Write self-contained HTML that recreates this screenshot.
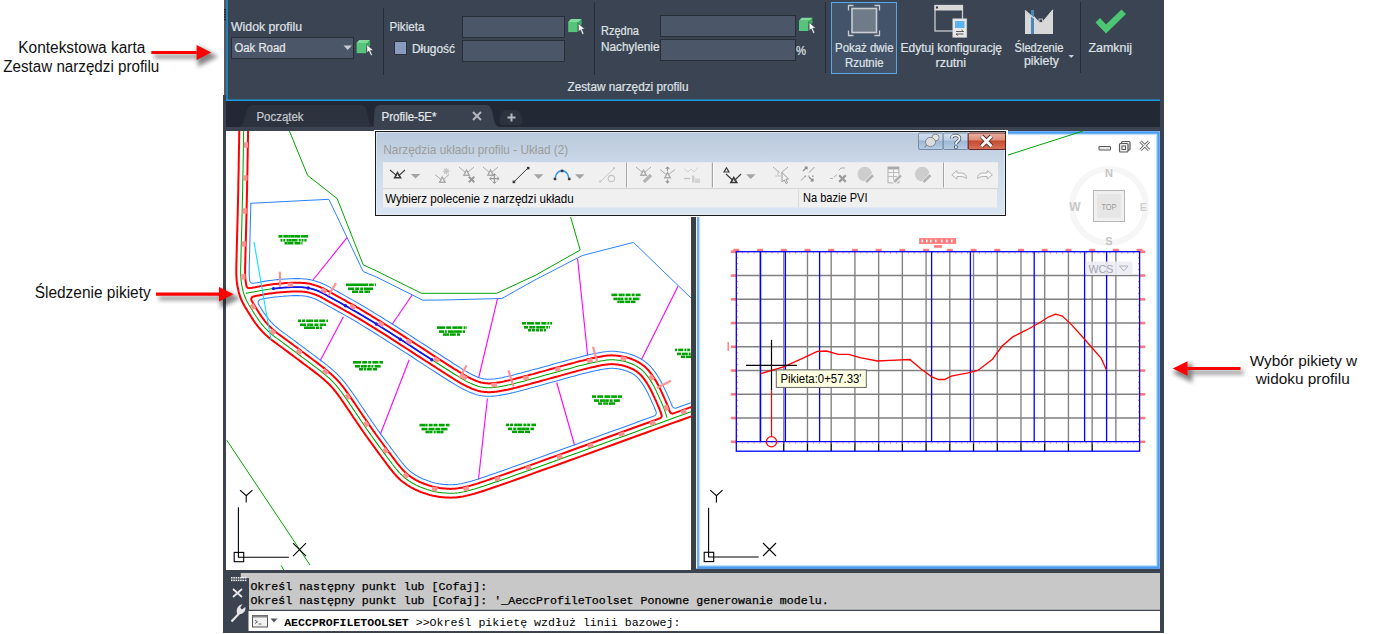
<!DOCTYPE html>
<html><head><meta charset="utf-8"><title>Civil 3D</title>
<style>html,body{margin:0;padding:0;width:1384px;height:634px;overflow:hidden;background:#fff}svg{display:block}</style>
</head><body>
<svg width="1384" height="634" viewBox="0 0 1384 634" shape-rendering="auto">
<rect x="0" y="0" width="1384" height="634" fill="#ffffff" />
<rect x="223" y="95" width="941" height="538" fill="#3b4250" />
<rect x="224" y="0" width="940" height="95" fill="#3b4250" />
<rect x="224" y="0" width="2.6" height="95" fill="#5a5856" />
<rect x="224.2" y="9" width="1.6" height="1.2" fill="#111" />
<rect x="224.2" y="11.5" width="1.6" height="1.2" fill="#111" />
<rect x="224.2" y="14" width="1.6" height="1.2" fill="#111" />
<rect x="224.2" y="16.5" width="1.6" height="1.2" fill="#111" />
<rect x="224.2" y="19" width="1.6" height="1.2" fill="#111" />
<rect x="226" y="0" width="934" height="101" fill="#3b4453" />
<rect x="226" y="0" width="2" height="101" fill="#1b7fc0" />
<rect x="226" y="99.5" width="934" height="1.6" fill="#1c9be0" />
<rect x="383" y="8" width="1" height="67" fill="#262c35" />
<rect x="594" y="2" width="1" height="73" fill="#262c35" />
<rect x="825" y="2" width="1" height="71" fill="#262c35" />
<rect x="1080" y="2" width="1" height="71" fill="#262c35" />
<text x="231" y="31" font-family="Liberation Sans" font-size="12" fill="#dfe1e5" font-weight="normal" text-anchor="start" textLength="71" lengthAdjust="spacingAndGlyphs" stroke="#dfe1e5" stroke-width="0.22">Widok profilu</text>
<rect x="231.5" y="37.5" width="122" height="21" fill="#4b5669" stroke="#282e38" stroke-width="1" />
<text x="234.5" y="52" font-family="Liberation Sans" font-size="12" fill="#e4e6ea" font-weight="normal" text-anchor="start" textLength="51" lengthAdjust="spacingAndGlyphs" stroke="#e4e6ea" stroke-width="0.22">Oak Road</text>
<path d="M343.5 45.5 L352 45.5 L347.75 50 Z" stroke="none" stroke-width="1" fill="#c8ccd2" />
<path d="M356.6 43 L366.0 43 L366.0 53.2 L356.6 53.2 Z" stroke="none" stroke-width="1" fill="#56c47a" />
<path d="M356.6 43 L359.20000000000005 40 L370.1 40 L367.5 43 Z" stroke="none" stroke-width="1" fill="#80da9c" />
<path d="M366.0 43 L367.5 43 L370.1 40 L370.1 45.5 L366.0 48 Z" stroke="none" stroke-width="1" fill="#3fae62" />
<path d="M366.8 44.6 L366.8 52.8 L368.8 51 L370.8 55.6 L372.40000000000003 54.9 L370.40000000000003 50.4 L373.20000000000005 50.2 Z" stroke="#353b45" stroke-width="0.5" fill="#f4f4f4" />
<text x="389.5" y="31" font-family="Liberation Sans" font-size="12" fill="#dfe1e5" font-weight="normal" text-anchor="start" textLength="35" lengthAdjust="spacingAndGlyphs" stroke="#dfe1e5" stroke-width="0.22">Pikieta</text>
<rect x="462.5" y="16.5" width="102" height="21" fill="#4b5669" stroke="#282e38" stroke-width="1" />
<rect x="462.5" y="40.5" width="102" height="21" fill="#4b5669" stroke="#282e38" stroke-width="1" />
<path d="M568.2 21.9 L577.6 21.9 L577.6 32.099999999999994 L568.2 32.099999999999994 Z" stroke="none" stroke-width="1" fill="#56c47a" />
<path d="M568.2 21.9 L570.8000000000001 18.9 L581.7 18.9 L579.1 21.9 Z" stroke="none" stroke-width="1" fill="#80da9c" />
<path d="M577.6 21.9 L579.1 21.9 L581.7 18.9 L581.7 24.4 L577.6 26.9 Z" stroke="none" stroke-width="1" fill="#3fae62" />
<path d="M578.4000000000001 23.5 L578.4000000000001 31.7 L580.4000000000001 29.9 L582.4000000000001 34.5 L584.0 33.8 L582.0 29.299999999999997 L584.8000000000001 29.099999999999998 Z" stroke="#353b45" stroke-width="0.5" fill="#f4f4f4" />
<rect x="394.5" y="41.5" width="12" height="13" fill="#8a9abd" stroke="#2d333d" stroke-width="1" />
<text x="412" y="53" font-family="Liberation Sans" font-size="12" fill="#dfe1e5" font-weight="normal" text-anchor="start" textLength="43" lengthAdjust="spacingAndGlyphs" stroke="#dfe1e5" stroke-width="0.22">Długość</text>
<text x="601" y="34.5" font-family="Liberation Sans" font-size="12" fill="#dfe1e5" font-weight="normal" text-anchor="start" textLength="38" lengthAdjust="spacingAndGlyphs" stroke="#dfe1e5" stroke-width="0.22">Rzędna</text>
<text x="601" y="50.5" font-family="Liberation Sans" font-size="12" fill="#dfe1e5" font-weight="normal" text-anchor="start" textLength="58.5" lengthAdjust="spacingAndGlyphs" stroke="#dfe1e5" stroke-width="0.22">Nachylenie</text>
<rect x="660.5" y="15.5" width="135" height="21" fill="#4b5669" stroke="#282e38" stroke-width="1" />
<rect x="660.5" y="39.5" width="135" height="21" fill="#4b5669" stroke="#282e38" stroke-width="1" />
<text x="796" y="55" font-family="Liberation Sans" font-size="12" fill="#dfe1e5" font-weight="normal" text-anchor="start" textLength="10" lengthAdjust="spacingAndGlyphs" stroke="#dfe1e5" stroke-width="0.22">%</text>
<path d="M799 20.8 L808.4 20.8 L808.4 31.0 L799 31.0 Z" stroke="none" stroke-width="1" fill="#56c47a" />
<path d="M799 20.8 L801.6 17.8 L812.5 17.8 L809.9 20.8 Z" stroke="none" stroke-width="1" fill="#80da9c" />
<path d="M808.4 20.8 L809.9 20.8 L812.5 17.8 L812.5 23.3 L808.4 25.8 Z" stroke="none" stroke-width="1" fill="#3fae62" />
<path d="M809.2 22.4 L809.2 30.6 L811.2 28.8 L813.2 33.4 L814.8 32.7 L812.8 28.200000000000003 L815.6 28.0 Z" stroke="#353b45" stroke-width="0.5" fill="#f4f4f4" />
<rect x="831.5" y="2.5" width="65" height="71" fill="#43536a" stroke="#5aa7e6" stroke-width="1" />
<rect x="852" y="8.5" width="24.5" height="24" fill="#6f7b89" stroke="#c9cdd2" stroke-width="1.6" />
<path d="M853.5 5.5 L848.5 5.5 L848.5 10.5" stroke="#c9cdd2" stroke-width="1.3" fill="none" />
<path d="M874.5 5.5 L879.5 5.5 L879.5 10.5" stroke="#c9cdd2" stroke-width="1.3" fill="none" />
<path d="M853.5 35.5 L848.5 35.5 L848.5 30.5" stroke="#c9cdd2" stroke-width="1.3" fill="none" />
<path d="M874.5 35.5 L879.5 35.5 L879.5 30.5" stroke="#c9cdd2" stroke-width="1.3" fill="none" />
<text x="835" y="51.5" font-family="Liberation Sans" font-size="12" fill="#dfe1e5" font-weight="normal" text-anchor="start" textLength="58.5" lengthAdjust="spacingAndGlyphs" stroke="#dfe1e5" stroke-width="0.22">Pokaż dwie</text>
<text x="845" y="66.5" font-family="Liberation Sans" font-size="12" fill="#dfe1e5" font-weight="normal" text-anchor="start" textLength="38.5" lengthAdjust="spacingAndGlyphs" stroke="#dfe1e5" stroke-width="0.22">Rzutnie</text>
<rect x="935" y="5.5" width="27.5" height="25.5" fill="none" stroke="#c9cdd2" stroke-width="1.3" />
<rect x="934.5" y="5" width="28.5" height="5.5" fill="#d9d9d9" />
<rect x="936" y="6.5" width="2" height="2" fill="#333" />
<rect x="952.8" y="18.8" width="14" height="18.5" fill="#e8e8e8" stroke="#c0c0c0" stroke-width="0.6" />
<rect x="955" y="21" width="9.5" height="7" fill="#5ab4f2" />
<path d="M956 31.5 L963.5 31.5 M961.5 30 L963.5 31.5 M956 34 L963.5 34 M958 35.5 L956 34" stroke="#333" stroke-width="0.8" fill="none" />
<text x="900.5" y="51.5" font-family="Liberation Sans" font-size="12" fill="#dfe1e5" font-weight="normal" text-anchor="start" textLength="101.5" lengthAdjust="spacingAndGlyphs" stroke="#dfe1e5" stroke-width="0.22">Edytuj konfigurację</text>
<text x="935.5" y="66.5" font-family="Liberation Sans" font-size="12" fill="#dfe1e5" font-weight="normal" text-anchor="start" textLength="30.5" lengthAdjust="spacingAndGlyphs" stroke="#dfe1e5" stroke-width="0.22">rzutni</text>
<path d="M1025 11 L1031 16 L1031 34 L1025 34 Z" stroke="none" stroke-width="1" fill="#d8d8d8" />
<path d="M1034 16 L1038.5 21 L1043 21 L1053 10 L1053 34 L1034 34 Z" stroke="none" stroke-width="1" fill="#d8d8d8" />
<rect x="1031" y="10" width="3" height="24" fill="#4a86b8" />
<path d="M1025 10.5 L1038.5 22 L1043 22 L1053 10" stroke="#d8d8d8" stroke-width="1.2" fill="none" />
<rect x="1039" y="19" width="3.5" height="3.5" fill="#3b4453" stroke="#d8d8d8" stroke-width="0.8" />
<text x="1014.5" y="51.5" font-family="Liberation Sans" font-size="12" fill="#dfe1e5" font-weight="normal" text-anchor="start" textLength="49" lengthAdjust="spacingAndGlyphs" stroke="#dfe1e5" stroke-width="0.22">Śledzenie</text>
<text x="1024" y="65" font-family="Liberation Sans" font-size="12" fill="#dfe1e5" font-weight="normal" text-anchor="start" textLength="35" lengthAdjust="spacingAndGlyphs" stroke="#dfe1e5" stroke-width="0.22">pikiety</text>
<path d="M1068.5 55 L1074 55 L1071.25 58 Z" stroke="none" stroke-width="1" fill="#c8ccd2" />
<path d="M1095.5 22.5 L1100 18 L1106 24.5 L1121.5 9.5 L1126 14 L1106 33.5 Z" stroke="none" stroke-width="1" fill="#4cc672" />
<text x="1088.5" y="51.5" font-family="Liberation Sans" font-size="12" fill="#dfe1e5" font-weight="normal" text-anchor="start" textLength="43.5" lengthAdjust="spacingAndGlyphs" stroke="#dfe1e5" stroke-width="0.22">Zamknij</text>
<text x="567.5" y="91" font-family="Liberation Sans" font-size="12" fill="#dfe1e5" font-weight="normal" text-anchor="start" textLength="121" lengthAdjust="spacingAndGlyphs" stroke="#dfe1e5" stroke-width="0.22">Zestaw narzędzi profilu</text>
<rect x="226" y="101" width="934" height="26" fill="#232934" />
<path d="M239 127 C245 127 245 105 252 105 L360 105 C366 105 367 110 368 118 C369 124 372 127 376 127 Z" stroke="none" stroke-width="1" fill="#2c333e" />
<text x="256.5" y="120.5" font-family="Liberation Sans" font-size="12" fill="#c4c8cf" font-weight="normal" text-anchor="start" textLength="47" lengthAdjust="spacingAndGlyphs" stroke="#c4c8cf" stroke-width="0.22">Początek</text>
<path d="M373.5 127 L374.5 111 C375 107 377 105 381 105 L486 105 C492 105 492 112 494 120 C495 125 497 127 500 127 Z" stroke="none" stroke-width="1" fill="#3a4250" />
<text x="381.5" y="120.5" font-family="Liberation Sans" font-size="12" fill="#e4e6ea" font-weight="normal" text-anchor="start" textLength="55" lengthAdjust="spacingAndGlyphs" stroke="#e4e6ea" stroke-width="0.22">Profile-5E*</text>
<path d="M473 112 L481 120 M481 112 L473 120" stroke="#b4b8bf" stroke-width="2" fill="none" />
<path d="M500 124 C499 116 501 110 507 110 L516 110 C520 110 521 114 522 119 C523 123 523 125 519 125 L503 125 Z" stroke="none" stroke-width="1" fill="#2c333e" />
<path d="M507.5 117.5 L515.5 117.5 M511.5 113.5 L511.5 121.5" stroke="#b4b8bf" stroke-width="2" fill="none" />
<rect x="223" y="127" width="941" height="4" fill="#3b4250" />
<rect x="226" y="131" width="465.5" height="439" fill="#ffffff" />
<rect x="691" y="131" width="5" height="441" fill="#3c3f44" />
<rect x="696" y="131" width="464" height="437.5" fill="#ffffff" />
<rect x="697.5" y="132.5" width="461" height="435" fill="none" stroke="#4a9cf2" stroke-width="2.6" />
<rect x="699.6" y="134.6" width="457" height="431" fill="none" stroke="#b8dcff" stroke-width="1" />
<rect x="696" y="131" width="1.2" height="437.5" fill="#e8f2ff" />
<defs><clipPath id="clipL"><rect x="226" y="131" width="465" height="439"/></clipPath></defs>
<g clip-path="url(#clipL)">
<polyline points="250.4,203.3 328.9,199.3 363.2,271.5 376.0,276.8 422.9,300.2 442.0,300.0 501.8,298.5 536.0,279.4 582.3,255.5 633.5,242.4 656.1,264.3 700.0,306.7" fill="none" stroke="#2b82ff" stroke-width="1" />
<polyline points="289.4,131.0 307.6,175.4 337.2,198.6 363.2,264.8 376.0,270.7 421.5,293.3 496.6,293.3 536.0,275.0 580.2,250.0 570.0,215.0" fill="none" stroke="#00a300" stroke-width="1" />
<polyline points="347.0,237.6 313.0,280.0" fill="none" stroke="#ff00ff" stroke-width="1.1" />
<polyline points="343.4,316.8 320.0,361.0" fill="none" stroke="#ff00ff" stroke-width="1.1" />
<polyline points="412.1,295.0 391.0,326.0" fill="none" stroke="#ff00ff" stroke-width="1.1" />
<polyline points="409.2,359.8 379.5,436.5" fill="none" stroke="#ff00ff" stroke-width="1.1" />
<polyline points="497.5,298.6 478.6,378.0" fill="none" stroke="#ff00ff" stroke-width="1.1" />
<polyline points="487.4,398.5 478.3,481.0" fill="none" stroke="#ff00ff" stroke-width="1.1" />
<polyline points="577.6,258.6 587.8,357.0" fill="none" stroke="#ff00ff" stroke-width="1.1" />
<polyline points="678.0,286.3 640.7,361.0" fill="none" stroke="#ff00ff" stroke-width="1.1" />
<polyline points="556.7,382.5 574.8,446.0" fill="none" stroke="#ff00ff" stroke-width="1.1" />
<polyline points="226.8,440.3 310.0,565.0" fill="none" stroke="#00a300" stroke-width="1" />
<polyline points="281.2,565.5 283.7,570.0" fill="none" stroke="#00a300" stroke-width="1" />
<path d="M236.1 100.1 L236.1 100.3 L236.1 100.7 L236.1 101.1 L236.1 101.7 L236.1 102.5 L236.1 103.3 L236.1 104.3 L236.0 105.4 L236.0 106.6 L236.0 107.9 L236.0 109.4 L236.0 110.9 L236.0 112.6 L236.0 114.5 L235.9 116.4 L235.9 118.5 L235.9 120.7 L235.9 123.1 L235.8 125.6 L235.8 128.3 L235.8 131.1 L235.7 134.1 L235.7 137.2 L235.6 140.5 L235.6 143.9 L235.5 147.4 L235.4 151.2 L235.4 155.0 L235.3 159.0 L235.2 163.2 L235.2 167.5 L235.1 171.8 L235.0 176.0 L234.9 180.3 L234.8 184.5 L234.8 188.6 L234.7 192.8 L234.6 196.9 L234.5 201.0 L234.4 205.1 L234.3 209.1 L234.2 213.1 L234.1 217.1 L234.0 221.0 L233.9 225.0 L233.8 228.8 L233.7 232.7 L233.6 236.4 L233.5 239.9 L233.4 243.2 L233.3 246.4 L233.3 249.4 L233.2 252.1 L233.1 254.7 L233.1 257.1 L233.0 259.4 L233.0 261.4 L232.9 263.3 L232.9 264.9 L232.9 266.4 L232.8 267.8 L232.8 268.9 L232.8 268.9 L232.8 269.9 L232.8 269.9 L232.8 270.8 L232.8 270.9 L232.8 271.8 L232.8 271.9 L232.8 272.8 L232.8 272.9 L232.8 273.7 L232.8 273.8 L232.8 274.7 L232.8 274.8 L232.9 275.6 L232.9 275.7 L232.9 276.6 L232.9 276.7 L233.0 277.5 L233.0 277.6 L233.0 278.4 L233.0 278.5 L233.1 279.3 L233.1 279.4 L233.2 280.2 L233.2 280.3 L233.3 281.0 L233.3 281.2 L233.4 281.9 L233.4 282.0 L233.5 282.8 L233.5 282.9 L233.6 283.6 L233.6 283.7 L233.7 284.5 L233.7 284.6 L233.8 285.3 L233.8 285.4 L233.9 286.1 L233.9 286.2 L234.1 286.9 L234.1 287.0 L234.2 287.7 L234.2 287.8 L234.4 288.5 L234.4 288.6 L234.5 289.3 L234.5 289.4 L234.7 290.0 L234.7 290.1 L234.9 290.8 L234.9 290.9 L235.0 291.6 L235.1 291.7 L235.2 292.3 L235.2 292.4 L235.4 293.1 L235.4 293.2 L235.6 293.8 L235.6 293.9 L235.8 294.5 L235.8 294.7 L236.0 295.3 L236.1 295.4 L236.2 296.0 L236.3 296.1 L236.5 296.7 L236.5 296.8 L236.7 297.4 L236.8 297.6 L237.0 298.2 L237.0 298.3 L237.3 298.9 L237.3 299.1 L237.5 299.7 L237.6 299.8 L237.8 300.4 L237.9 300.5 L238.1 301.1 L238.2 301.2 L238.5 301.8 L238.5 302.0 L238.8 302.6 L238.8 302.7 L239.1 303.3 L239.2 303.4 L239.5 304.0 L239.5 304.1 L239.8 304.7 L239.9 304.9 L240.2 305.5 L240.3 305.6 L240.6 306.2 L240.7 306.3 L241.0 306.9 L241.1 307.0 L241.4 307.6 L241.5 307.7 L241.8 308.3 L242.2 309.0 L242.6 309.7 L243.0 310.3 L243.5 311.0 L243.9 311.7 L244.3 312.5 L244.8 313.2 L245.2 313.9 L245.7 314.7 L246.2 315.5 L246.7 316.3 L247.2 317.1 L247.7 317.9 L248.2 318.7 L248.8 319.6 L249.3 320.4 L249.4 320.5 L249.9 321.3 L249.9 321.4 L250.5 322.2 L250.5 322.3 L251.1 323.1 L251.2 323.2 L251.7 324.0 L251.8 324.1 L252.3 324.8 L252.4 324.9 L252.9 325.7 L253.0 325.8 L253.6 326.5 L253.6 326.6 L254.2 327.4 L254.3 327.5 L254.9 328.2 L254.9 328.3 L255.5 329.0 L255.6 329.1 L256.2 329.8 L256.3 329.9 L256.9 330.6 L256.9 330.7 L257.5 331.4 L257.6 331.5 L258.2 332.2 L258.3 332.3 L258.9 332.9 L259.0 333.0 L259.6 333.7 L259.7 333.8 L260.3 334.5 L260.4 334.5 L261.0 335.2 L261.1 335.3 L261.8 335.9 L261.9 336.0 L262.5 336.6 L262.6 336.7 L263.2 337.3 L263.3 337.4 L264.0 338.0 L264.1 338.1 L264.7 338.7 L264.8 338.8 L265.5 339.4 L265.6 339.5 L266.3 340.1 L266.4 340.2 L267.1 340.7 L267.2 340.8 L267.8 341.4 L267.9 341.5 L268.6 342.0 L268.7 342.1 L269.4 342.6 L269.5 342.7 L270.2 343.3 L270.3 343.3 L271.1 343.9 L271.2 343.9 L271.9 344.5 L271.9 344.5 L272.7 345.0 L272.7 345.0 L273.5 345.6 L273.5 345.6 L274.3 346.2 L274.3 346.2 L275.2 346.9 L275.2 346.9 L276.2 347.6 L276.2 347.6 L277.1 348.3 L278.2 349.1 L279.2 349.8 L280.3 350.6 L281.4 351.5 L282.6 352.4 L283.8 353.3 L285.1 354.2 L286.4 355.2 L287.7 356.2 L289.1 357.2 L290.5 358.2 L291.9 359.3 L293.2 360.3 L294.6 361.3 L296.0 362.3 L297.4 363.4 L298.8 364.4 L300.1 365.4 L301.5 366.5 L302.9 367.5 L304.3 368.5 L305.6 369.6 L307.0 370.6 L308.4 371.7 L309.8 372.7 L311.1 373.7 L311.1 373.7 L311.1 373.7 L311.1 373.7 L312.4 374.7 L312.4 374.7 L312.4 374.7 L312.4 374.7 L313.7 375.7 L313.7 375.7 L313.7 375.7 L313.7 375.7 L314.9 376.6 L314.9 376.6 L314.9 376.6 L314.9 376.6 L316.0 377.5 L316.0 377.5 L316.1 377.5 L316.1 377.5 L317.2 378.4 L317.2 378.4 L317.2 378.4 L317.2 378.4 L318.2 379.3 L318.2 379.3 L318.3 379.3 L318.3 379.3 L319.3 380.1 L319.3 380.1 L319.3 380.2 L319.3 380.2 L320.3 381.0 L320.3 381.0 L320.3 381.0 L320.3 381.0 L321.2 381.8 L321.2 381.8 L321.2 381.8 L321.2 381.8 L322.1 382.5 L322.1 382.5 L322.1 382.6 L322.1 382.6 L322.9 383.3 L322.9 383.3 L323.0 383.3 L323.0 383.3 L323.7 384.0 L323.7 384.0 L323.8 384.0 L323.8 384.0 L324.5 384.7 L324.5 384.7 L324.5 384.7 L324.5 384.7 L325.2 385.4 L325.2 385.4 L325.2 385.4 L325.2 385.4 L325.9 386.0 L325.9 386.0 L325.9 386.0 L325.9 386.0 L326.5 386.6 L326.5 386.6 L326.5 386.6 L326.5 386.6 L327.1 387.2 L327.1 387.2 L327.1 387.3 L327.1 387.3 L327.7 387.9 L327.7 387.9 L327.8 387.9 L327.8 387.9 L328.4 388.6 L328.4 388.6 L328.4 388.6 L328.4 388.6 L329.0 389.2 L329.0 389.2 L329.0 389.3 L329.0 389.3 L329.6 390.0 L329.6 390.0 L329.6 390.0 L329.7 390.0 L330.3 390.7 L330.3 390.7 L330.3 390.7 L330.3 390.7 L330.9 391.4 L330.9 391.4 L330.9 391.5 L330.9 391.5 L331.5 392.2 L331.5 392.2 L331.6 392.2 L331.6 392.2 L332.2 393.0 L332.2 393.0 L332.2 393.0 L332.2 393.0 L332.8 393.8 L332.8 393.8 L332.8 393.8 L332.8 393.8 L333.4 394.6 L333.4 394.6 L333.5 394.6 L333.5 394.6 L334.1 395.4 L334.1 395.4 L334.1 395.5 L334.1 395.5 L334.7 396.3 L334.7 396.3 L334.8 396.3 L334.8 396.3 L335.4 397.2 L335.4 397.2 L335.4 397.2 L335.4 397.2 L336.0 398.1 L336.0 398.1 L336.0 398.1 L336.0 398.1 L336.7 399.0 L336.7 399.0 L336.7 399.0 L336.7 399.0 L337.4 400.0 L337.4 400.0 L337.4 400.0 L337.4 400.0 L338.1 401.0 L338.1 401.0 L338.1 401.0 L338.1 401.0 L338.9 402.1 L338.9 402.1 L338.9 402.1 L338.9 402.1 L339.7 403.2 L339.7 403.2 L339.7 403.2 L339.7 403.2 L340.5 404.4 L340.5 404.4 L341.3 405.6 L341.3 405.6 L342.2 406.9 L342.2 406.9 L343.1 408.2 L343.1 408.2 L344.0 409.5 L344.0 409.5 L344.9 410.9 L344.9 410.9 L345.9 412.3 L345.9 412.4 L346.9 413.8 L346.9 413.8 L347.9 415.3 L347.9 415.3 L349.0 416.9 L349.0 416.9 L350.0 418.5 L350.0 418.5 L351.1 420.2 L352.2 421.8 L353.4 423.5 L354.5 425.1 L355.6 426.8 L356.7 428.4 L357.8 430.0 L358.9 431.6 L360.0 433.2 L361.2 434.8 L362.3 436.4 L363.4 438.0 L364.5 439.5 L365.6 441.1 L366.7 442.7 L367.8 444.2 L369.0 445.7 L370.1 447.3 L371.1 448.8 L372.2 450.3 L373.3 451.8 L374.4 453.2 L375.5 454.7 L376.6 456.2 L377.7 457.6 L378.7 459.1 L379.8 460.5 L380.9 461.9 L381.9 463.4 L383.0 464.8 L384.0 466.2 L385.1 467.6 L386.1 468.9 L386.2 469.0 L387.2 470.3 L387.2 470.4 L388.2 471.6 L388.3 471.7 L389.2 472.9 L389.3 473.0 L390.2 474.1 L390.3 474.2 L391.2 475.3 L391.3 475.4 L392.2 476.4 L392.3 476.5 L393.1 477.5 L393.2 477.6 L394.1 478.5 L394.2 478.7 L395.0 479.5 L395.1 479.6 L395.9 480.4 L396.0 480.6 L396.8 481.3 L396.9 481.5 L397.7 482.2 L397.9 482.3 L398.6 483.0 L398.8 483.1 L399.4 483.7 L399.7 483.9 L400.3 484.4 L400.6 484.6 L401.2 485.1 L401.3 485.2 L402.0 485.6 L402.0 485.7 L402.7 486.2 L402.8 486.2 L403.5 486.7 L403.5 486.7 L404.2 487.2 L404.3 487.2 L404.9 487.7 L405.0 487.7 L405.7 488.2 L405.8 488.2 L406.4 488.6 L406.5 488.7 L407.2 489.1 L407.3 489.2 L408.0 489.6 L408.0 489.6 L408.7 490.0 L408.8 490.1 L409.5 490.5 L409.6 490.5 L410.2 490.9 L410.3 490.9 L411.0 491.3 L411.1 491.3 L411.8 491.7 L411.9 491.8 L412.5 492.1 L412.6 492.1 L413.3 492.5 L413.4 492.5 L414.1 492.9 L414.3 492.9 L415.0 493.3 L415.1 493.3 L415.8 493.7 L415.9 493.7 L416.7 494.0 L416.8 494.1 L417.6 494.4 L417.7 494.4 L418.5 494.8 L418.6 494.8 L419.4 495.1 L419.5 495.2 L420.4 495.5 L420.5 495.5 L421.4 495.8 L421.5 495.9 L422.4 496.2 L422.5 496.2 L423.4 496.5 L423.5 496.6 L424.4 496.9 L424.5 496.9 L425.5 497.2 L425.6 497.3 L426.6 497.6 L426.6 497.6 L427.7 497.9 L427.7 497.9 L428.8 498.2 L429.0 498.3 L430.0 498.6 L430.2 498.6 L431.3 498.9 L431.5 498.9 L432.5 499.2 L432.7 499.2 L433.8 499.5 L434.0 499.5 L435.1 499.7 L435.3 499.7 L436.4 499.9 L436.6 500.0 L437.8 500.2 L437.9 500.2 L439.1 500.3 L439.3 500.4 L440.5 500.5 L440.6 500.5 L441.9 500.7 L442.0 500.7 L443.3 500.8 L443.4 500.8 L444.7 500.9 L444.8 500.9 L446.1 501.0 L446.2 501.0 L447.6 501.1 L447.7 501.1 L449.0 501.1 L449.1 501.1 L450.5 501.2 L450.8 501.2 L452.2 501.1 L452.5 501.1 L454.0 501.1 L454.3 501.0 L455.8 500.9 L456.1 500.9 L457.7 500.7 L457.9 500.7 L459.6 500.5 L459.8 500.5 L461.5 500.2 L461.7 500.2 L463.5 499.8 L463.7 499.8 L465.6 499.4 L465.8 499.4 L467.7 499.0 L467.9 498.9 L469.9 498.5 L470.0 498.4 L472.1 497.9 L472.3 497.9 L474.4 497.3 L474.5 497.2 L476.7 496.6 L476.9 496.6 L479.1 495.9 L479.3 495.9 L481.6 495.1 L481.7 495.1 L484.1 494.3 L484.2 494.3 L487.2 493.3 L487.3 493.3 L490.9 492.0 L491.0 492.0 L495.2 490.6 L495.2 490.6 L500.0 488.9 L505.5 487.0 L511.5 484.9 L518.1 482.5 L525.4 479.9 L533.2 477.2 L541.6 474.1 L550.6 470.9 L560.3 467.5 L570.5 463.8 L581.3 459.9 L592.7 455.8 L604.7 451.4 L616.1 447.3 L627.0 443.3 L637.3 439.6 L647.1 436.1 L656.3 432.7 L664.9 429.6 L672.9 426.7 L680.4 424.0 L687.4 421.5 L693.8 419.2 L699.6 417.1 L704.8 415.2 L709.5 413.5 L713.6 412.0 L717.2 410.7 L720.2 409.6 L723.0 408.6 L725.6 407.6 L728.1 406.7 L730.3 405.9 L732.4 405.2 L734.3 404.5 L735.9 403.9 L737.4 403.3 L738.8 402.9 L739.9 402.4 L740.8 402.1 L741.6 401.8 L742.1 401.6 L742.5 401.5 L742.6 401.5 L743.6 401.0 L744.5 400.5 L745.3 399.8 L746.0 399.1 L746.6 398.2 L747.1 397.3 L747.5 396.4 L747.8 395.4 L747.9 394.4 L747.9 393.3 L747.7 392.3 L747.4 391.3 L747.0 390.4 L746.5 389.5 L745.8 388.7 L745.1 388.0 L744.2 387.4 L743.3 386.9 L742.4 386.5 L741.4 386.2 L740.4 386.1 L739.3 386.1 L738.3 386.3 L737.2 386.6 L737.1 386.6 L736.7 386.8 L736.2 387.0 L735.4 387.3 L734.5 387.6 L733.4 388.0 L732.1 388.5 L730.6 389.0 L728.9 389.6 L727.0 390.3 L724.9 391.1 L722.7 391.9 L720.2 392.8 L717.6 393.7 L714.8 394.7 L711.8 395.8 L708.2 397.1 L704.1 398.6 L699.4 400.3 L694.2 402.2 L688.4 404.3 L682.0 406.6 L676.7 408.5 L676.7 408.5 L676.3 408.7 L676.2 408.7 L675.7 408.7 L675.7 408.8 L675.2 408.8 L675.1 408.8 L674.7 408.7 L674.6 408.7 L674.2 408.6 L674.1 408.6 L673.7 408.4 L673.6 408.4 L673.2 408.2 L673.1 408.1 L672.8 407.9 L672.7 407.8 L672.4 407.5 L672.3 407.5 L672.0 407.1 L672.0 407.0 L671.8 406.7 L671.7 406.6 L671.5 406.2 L671.5 406.1 L671.3 405.6 L671.3 405.5 L671.0 404.9 L671.0 404.9 L670.8 404.3 L670.8 404.2 L670.5 403.6 L670.5 403.5 L670.2 402.9 L670.2 402.8 L669.9 402.2 L669.9 402.1 L669.6 401.4 L669.6 401.4 L669.3 400.6 L669.3 400.6 L668.9 399.8 L668.9 399.8 L668.6 399.0 L668.6 399.0 L668.2 398.2 L668.2 398.1 L667.8 397.3 L667.8 397.2 L667.4 396.4 L667.4 396.3 L667.0 395.4 L667.0 395.4 L666.6 394.5 L666.1 393.5 L665.7 392.5 L665.2 391.5 L664.7 390.4 L664.2 389.3 L663.7 388.2 L663.1 387.1 L663.1 387.0 L662.5 385.9 L662.5 385.8 L661.9 384.7 L661.9 384.6 L661.3 383.5 L661.3 383.4 L660.7 382.3 L660.7 382.2 L660.1 381.2 L660.0 381.1 L659.4 380.1 L659.4 379.9 L658.8 378.9 L658.7 378.8 L658.1 377.8 L658.0 377.7 L657.4 376.7 L657.3 376.6 L656.7 375.7 L656.6 375.5 L656.0 374.6 L655.9 374.5 L655.3 373.5 L655.2 373.4 L654.5 372.5 L654.4 372.4 L653.8 371.5 L653.7 371.3 L653.0 370.5 L652.9 370.3 L652.2 369.5 L652.0 369.2 L651.3 368.4 L651.1 368.1 L650.4 367.3 L650.2 367.1 L649.4 366.3 L649.2 366.1 L648.4 365.3 L648.2 365.1 L647.4 364.4 L647.1 364.1 L646.3 363.4 L646.1 363.2 L645.2 362.6 L645.0 362.4 L644.1 361.7 L643.8 361.5 L642.9 360.9 L642.6 360.7 L641.7 360.1 L641.4 359.9 L640.5 359.4 L640.2 359.2 L639.2 358.7 L639.0 358.5 L637.9 358.0 L637.7 357.9 L636.6 357.4 L636.4 357.2 L635.3 356.8 L635.0 356.7 L633.9 356.2 L633.7 356.1 L632.6 355.7 L632.4 355.6 L631.3 355.2 L631.0 355.1 L629.9 354.8 L629.7 354.7 L628.6 354.4 L628.3 354.3 L627.2 354.0 L627.0 353.9 L625.8 353.6 L625.6 353.6 L624.4 353.3 L624.2 353.3 L623.0 353.0 L622.8 353.0 L621.6 352.8 L621.4 352.7 L620.2 352.5 L620.0 352.5 L618.8 352.3 L618.6 352.3 L617.4 352.2 L617.2 352.2 L616.0 352.0 L615.7 352.0 L614.5 351.9 L614.3 351.9 L613.1 351.9 L612.9 351.9 L611.7 351.8 L611.1 351.8 L609.7 351.9 L609.3 351.9 L607.7 352.0 L607.3 352.1 L605.5 352.3 L605.2 352.3 L603.2 352.6 L603.0 352.6 L600.8 353.0 L600.6 353.0 L598.1 353.5 L598.0 353.5 L595.3 354.0 L595.2 354.0 L592.3 354.6 L592.2 354.7 L589.1 355.3 L589.0 355.4 L585.8 356.1 L585.7 356.2 L582.2 357.0 L582.1 357.0 L578.5 357.9 L578.4 358.0 L574.5 359.0 L574.5 359.0 L570.4 360.1 L570.3 360.1 L566.1 361.3 L566.0 361.3 L561.5 362.5 L557.2 363.7 L553.1 364.9 L549.1 366.0 L545.4 367.0 L541.7 368.0 L538.3 368.9 L535.1 369.8 L532.0 370.7 L529.1 371.5 L529.1 371.5 L526.3 372.2 L526.3 372.2 L523.8 372.9 L523.8 372.9 L521.4 373.5 L521.4 373.5 L519.2 374.1 L519.2 374.1 L517.2 374.7 L517.2 374.7 L517.2 374.7 L517.2 374.7 L515.4 375.1 L515.4 375.1 L515.3 375.1 L515.3 375.1 L513.7 375.6 L513.7 375.6 L513.7 375.6 L513.7 375.6 L512.1 376.0 L512.1 376.0 L512.1 376.0 L512.1 376.0 L510.5 376.4 L510.5 376.4 L510.5 376.4 L510.5 376.4 L509.0 376.7 L509.0 376.7 L509.0 376.7 L509.0 376.7 L507.5 377.1 L507.5 377.1 L507.5 377.1 L507.5 377.1 L506.1 377.4 L506.1 377.4 L506.0 377.4 L506.0 377.4 L504.6 377.7 L504.6 377.7 L504.6 377.7 L504.6 377.7 L503.3 378.0 L503.3 378.0 L503.2 378.0 L503.2 378.0 L501.9 378.3 L501.9 378.3 L501.9 378.3 L501.9 378.3 L500.6 378.5 L500.6 378.5 L500.6 378.5 L500.6 378.5 L499.4 378.7 L499.4 378.7 L499.3 378.7 L499.3 378.7 L498.1 378.9 L498.1 378.9 L498.1 379.0 L498.1 379.0 L497.0 379.1 L497.0 379.1 L496.9 379.1 L496.9 379.1 L495.8 379.3 L495.8 379.3 L495.8 379.3 L495.8 379.3 L494.7 379.5 L494.7 379.5 L494.7 379.5 L494.7 379.5 L493.7 379.6 L493.7 379.6 L493.6 379.6 L493.6 379.6 L492.7 379.7 L492.7 379.7 L492.6 379.7 L492.6 379.7 L491.8 379.8 L491.8 379.8 L491.7 379.8 L491.7 379.8 L490.9 379.8 L490.9 379.8 L490.8 379.8 L490.8 379.8 L490.0 379.9 L490.0 379.9 L489.9 379.9 L489.9 379.9 L489.1 379.9 L489.1 379.9 L489.0 379.9 L489.0 379.9 L488.2 379.9 L488.2 379.9 L488.1 379.9 L488.1 379.9 L487.4 379.8 L487.4 379.8 L487.3 379.8 L487.3 379.8 L486.6 379.8 L486.5 379.8 L486.5 379.8 L486.4 379.8 L485.7 379.7 L485.7 379.7 L485.6 379.7 L485.6 379.7 L484.9 379.6 L484.9 379.6 L484.8 379.6 L484.8 379.6 L484.2 379.5 L484.1 379.5 L484.0 379.5 L484.0 379.5 L483.4 379.4 L483.4 379.4 L483.3 379.4 L483.3 379.4 L482.6 379.2 L482.6 379.2 L482.5 379.2 L482.5 379.2 L481.9 379.1 L481.9 379.1 L481.8 379.0 L481.8 379.0 L481.1 378.9 L481.1 378.9 L481.0 378.8 L481.0 378.8 L480.4 378.6 L480.4 378.6 L480.3 378.6 L480.3 378.6 L479.6 378.4 L479.6 378.4 L479.6 378.4 L479.6 378.4 L478.8 378.1 L478.8 378.1 L478.7 378.1 L478.7 378.1 L478.0 377.8 L477.9 377.8 L477.9 377.8 L477.9 377.8 L477.1 377.5 L477.1 377.4 L477.0 377.4 L477.0 377.4 L476.2 377.1 L476.2 377.1 L476.2 377.1 L476.2 377.1 L475.4 376.7 L475.4 376.7 L475.3 376.7 L475.3 376.7 L474.5 376.4 L474.5 376.3 L474.4 376.3 L474.4 376.3 L473.6 375.9 L473.6 375.9 L473.5 375.9 L473.5 375.9 L472.7 375.5 L472.7 375.5 L472.6 375.5 L472.6 375.5 L471.8 375.1 L471.8 375.1 L471.7 375.1 L471.7 375.1 L470.8 374.6 L470.8 374.6 L470.8 374.6 L470.8 374.6 L469.9 374.1 L469.9 374.1 L469.8 374.1 L469.8 374.1 L468.9 373.6 L468.9 373.6 L468.9 373.6 L468.9 373.6 L468.0 373.1 L468.0 373.1 L467.9 373.1 L467.9 373.1 L467.0 372.6 L467.0 372.6 L467.0 372.5 L467.0 372.5 L466.0 372.0 L466.0 372.0 L466.0 372.0 L466.0 372.0 L465.0 371.4 L465.0 371.4 L465.0 371.4 L465.0 371.4 L463.8 370.7 L463.8 370.6 L463.7 370.6 L463.7 370.6 L462.2 369.7 L462.2 369.7 L462.2 369.7 L462.2 369.7 L460.4 368.6 L460.4 368.6 L460.4 368.6 L460.4 368.6 L458.4 367.3 L458.4 367.3 L458.3 367.3 L458.3 367.3 L456.0 365.8 L456.0 365.8 L456.0 365.8 L456.0 365.8 L453.4 364.2 L453.4 364.2 L453.4 364.2 L453.4 364.2 L450.6 362.3 L450.6 362.3 L447.5 360.4 L447.4 360.3 L444.1 358.2 L444.1 358.2 L440.4 355.8 L440.4 355.8 L436.6 353.3 L432.4 350.6 L428.0 347.8 L423.3 344.8 L418.4 341.6 L413.2 338.2 L408.2 334.9 L403.3 331.8 L398.6 328.8 L394.0 325.8 L389.6 323.1 L389.6 323.0 L385.4 320.4 L385.3 320.4 L381.3 317.8 L381.2 317.8 L377.3 315.4 L377.3 315.4 L373.6 313.1 L373.5 313.0 L370.0 310.9 L369.9 310.8 L366.5 308.8 L366.5 308.8 L363.2 306.8 L363.1 306.8 L360.1 305.0 L360.0 304.9 L357.1 303.2 L357.0 303.2 L354.2 301.6 L354.2 301.6 L351.5 300.1 L349.0 298.7 L346.7 297.4 L344.4 296.1 L342.3 294.9 L340.3 293.8 L338.4 292.8 L336.7 291.8 L335.0 290.9 L333.5 290.1 L332.2 289.3 L330.9 288.6 L329.8 288.0 L328.8 287.4 L327.9 286.9 L327.1 286.5 L326.5 286.2 L326.3 286.1 L325.7 285.8 L325.6 285.7 L324.9 285.4 L324.8 285.3 L324.1 285.0 L324.0 284.9 L323.3 284.6 L323.1 284.5 L322.4 284.2 L322.3 284.1 L321.6 283.9 L321.4 283.8 L320.7 283.5 L320.6 283.4 L319.8 283.2 L319.7 283.1 L318.9 282.8 L318.8 282.8 L318.0 282.5 L317.8 282.5 L317.0 282.2 L316.9 282.2 L316.1 281.9 L316.0 281.8 L315.1 281.6 L315.0 281.6 L314.1 281.3 L314.0 281.3 L313.1 281.0 L313.0 281.0 L312.1 280.8 L311.8 280.7 L310.8 280.5 L310.5 280.4 L309.5 280.2 L309.2 280.1 L308.2 280.0 L307.9 279.9 L306.8 279.8 L306.6 279.7 L305.4 279.6 L305.2 279.6 L304.0 279.5 L303.8 279.5 L302.5 279.4 L302.3 279.4 L300.9 279.3 L300.7 279.3 L299.3 279.2 L299.2 279.2 L297.7 279.2 L297.6 279.2 L296.0 279.2 L295.9 279.2 L294.3 279.2 L294.2 279.2 L292.5 279.3 L292.4 279.3 L290.7 279.3 L290.6 279.3 L288.8 279.4 L288.7 279.4 L286.9 279.5 L286.8 279.5 L285.0 279.6 L284.9 279.6 L283.2 279.8 L283.1 279.8 L281.3 279.9 L281.3 279.9 L279.5 280.1 L279.5 280.1 L277.7 280.2 L277.7 280.2 L276.0 280.4 L275.9 280.4 L274.2 280.6 L274.2 280.6 L272.5 280.8 L272.4 280.8 L270.8 281.0 L270.8 281.0 L269.2 281.2 L269.1 281.2 L267.5 281.4 L267.4 281.5 L265.9 281.7 L265.8 281.7 L264.3 281.9 L264.2 282.0 L262.7 282.2 L262.6 282.2 L261.1 282.5 L261.0 282.5 L259.6 282.8 L258.2 283.0 L256.9 283.3 L255.6 283.5 L254.5 283.7 L253.9 283.8 L253.8 283.8 L253.4 283.9 L253.3 283.9 L252.8 283.9 L252.7 283.9 L252.3 283.8 L252.2 283.8 L251.7 283.6 L251.6 283.6 L251.2 283.4 L251.1 283.4 L250.7 283.1 L250.7 283.1 L250.3 282.8 L250.3 282.7 L249.9 282.4 L249.9 282.3 L249.6 281.9 L249.6 281.8 L249.4 281.4 L249.3 281.3 L249.2 280.9 L249.2 280.8 L249.1 280.3 L249.1 280.3 L249.1 280.2 L249.1 280.2 L249.1 280.2 L249.1 280.2 L249.0 279.5 L249.0 279.5 L249.0 279.5 L249.0 279.5 L248.9 278.8 L248.9 278.8 L248.9 278.8 L248.9 278.8 L248.9 278.1 L248.9 278.1 L248.9 278.0 L248.9 278.0 L248.8 277.3 L248.8 277.3 L248.8 277.3 L248.8 277.3 L248.7 276.6 L248.7 276.6 L248.7 276.6 L248.7 276.6 L248.7 275.8 L248.7 275.8 L248.7 275.8 L248.7 275.8 L248.7 275.0 L248.7 275.0 L248.7 275.0 L248.7 275.0 L248.6 274.2 L248.6 274.2 L248.6 274.2 L248.6 274.2 L248.6 273.4 L248.6 273.4 L248.6 273.4 L248.6 273.4 L248.6 272.6 L248.6 272.6 L248.6 272.6 L248.6 272.6 L248.6 271.8 L248.6 271.8 L248.6 271.7 L248.6 271.7 L248.6 270.9 L248.6 270.9 L248.6 270.9 L248.6 270.9 L248.6 270.1 L248.6 270.1 L248.6 270.0 L248.6 270.0 L248.6 269.2 L248.6 269.2 L248.6 269.1 L248.6 269.1 L248.6 268.1 L248.6 268.1 L248.6 268.0 L248.6 268.0 L248.6 266.8 L248.6 266.8 L248.7 265.3 L248.7 265.3 L248.7 263.6 L248.7 263.6 L248.8 261.8 L248.8 259.7 L248.9 257.5 L248.9 255.1 L249.0 252.5 L249.1 249.8 L249.1 246.8 L249.2 243.7 L249.3 240.3 L249.4 236.8 L249.5 233.2 L249.6 229.3 L249.7 225.4 L249.8 221.4 L249.9 217.5 L250.0 213.5 L250.1 209.5 L250.2 205.4 L250.3 201.4 L250.4 197.3 L250.5 193.1 L250.6 189.0 L250.6 184.8 L250.7 180.6 L250.8 176.4 L250.9 172.1 L251.0 167.8 L251.0 163.5 L251.1 159.3 L251.2 155.3 L251.2 151.4 L251.3 147.7 L251.4 144.1 L251.4 140.7 L251.5 137.4 L251.5 134.3 L251.6 131.3 L251.6 128.5 L251.6 125.8 L251.7 123.3 L251.7 120.9 L251.7 118.6 L251.7 116.6 L251.8 114.6 L251.8 112.8 L251.8 111.1 L251.8 109.5 L251.8 108.1 L251.8 106.7 L251.8 105.5 L251.9 104.4 L251.9 103.5 L251.9 102.6 L251.9 101.9 L251.9 101.3 L251.9 100.8 L251.9 100.4 L251.9 100.2 L251.8 99.0 L251.6 98.0 L251.3 97.1 L250.9 96.1 L250.3 95.3 L249.6 94.5 L248.9 93.8 L248.0 93.2 L247.1 92.7 L246.1 92.4 L245.1 92.2 L244.1 92.1 L243.0 92.2 L242.0 92.4 L241.1 92.7 L240.1 93.1 L239.3 93.7 L238.5 94.4 L237.8 95.1 L237.2 96.0 L236.7 96.9 L236.4 97.9 L236.2 98.9 L236.1 100.1Z M656.6 411.4 L656.6 411.4 L656.7 411.8 L656.8 411.9 L656.8 412.4 L656.8 412.5 L656.9 412.9 L656.9 413.0 L656.8 413.5 L656.8 413.5 L656.7 414.0 L656.7 414.1 L656.5 414.5 L656.5 414.6 L656.3 415.0 L656.2 415.0 L655.9 415.4 L655.9 415.5 L655.6 415.8 L655.5 415.9 L655.2 416.2 L655.1 416.2 L654.7 416.5 L654.6 416.5 L654.2 416.7 L654.2 416.7 L650.9 417.9 L641.7 421.2 L631.9 424.7 L621.6 428.5 L610.7 432.4 L599.3 436.5 L587.3 440.9 L575.9 445.0 L565.1 448.9 L554.9 452.6 L545.3 456.0 L536.3 459.3 L527.9 462.3 L520.1 465.1 L520.1 465.1 L512.9 467.6 L512.9 467.6 L506.3 470.0 L506.3 470.0 L500.3 472.1 L500.3 472.1 L494.8 474.0 L494.8 474.0 L494.8 474.0 L494.8 474.0 L490.0 475.6 L490.0 475.6 L490.0 475.6 L490.0 475.6 L485.8 477.1 L485.8 477.1 L485.8 477.1 L485.8 477.1 L482.2 478.3 L482.2 478.3 L482.2 478.3 L482.2 478.3 L479.3 479.3 L479.3 479.3 L479.2 479.3 L479.2 479.3 L476.9 480.1 L476.9 480.1 L476.9 480.1 L476.9 480.1 L474.6 480.8 L474.6 480.8 L474.6 480.8 L474.6 480.8 L472.4 481.4 L472.4 481.4 L472.4 481.4 L472.4 481.4 L470.3 482.0 L470.3 482.0 L470.2 482.0 L470.2 482.0 L468.2 482.6 L468.2 482.6 L468.2 482.6 L468.2 482.6 L466.2 483.1 L466.2 483.1 L466.2 483.1 L466.2 483.1 L464.3 483.5 L464.3 483.5 L464.3 483.5 L464.3 483.5 L462.5 483.9 L462.5 483.9 L462.4 483.9 L462.4 483.9 L460.8 484.3 L460.7 484.3 L460.7 484.3 L460.7 484.3 L459.1 484.6 L459.1 484.6 L459.0 484.6 L459.0 484.6 L457.5 484.8 L457.5 484.8 L457.4 484.8 L457.4 484.8 L456.0 485.0 L456.0 485.0 L455.9 485.0 L455.9 485.0 L454.5 485.2 L454.5 485.2 L454.4 485.2 L454.4 485.2 L453.2 485.3 L453.2 485.3 L453.1 485.3 L453.1 485.3 L452.0 485.3 L451.9 485.3 L451.8 485.3 L451.8 485.3 L450.8 485.4 L450.8 485.4 L450.7 485.4 L450.6 485.4 L449.6 485.3 L449.6 485.3 L449.5 485.3 L449.5 485.3 L448.3 485.3 L448.3 485.3 L448.3 485.3 L448.3 485.3 L447.1 485.2 L447.1 485.2 L447.0 485.2 L447.0 485.2 L445.9 485.2 L445.9 485.2 L445.8 485.2 L445.8 485.2 L444.7 485.1 L444.7 485.1 L444.7 485.1 L444.7 485.1 L443.6 485.0 L443.6 485.0 L443.5 485.0 L443.5 485.0 L442.4 484.8 L442.4 484.8 L442.4 484.8 L442.4 484.8 L441.3 484.7 L441.3 484.7 L441.2 484.7 L441.2 484.7 L440.2 484.5 L440.2 484.5 L440.2 484.5 L440.2 484.5 L439.2 484.4 L439.1 484.4 L439.1 484.4 L439.1 484.4 L438.1 484.2 L438.1 484.2 L438.0 484.2 L438.0 484.2 L437.1 484.0 L437.1 484.0 L437.0 484.0 L437.0 484.0 L436.1 483.8 L436.1 483.8 L436.0 483.8 L436.0 483.8 L435.1 483.6 L435.1 483.6 L435.0 483.5 L435.0 483.5 L434.2 483.3 L434.1 483.3 L434.1 483.3 L434.1 483.3 L433.2 483.1 L433.2 483.1 L433.2 483.0 L433.1 483.0 L432.2 482.8 L432.2 482.8 L432.2 482.8 L432.2 482.8 L431.3 482.5 L431.3 482.5 L431.2 482.5 L431.2 482.5 L430.3 482.2 L430.3 482.2 L430.3 482.2 L430.3 482.2 L429.4 481.9 L429.4 481.9 L429.4 481.9 L429.4 481.9 L428.5 481.6 L428.5 481.6 L428.5 481.6 L428.4 481.6 L427.6 481.3 L427.6 481.3 L427.6 481.3 L427.6 481.3 L426.8 481.0 L426.8 481.0 L426.7 481.0 L426.7 481.0 L425.9 480.7 L425.9 480.7 L425.9 480.7 L425.9 480.7 L425.1 480.4 L425.1 480.4 L425.1 480.4 L425.1 480.4 L424.4 480.1 L424.4 480.1 L424.3 480.1 L424.3 480.1 L423.6 479.8 L423.6 479.8 L423.6 479.8 L423.6 479.8 L422.9 479.5 L422.9 479.5 L422.9 479.5 L422.9 479.5 L422.2 479.2 L422.2 479.2 L422.2 479.2 L422.2 479.2 L421.6 478.9 L421.6 478.9 L421.5 478.9 L421.5 478.9 L421.0 478.6 L420.9 478.6 L420.9 478.6 L420.9 478.6 L420.4 478.3 L420.3 478.3 L420.3 478.3 L420.3 478.3 L419.8 478.0 L419.7 478.0 L419.7 478.0 L419.7 478.0 L419.1 477.7 L419.1 477.7 L419.1 477.7 L419.1 477.7 L418.5 477.4 L418.5 477.4 L418.5 477.4 L418.5 477.4 L417.9 477.1 L417.9 477.1 L417.9 477.1 L417.9 477.1 L417.3 476.7 L417.3 476.7 L417.3 476.7 L417.3 476.7 L416.7 476.4 L416.7 476.4 L416.7 476.4 L416.7 476.4 L416.1 476.0 L416.1 476.0 L416.1 476.0 L416.1 476.0 L415.5 475.7 L415.5 475.7 L415.5 475.6 L415.5 475.6 L414.9 475.3 L414.9 475.3 L414.9 475.3 L414.9 475.3 L414.3 474.9 L414.3 474.9 L414.3 474.9 L414.3 474.9 L413.7 474.5 L413.7 474.5 L413.6 474.5 L413.6 474.5 L413.1 474.1 L413.1 474.1 L413.0 474.1 L413.0 474.1 L412.5 473.7 L412.5 473.7 L412.4 473.7 L412.4 473.7 L411.8 473.3 L411.8 473.3 L411.8 473.2 L411.8 473.2 L411.2 472.8 L411.2 472.8 L411.2 472.8 L411.2 472.8 L410.6 472.4 L410.6 472.4 L410.6 472.4 L410.6 472.4 L410.1 472.0 L410.1 472.0 L410.0 471.9 L410.0 471.9 L409.6 471.6 L409.6 471.6 L409.5 471.6 L409.5 471.5 L409.1 471.2 L409.1 471.2 L409.0 471.1 L409.0 471.1 L408.5 470.6 L408.5 470.6 L408.4 470.6 L408.4 470.6 L407.8 470.0 L407.8 470.0 L407.8 470.0 L407.8 470.0 L407.2 469.4 L407.2 469.4 L407.1 469.3 L407.1 469.3 L406.5 468.7 L406.5 468.6 L406.4 468.6 L406.4 468.6 L405.7 467.9 L405.7 467.9 L405.7 467.8 L405.7 467.8 L404.9 467.0 L404.9 467.0 L404.9 467.0 L404.9 467.0 L404.1 466.1 L404.1 466.1 L404.1 466.1 L404.1 466.1 L403.3 465.1 L403.3 465.1 L403.3 465.1 L403.3 465.1 L402.4 464.1 L402.4 464.1 L402.4 464.1 L402.4 464.1 L401.5 463.0 L401.5 463.0 L401.5 463.0 L401.5 463.0 L400.6 461.9 L400.6 461.9 L400.6 461.9 L400.6 461.9 L399.7 460.7 L399.7 460.7 L399.7 460.7 L399.7 460.6 L398.7 459.4 L398.7 459.4 L398.7 459.4 L398.7 459.4 L397.7 458.1 L397.7 458.1 L396.7 456.7 L396.7 456.7 L395.6 455.3 L395.6 455.3 L394.6 453.9 L394.6 453.9 L393.5 452.5 L393.5 452.5 L392.5 451.1 L392.5 451.1 L391.4 449.7 L391.4 449.7 L390.4 448.2 L390.4 448.2 L389.3 446.8 L389.3 446.8 L388.2 445.4 L388.2 445.3 L387.2 443.9 L387.2 443.9 L386.1 442.4 L386.1 442.4 L385.0 441.0 L385.0 441.0 L383.9 439.5 L383.9 439.5 L382.8 438.0 L382.8 438.0 L381.7 436.5 L381.7 436.5 L380.7 435.0 L380.7 435.0 L380.7 435.0 L380.7 435.0 L379.6 433.5 L379.6 433.5 L379.6 433.4 L379.6 433.4 L378.5 431.9 L378.5 431.9 L378.5 431.9 L378.5 431.9 L377.4 430.4 L377.4 430.4 L377.4 430.4 L377.4 430.4 L376.3 428.9 L376.3 428.9 L376.3 428.9 L376.3 428.9 L375.2 427.3 L375.2 427.3 L375.2 427.3 L375.2 427.3 L374.1 425.8 L374.1 425.8 L374.1 425.8 L374.1 425.8 L373.0 424.2 L373.0 424.2 L373.0 424.2 L373.0 424.2 L371.9 422.6 L371.9 422.6 L371.9 422.6 L371.9 422.6 L370.8 421.1 L370.8 421.1 L370.8 421.0 L370.8 421.0 L369.7 419.5 L369.7 419.5 L369.7 419.5 L369.7 419.5 L368.7 417.9 L368.7 417.9 L368.6 417.9 L368.6 417.9 L367.6 416.3 L367.6 416.3 L367.6 416.3 L367.6 416.3 L366.5 414.6 L366.5 414.6 L366.5 414.6 L366.5 414.6 L365.4 413.0 L365.4 413.0 L365.4 413.0 L365.4 413.0 L364.3 411.4 L364.3 411.4 L364.3 411.4 L364.3 411.4 L363.2 409.7 L362.1 408.1 L361.0 406.5 L360.0 405.0 L359.0 403.5 L358.0 402.1 L357.0 400.7 L356.1 399.3 L355.2 398.0 L354.3 396.7 L353.5 395.4 L352.7 394.2 L351.9 393.1 L351.1 392.0 L350.3 390.9 L349.6 389.9 L348.9 388.9 L348.9 388.8 L348.2 387.9 L348.1 387.8 L347.4 386.9 L347.4 386.8 L346.7 385.9 L346.7 385.8 L346.0 385.0 L345.9 384.9 L345.2 384.0 L345.2 383.9 L344.5 383.1 L344.4 383.0 L343.8 382.2 L343.7 382.1 L343.0 381.3 L342.9 381.2 L342.3 380.4 L342.2 380.3 L341.5 379.6 L341.4 379.5 L340.8 378.7 L340.7 378.6 L340.0 377.9 L339.9 377.8 L339.3 377.1 L339.2 377.0 L338.5 376.3 L338.4 376.2 L337.7 375.5 L337.6 375.4 L337.0 374.8 L336.9 374.7 L336.2 374.0 L336.1 373.9 L335.3 373.2 L335.2 373.1 L334.4 372.3 L334.3 372.3 L333.5 371.5 L333.4 371.4 L332.5 370.7 L332.4 370.6 L331.5 369.8 L331.4 369.7 L330.5 368.9 L330.4 368.9 L329.4 368.0 L329.3 368.0 L328.3 367.1 L328.2 367.0 L327.1 366.1 L327.0 366.1 L325.9 365.2 L325.8 365.1 L324.7 364.2 L324.6 364.2 L323.4 363.2 L323.3 363.2 L322.0 362.2 L322.0 362.1 L320.7 361.1 L320.6 361.1 L319.3 360.1 L317.9 359.0 L316.5 358.0 L315.1 357.0 L313.8 355.9 L312.4 354.9 L311.0 353.8 L309.6 352.8 L308.2 351.8 L306.9 350.7 L305.5 349.7 L304.1 348.7 L302.7 347.6 L301.3 346.6 L300.0 345.6 L298.6 344.5 L297.2 343.5 L295.8 342.5 L294.5 341.5 L293.3 340.6 L292.0 339.7 L290.9 338.8 L289.7 337.9 L288.6 337.1 L287.5 336.3 L286.5 335.6 L285.5 334.9 L284.6 334.2 L283.7 333.5 L282.8 332.9 L282.0 332.3 L281.2 331.7 L280.5 331.2 L280.5 331.2 L280.4 331.1 L280.4 331.1 L279.8 330.7 L279.8 330.7 L279.8 330.7 L279.8 330.7 L279.2 330.2 L279.2 330.2 L279.1 330.2 L279.1 330.2 L278.5 329.7 L278.5 329.7 L278.5 329.7 L278.5 329.7 L277.9 329.2 L277.9 329.2 L277.8 329.1 L277.8 329.1 L277.2 328.6 L277.2 328.6 L277.2 328.6 L277.2 328.6 L276.6 328.1 L276.6 328.1 L276.6 328.1 L276.6 328.1 L276.0 327.6 L276.0 327.6 L275.9 327.5 L275.9 327.5 L275.4 327.0 L275.4 327.0 L275.3 327.0 L275.3 327.0 L274.8 326.5 L274.7 326.5 L274.7 326.4 L274.7 326.4 L274.1 325.9 L274.1 325.9 L274.1 325.9 L274.1 325.9 L273.5 325.3 L273.5 325.3 L273.5 325.3 L273.5 325.3 L272.9 324.8 L272.9 324.8 L272.9 324.7 L272.9 324.7 L272.4 324.2 L272.4 324.2 L272.3 324.1 L272.3 324.1 L271.8 323.6 L271.8 323.6 L271.7 323.5 L271.7 323.5 L271.2 323.0 L271.2 323.0 L271.2 322.9 L271.2 322.9 L270.6 322.3 L270.6 322.3 L270.6 322.3 L270.6 322.3 L270.1 321.7 L270.1 321.7 L270.0 321.7 L270.0 321.7 L269.5 321.1 L269.5 321.1 L269.5 321.0 L269.5 321.0 L268.9 320.4 L268.9 320.4 L268.9 320.4 L268.9 320.4 L268.4 319.8 L268.4 319.8 L268.4 319.7 L268.3 319.7 L267.8 319.1 L267.8 319.1 L267.8 319.1 L267.8 319.1 L267.3 318.4 L267.3 318.4 L267.3 318.4 L267.3 318.4 L266.7 317.7 L266.7 317.7 L266.7 317.7 L266.7 317.7 L266.2 317.0 L266.2 317.0 L266.2 317.0 L266.2 317.0 L265.7 316.3 L265.7 316.3 L265.7 316.3 L265.7 316.3 L265.2 315.6 L265.2 315.6 L265.1 315.6 L265.1 315.6 L264.6 314.9 L264.6 314.9 L264.6 314.9 L264.6 314.9 L264.1 314.2 L264.1 314.2 L264.1 314.1 L264.1 314.1 L263.6 313.4 L263.6 313.4 L263.6 313.4 L263.6 313.4 L263.1 312.7 L263.1 312.7 L263.1 312.6 L263.1 312.6 L262.6 311.9 L262.6 311.9 L262.6 311.9 L262.6 311.9 L262.1 311.1 L262.1 311.1 L261.6 310.3 L261.6 310.3 L261.1 309.5 L261.1 309.5 L260.6 308.7 L260.6 308.7 L260.1 307.9 L260.1 307.9 L259.6 307.1 L259.6 307.1 L259.1 306.4 L259.1 306.4 L258.7 305.7 L258.7 305.7 L258.7 305.6 L258.7 305.6 L258.2 304.9 L258.2 304.9 L258.2 304.9 L258.2 304.9 L258.1 304.8 L258.1 304.7 L257.9 304.3 L257.9 304.3 L257.7 303.8 L257.7 303.8 L257.6 303.3 L257.6 303.3 L257.5 302.8 L257.5 302.7 L257.6 302.3 L257.6 302.2 L257.6 301.8 L257.6 301.7 L257.8 301.2 L257.8 301.2 L258.0 300.8 L258.0 300.7 L258.3 300.3 L258.3 300.2 L258.6 299.9 L258.6 299.8 L259.0 299.5 L259.0 299.5 L259.4 299.2 L259.5 299.2 L259.8 298.9 L259.9 298.9 L260.3 298.7 L260.4 298.7 L260.8 298.6 L260.9 298.6 L261.1 298.6 L262.5 298.3 L263.9 298.0 L263.9 298.0 L263.9 298.0 L263.9 298.0 L265.3 297.8 L265.3 297.8 L265.3 297.8 L265.3 297.8 L266.7 297.5 L266.7 297.5 L266.8 297.5 L266.8 297.5 L268.2 297.3 L268.2 297.3 L268.2 297.3 L268.2 297.3 L269.7 297.1 L269.7 297.1 L269.7 297.1 L269.7 297.1 L271.2 296.9 L271.2 296.9 L271.3 296.9 L271.3 296.9 L272.8 296.7 L272.8 296.7 L272.8 296.7 L272.8 296.7 L274.3 296.5 L274.3 296.5 L274.4 296.5 L274.4 296.5 L275.9 296.3 L275.9 296.3 L276.0 296.3 L276.0 296.3 L277.6 296.1 L277.6 296.1 L277.6 296.1 L277.6 296.1 L279.2 296.0 L279.2 296.0 L279.2 296.0 L279.2 296.0 L280.9 295.8 L280.9 295.8 L280.9 295.8 L280.9 295.8 L282.6 295.7 L282.6 295.7 L282.6 295.7 L282.6 295.7 L284.3 295.5 L284.3 295.5 L284.3 295.5 L284.3 295.5 L286.0 295.4 L286.0 295.4 L286.1 295.4 L286.1 295.4 L287.8 295.3 L287.8 295.3 L287.8 295.3 L287.8 295.3 L289.6 295.2 L289.6 295.2 L289.6 295.2 L289.6 295.2 L291.3 295.1 L291.3 295.1 L291.3 295.1 L291.3 295.1 L292.9 295.0 L292.9 295.0 L292.9 295.0 L292.9 295.0 L294.5 295.0 L294.5 295.0 L294.5 295.0 L294.5 295.0 L296.0 295.0 L296.0 295.0 L296.0 295.0 L296.0 295.0 L297.4 295.0 L297.4 295.0 L297.5 295.0 L297.5 295.0 L298.8 295.0 L298.8 295.0 L298.9 295.0 L298.9 295.0 L300.1 295.1 L300.1 295.1 L300.2 295.1 L300.2 295.1 L301.4 295.1 L301.4 295.1 L301.4 295.1 L301.4 295.1 L302.5 295.2 L302.5 295.2 L302.6 295.2 L302.6 295.2 L303.6 295.3 L303.7 295.3 L303.7 295.3 L303.7 295.3 L304.7 295.4 L304.7 295.4 L304.8 295.4 L304.8 295.4 L305.6 295.6 L305.6 295.6 L305.7 295.6 L305.7 295.6 L306.5 295.7 L306.5 295.7 L306.6 295.7 L306.6 295.7 L307.3 295.9 L307.3 295.9 L307.5 295.9 L307.5 295.9 L308.1 296.0 L308.1 296.0 L308.2 296.1 L308.2 296.1 L308.9 296.2 L308.9 296.2 L308.9 296.3 L308.9 296.3 L309.7 296.5 L309.7 296.5 L309.7 296.5 L309.7 296.5 L310.5 296.7 L310.5 296.7 L310.6 296.7 L310.6 296.7 L311.3 296.9 L311.3 296.9 L311.3 297.0 L311.3 297.0 L312.1 297.2 L312.1 297.2 L312.1 297.2 L312.1 297.2 L312.8 297.4 L312.8 297.4 L312.8 297.5 L312.8 297.5 L313.5 297.7 L313.5 297.7 L313.6 297.7 L313.6 297.7 L314.2 297.9 L314.2 297.9 L314.3 298.0 L314.3 298.0 L314.9 298.2 L314.9 298.2 L314.9 298.2 L314.9 298.2 L315.5 298.4 L315.5 298.4 L315.6 298.5 L315.6 298.5 L316.1 298.7 L316.2 298.7 L316.2 298.7 L316.2 298.7 L316.7 299.0 L316.8 299.0 L316.8 299.0 L316.8 299.0 L317.3 299.2 L317.3 299.2 L317.4 299.3 L317.4 299.3 L317.9 299.5 L317.9 299.5 L317.9 299.5 L317.9 299.5 L318.4 299.8 L318.4 299.8 L318.5 299.8 L318.5 299.8 L318.9 300.0 L318.9 300.0 L319.0 300.1 L319.0 300.1 L319.5 300.3 L319.5 300.3 L320.2 300.7 L320.2 300.8 L321.1 301.2 L322.1 301.8 L323.2 302.4 L324.5 303.1 L325.8 303.9 L327.3 304.7 L329.0 305.6 L330.7 306.6 L332.6 307.6 L334.6 308.7 L336.7 309.9 L339.0 311.2 L341.3 312.5 L343.8 313.9 L346.4 315.4 L346.4 315.4 L346.4 315.4 L346.4 315.4 L349.1 316.9 L349.1 316.9 L349.2 316.9 L349.2 316.9 L352.0 318.6 L352.1 318.6 L352.1 318.6 L352.1 318.6 L355.1 320.4 L355.1 320.4 L355.1 320.4 L355.1 320.4 L358.3 322.3 L358.3 322.3 L358.4 322.3 L358.4 322.3 L361.7 324.4 L361.7 324.4 L361.8 324.4 L361.8 324.4 L365.3 326.5 L365.3 326.5 L365.3 326.5 L365.3 326.5 L369.0 328.8 L369.0 328.8 L369.0 328.8 L369.0 328.8 L372.9 331.2 L372.9 331.2 L372.9 331.2 L372.9 331.2 L376.9 333.8 L376.9 333.8 L377.0 333.8 L377.0 333.8 L381.1 336.4 L381.1 336.4 L381.2 336.4 L381.2 336.4 L385.5 339.2 L385.5 339.2 L385.5 339.2 L385.5 339.2 L390.0 342.1 L390.0 342.1 L390.1 342.1 L390.1 342.1 L394.7 345.1 L394.7 345.1 L394.7 345.1 L394.7 345.1 L399.6 348.2 L399.6 348.2 L399.6 348.2 L399.6 348.2 L404.6 351.4 L404.6 351.4 L404.6 351.4 L404.6 351.4 L409.8 354.8 L414.7 358.0 L419.4 361.0 L423.8 363.9 L428.0 366.6 L431.9 369.1 L435.5 371.5 L438.9 373.6 L442.1 375.7 L444.9 377.5 L447.6 379.2 L449.9 380.6 L449.9 380.7 L452.0 382.0 L452.1 382.0 L453.9 383.1 L453.9 383.2 L455.5 384.1 L455.6 384.2 L456.9 384.9 L457.0 385.0 L458.0 385.6 L458.1 385.7 L459.1 386.3 L459.2 386.3 L460.3 386.9 L460.4 386.9 L461.4 387.5 L461.5 387.6 L462.5 388.1 L462.6 388.1 L463.6 388.7 L463.7 388.7 L464.7 389.2 L464.8 389.3 L465.8 389.7 L465.9 389.8 L466.9 390.3 L467.0 390.3 L468.0 390.7 L468.1 390.8 L469.1 391.2 L469.2 391.3 L470.1 391.7 L470.3 391.7 L471.2 392.1 L471.3 392.2 L472.3 392.5 L472.4 392.6 L473.3 392.9 L473.5 393.0 L474.4 393.3 L474.5 393.3 L475.4 393.6 L475.7 393.7 L476.6 394.0 L476.9 394.1 L477.8 394.3 L478.1 394.4 L479.0 394.6 L479.3 394.7 L480.2 394.9 L480.5 394.9 L481.4 395.1 L481.7 395.1 L482.7 395.3 L482.9 395.3 L483.9 395.4 L484.2 395.4 L485.1 395.5 L485.4 395.6 L486.4 395.6 L486.7 395.6 L487.7 395.7 L487.9 395.7 L488.9 395.7 L489.2 395.7 L490.2 395.7 L490.5 395.7 L491.5 395.6 L491.8 395.6 L492.8 395.5 L493.0 395.5 L494.1 395.4 L494.3 395.4 L495.4 395.3 L495.6 395.3 L496.7 395.1 L496.8 395.1 L498.0 395.0 L498.1 394.9 L499.3 394.8 L499.4 394.7 L500.7 394.5 L500.8 394.5 L502.0 394.3 L502.1 394.3 L503.5 394.1 L503.5 394.0 L504.9 393.8 L505.0 393.8 L506.4 393.5 L506.5 393.5 L507.9 393.2 L508.0 393.2 L509.4 392.8 L509.5 392.8 L511.0 392.5 L511.1 392.5 L512.6 392.1 L512.7 392.1 L514.2 391.7 L514.3 391.7 L515.9 391.3 L515.9 391.3 L517.6 390.9 L517.6 390.9 L519.3 390.4 L521.2 389.9 L523.3 389.4 L525.5 388.8 L527.9 388.2 L530.5 387.5 L533.2 386.7 L536.1 385.9 L539.2 385.1 L542.5 384.2 L545.9 383.2 L549.6 382.2 L553.3 381.2 L557.3 380.1 L561.5 378.9 L565.8 377.7 L570.2 376.5 L570.2 376.5 L570.3 376.5 L570.3 376.5 L574.5 375.3 L574.5 375.3 L574.5 375.3 L574.5 375.3 L578.5 374.3 L578.5 374.3 L578.5 374.3 L578.5 374.3 L582.3 373.3 L582.4 373.3 L582.4 373.3 L582.4 373.3 L586.0 372.3 L586.0 372.3 L586.0 372.3 L586.0 372.3 L589.4 371.5 L589.4 371.5 L589.4 371.5 L589.4 371.5 L592.6 370.8 L592.6 370.8 L592.6 370.8 L592.6 370.8 L595.6 370.1 L595.6 370.1 L595.6 370.1 L595.6 370.1 L598.4 369.5 L598.4 369.5 L598.4 369.5 L598.4 369.5 L600.9 369.0 L601.0 369.0 L601.0 369.0 L601.0 369.0 L603.3 368.6 L603.3 368.6 L603.4 368.6 L603.4 368.6 L605.4 368.2 L605.4 368.2 L605.5 368.2 L605.5 368.2 L607.3 368.0 L607.3 368.0 L607.4 368.0 L607.4 368.0 L608.9 367.8 L608.9 367.8 L609.0 367.8 L609.1 367.8 L610.3 367.7 L610.3 367.7 L610.4 367.7 L610.4 367.7 L611.3 367.6 L611.3 367.6 L611.5 367.6 L611.6 367.6 L612.4 367.7 L612.4 367.7 L612.5 367.7 L612.5 367.7 L613.5 367.7 L613.5 367.7 L613.6 367.7 L613.6 367.7 L614.6 367.8 L614.6 367.8 L614.6 367.8 L614.7 367.8 L615.6 367.9 L615.6 367.9 L615.7 367.9 L615.7 367.9 L616.7 368.0 L616.7 368.0 L616.8 368.0 L616.8 368.0 L617.8 368.1 L617.8 368.1 L617.9 368.2 L617.9 368.2 L618.8 368.3 L618.8 368.3 L618.9 368.3 L618.9 368.3 L619.9 368.5 L619.9 368.5 L620.0 368.5 L620.0 368.5 L620.9 368.7 L620.9 368.7 L621.0 368.7 L621.0 368.7 L621.9 368.9 L622.0 368.9 L622.0 369.0 L622.0 369.0 L623.0 369.2 L623.0 369.2 L623.1 369.2 L623.1 369.2 L624.0 369.5 L624.0 369.5 L624.1 369.5 L624.1 369.5 L625.0 369.8 L625.0 369.8 L625.1 369.8 L625.1 369.8 L626.0 370.1 L626.0 370.1 L626.1 370.1 L626.1 370.2 L627.0 370.5 L627.0 370.5 L627.1 370.5 L627.1 370.5 L628.0 370.8 L628.0 370.9 L628.1 370.9 L628.1 370.9 L628.9 371.2 L628.9 371.2 L629.0 371.3 L629.0 371.3 L629.8 371.6 L629.8 371.6 L629.9 371.7 L630.0 371.7 L630.7 372.1 L630.7 372.1 L630.8 372.1 L630.8 372.1 L631.6 372.5 L631.6 372.5 L631.7 372.5 L631.7 372.5 L632.4 372.9 L632.4 372.9 L632.5 373.0 L632.5 373.0 L633.2 373.4 L633.2 373.4 L633.3 373.5 L633.3 373.5 L634.0 373.9 L634.0 373.9 L634.1 374.0 L634.1 374.0 L634.7 374.4 L634.7 374.4 L634.8 374.5 L634.8 374.5 L635.4 374.9 L635.4 375.0 L635.5 375.0 L635.5 375.0 L636.1 375.5 L636.1 375.5 L636.2 375.6 L636.2 375.6 L636.8 376.1 L636.8 376.1 L636.9 376.1 L636.9 376.2 L637.4 376.6 L637.4 376.7 L637.5 376.7 L637.5 376.7 L638.0 377.3 L638.1 377.3 L638.1 377.3 L638.1 377.4 L638.7 377.9 L638.7 377.9 L638.7 378.0 L638.7 378.0 L639.2 378.5 L639.2 378.5 L639.3 378.6 L639.3 378.6 L639.8 379.2 L639.8 379.2 L639.9 379.3 L639.9 379.3 L640.4 380.0 L640.4 380.0 L640.5 380.0 L640.5 380.0 L641.0 380.8 L641.0 380.8 L641.1 380.9 L641.1 380.9 L641.7 381.7 L641.7 381.7 L641.7 381.7 L641.7 381.7 L642.3 382.5 L642.3 382.5 L642.3 382.6 L642.3 382.6 L642.9 383.4 L642.9 383.4 L642.9 383.4 L642.9 383.4 L643.5 384.3 L643.5 384.3 L643.5 384.3 L643.5 384.3 L644.0 385.2 L644.0 385.2 L644.1 385.2 L644.1 385.2 L644.6 386.1 L644.6 386.1 L644.6 386.1 L644.6 386.1 L645.2 387.0 L645.2 387.0 L645.2 387.0 L645.2 387.0 L645.7 387.9 L645.7 387.9 L645.7 388.0 L645.8 388.0 L646.3 388.9 L646.3 388.9 L646.3 388.9 L646.3 388.9 L646.8 389.8 L646.8 389.8 L646.8 389.9 L646.8 389.9 L647.3 390.8 L647.3 390.8 L647.4 390.9 L647.4 390.9 L647.8 391.8 L647.8 391.8 L647.9 391.8 L647.9 391.9 L648.4 392.8 L648.4 392.8 L648.4 392.9 L648.4 392.9 L648.9 393.8 L648.9 393.8 L648.9 393.9 L648.9 393.9 L649.4 394.9 L649.4 394.9 L649.4 394.9 L649.4 394.9 L649.9 396.0 L649.9 396.0 L649.9 396.0 L649.9 396.0 L650.4 397.1 L650.4 397.1 L650.4 397.1 L650.4 397.1 L650.8 398.1 L650.8 398.1 L650.8 398.1 L650.8 398.1 L651.3 399.1 L651.3 399.1 L651.3 399.1 L651.3 399.1 L651.7 400.1 L651.8 400.1 L651.8 400.1 L651.8 400.1 L652.2 401.0 L652.2 401.0 L652.2 401.0 L652.2 401.0 L652.6 401.9 L652.6 401.9 L652.6 401.9 L652.6 401.9 L653.0 402.8 L653.0 402.8 L653.0 402.8 L653.0 402.8 L653.4 403.6 L653.4 403.6 L653.4 403.7 L653.4 403.7 L653.7 404.5 L653.7 404.5 L653.7 404.5 L653.7 404.5 L654.1 405.3 L654.1 405.3 L654.1 405.3 L654.1 405.3 L654.4 406.0 L654.4 406.0 L654.4 406.1 L654.4 406.1 L654.7 406.8 L654.7 406.8 L654.7 406.8 L654.7 406.8 L655.0 407.5 L655.0 407.5 L655.0 407.5 L655.0 407.5 L655.3 408.2 L655.3 408.2 L655.3 408.2 L655.3 408.2 L655.6 408.8 L655.6 408.8 L655.6 408.8 L655.6 408.8 L655.8 409.5 L655.8 409.5 L655.8 409.5 L655.8 409.5 L656.1 410.1 L656.1 410.1 L656.1 410.1 L656.1 410.1 L656.3 410.7 L656.3 410.7 L656.3 410.7 L656.3 410.7 L656.6 411.3 L656.6 411.3 L656.6 411.3 L656.6 411.3 L656.6 411.4Z" stroke="none" stroke-width="1" fill="#ffffff" />
<path d="M742.9 402.0 L743.9 401.5 L744.9 401.0 L745.7 400.3 L746.5 399.5 L747.2 398.6 L747.7 397.6 L748.1 396.6 L748.4 395.5 L748.5 394.4 L748.5 393.3 L748.3 392.2 L748.0 391.1 L747.5 390.1 L747.0 389.1 L746.3 388.3 L745.5 387.5 L744.6 386.8 L743.6 386.3 L742.6 385.9 L741.5 385.6 L740.4 385.5 L739.3 385.5 L738.2 385.7 L737.0 386.0 L736.9 386.1 L736.5 386.2 L736.0 386.4 L735.2 386.7 L734.3 387.0 L733.2 387.4 L731.9 387.9 L730.4 388.5 L728.7 389.1 L726.8 389.7 L724.7 390.5 L722.5 391.3 L720.0 392.2 L717.4 393.1 L714.6 394.2 L711.6 395.3 L708.0 396.5 L703.9 398.0 L699.2 399.7 L694.0 401.6 L688.2 403.7 L681.8 406.1 L676.5 408.0 L676.1 408.1 L675.6 408.2 L675.2 408.2 L674.7 408.1 L674.3 408.0 L673.9 407.9 L673.5 407.6 L673.1 407.4 L672.8 407.1 L672.5 406.7 L672.3 406.3 L672.1 405.9 L671.8 405.3 L671.8 405.3 L671.6 404.7 L671.6 404.7 L671.3 404.0 L671.3 404.0 L671.1 403.4 L671.0 403.3 L670.8 402.7 L670.8 402.6 L670.5 401.9 L670.5 401.9 L670.2 401.2 L670.1 401.1 L669.8 400.4 L669.8 400.4 L669.5 399.6 L669.5 399.6 L669.1 398.8 L669.1 398.7 L668.8 397.9 L668.7 397.9 L668.4 397.0 L668.4 397.0 L668.0 396.1 L668.0 396.1 L667.6 395.2 L667.5 395.2 L667.1 394.2 L666.7 393.3 L666.2 392.3 L665.7 391.2 L665.2 390.2 L664.7 389.1 L664.2 388.0 L663.7 386.8 L663.6 386.7 L663.1 385.6 L663.0 385.5 L662.5 384.4 L662.4 384.3 L661.9 383.2 L661.8 383.1 L661.2 382.1 L661.2 381.9 L660.6 380.9 L660.5 380.8 L660.0 379.8 L659.9 379.6 L659.3 378.6 L659.2 378.5 L658.6 377.5 L658.5 377.4 L657.9 376.4 L657.8 376.3 L657.2 375.3 L657.1 375.2 L656.5 374.3 L656.4 374.1 L655.8 373.2 L655.7 373.1 L655.0 372.1 L654.9 372.0 L654.3 371.1 L654.2 371.0 L653.5 370.1 L653.4 370.0 L652.7 369.1 L652.5 368.8 L651.8 368.0 L651.6 367.7 L650.9 366.9 L650.6 366.7 L649.9 365.9 L649.6 365.6 L648.9 364.9 L648.6 364.6 L647.8 363.9 L647.5 363.7 L646.7 363.0 L646.4 362.8 L645.6 362.1 L645.3 361.9 L644.4 361.2 L644.2 361.0 L643.2 360.4 L643.0 360.2 L642.0 359.6 L641.8 359.4 L640.8 358.9 L640.5 358.7 L639.5 358.1 L639.2 358.0 L638.2 357.5 L637.9 357.3 L636.9 356.8 L636.6 356.7 L635.5 356.2 L635.3 356.1 L634.2 355.7 L633.9 355.6 L632.8 355.1 L632.6 355.1 L631.5 354.7 L631.2 354.6 L630.1 354.2 L629.9 354.1 L628.7 353.8 L628.5 353.7 L627.4 353.4 L627.1 353.3 L626.0 353.0 L625.7 353.0 L624.6 352.7 L624.3 352.7 L623.2 352.4 L622.9 352.4 L621.7 352.2 L621.5 352.1 L620.3 351.9 L620.1 351.9 L618.9 351.7 L618.7 351.7 L617.5 351.6 L617.2 351.6 L616.0 351.4 L615.8 351.4 L614.6 351.3 L614.3 351.3 L613.1 351.3 L612.9 351.3 L611.7 351.2 L611.1 351.2 L609.7 351.3 L609.2 351.3 L607.6 351.4 L607.3 351.5 L605.4 351.7 L605.2 351.7 L603.1 352.0 L602.9 352.0 L600.7 352.4 L600.5 352.4 L598.0 352.9 L597.9 352.9 L595.2 353.4 L595.1 353.4 L592.2 354.0 L592.1 354.1 L589.0 354.8 L588.9 354.8 L585.6 355.5 L585.6 355.6 L582.1 356.4 L582.0 356.4 L578.3 357.4 L578.3 357.4 L574.4 358.4 L574.3 358.4 L570.2 359.5 L570.2 359.5 L565.9 360.7 L565.9 360.7 L561.4 361.9 L557.1 363.1 L552.9 364.3 L549.0 365.4 L545.2 366.4 L541.6 367.4 L538.2 368.4 L534.9 369.3 L531.8 370.1 L528.9 370.9 L528.9 370.9 L526.2 371.6 L526.2 371.6 L523.6 372.3 L523.6 372.3 L521.3 373.0 L521.3 373.0 L519.1 373.5 L519.1 373.5 L517.0 374.1 L517.0 374.1 L515.2 374.6 L515.2 374.6 L513.6 375.0 L513.5 375.0 L512.0 375.4 L511.9 375.4 L510.4 375.8 L510.4 375.8 L508.9 376.1 L508.8 376.1 L507.4 376.5 L507.4 376.5 L505.9 376.8 L505.9 376.8 L504.5 377.1 L504.5 377.1 L503.1 377.4 L503.1 377.4 L501.8 377.7 L501.8 377.7 L500.5 377.9 L500.5 377.9 L499.3 378.1 L499.2 378.2 L498.0 378.4 L498.0 378.4 L496.9 378.5 L496.8 378.5 L495.7 378.7 L495.7 378.7 L494.6 378.9 L494.6 378.9 L493.6 379.0 L493.5 379.0 L492.6 379.1 L492.6 379.1 L491.7 379.2 L491.6 379.2 L490.8 379.2 L490.7 379.2 L489.9 379.3 L489.9 379.3 L489.1 379.3 L489.0 379.3 L488.2 379.3 L488.1 379.3 L487.4 379.3 L487.3 379.2 L486.6 379.2 L486.5 379.2 L485.8 379.1 L485.7 379.1 L485.0 379.0 L484.9 379.0 L484.2 378.9 L484.1 378.9 L483.5 378.8 L483.4 378.8 L482.7 378.6 L482.6 378.6 L482.0 378.5 L481.9 378.4 L481.3 378.3 L481.2 378.2 L480.6 378.1 L480.5 378.0 L479.8 377.8 L479.8 377.8 L479.0 377.5 L478.9 377.5 L478.2 377.2 L478.1 377.2 L477.3 376.9 L477.3 376.9 L476.5 376.5 L476.4 376.5 L475.6 376.2 L475.6 376.2 L474.7 375.8 L474.7 375.8 L473.8 375.4 L473.8 375.4 L472.9 375.0 L472.9 375.0 L472.0 374.5 L472.0 374.5 L471.1 374.1 L471.1 374.1 L470.2 373.6 L470.1 373.6 L469.2 373.1 L469.2 373.1 L468.3 372.6 L468.2 372.6 L467.3 372.0 L467.3 372.0 L466.3 371.5 L466.3 371.5 L465.3 370.9 L465.3 370.9 L464.1 370.1 L464.1 370.1 L462.5 369.2 L462.5 369.2 L460.7 368.1 L460.7 368.1 L458.7 366.8 L458.7 366.8 L456.3 365.3 L456.3 365.3 L453.7 363.7 L453.7 363.7 L450.9 361.8 L450.9 361.8 L447.8 359.8 L447.8 359.8 L444.4 357.7 L444.4 357.7 L440.8 355.3 L440.8 355.3 L436.9 352.8 L432.7 350.1 L428.3 347.3 L423.7 344.3 L418.7 341.1 L413.5 337.7 L408.5 334.4 L403.6 331.3 L398.9 328.2 L394.3 325.3 L389.9 322.5 L389.9 322.5 L385.7 319.9 L385.6 319.9 L381.6 317.3 L381.6 317.3 L377.7 314.9 L377.6 314.9 L373.9 312.6 L373.8 312.5 L370.3 310.4 L370.2 310.3 L366.8 308.3 L366.8 308.2 L363.5 306.3 L363.5 306.3 L360.4 304.5 L360.3 304.4 L357.4 302.7 L357.3 302.7 L354.5 301.1 L354.5 301.1 L351.8 299.6 L349.3 298.2 L347.0 296.9 L344.7 295.6 L342.6 294.4 L340.6 293.3 L338.7 292.3 L337.0 291.3 L335.3 290.4 L333.8 289.5 L332.4 288.8 L331.2 288.1 L330.1 287.4 L329.1 286.9 L328.2 286.4 L327.4 286.0 L326.8 285.6 L326.6 285.5 L326.0 285.2 L325.8 285.1 L325.2 284.8 L325.0 284.7 L324.4 284.4 L324.2 284.3 L323.5 284.0 L323.4 284.0 L322.7 283.7 L322.5 283.6 L321.8 283.3 L321.7 283.2 L320.9 282.9 L320.8 282.9 L320.0 282.6 L319.9 282.5 L319.1 282.3 L319.0 282.2 L318.2 281.9 L318.0 281.9 L317.2 281.6 L317.1 281.6 L316.3 281.3 L316.1 281.3 L315.3 281.0 L315.2 281.0 L314.3 280.7 L314.2 280.7 L313.3 280.4 L313.1 280.4 L312.3 280.2 L311.9 280.1 L311.0 279.9 L310.6 279.8 L309.6 279.6 L309.3 279.6 L308.3 279.4 L308.0 279.3 L306.9 279.2 L306.7 279.1 L305.5 279.0 L305.2 279.0 L304.0 278.9 L303.8 278.9 L302.5 278.8 L302.3 278.8 L300.9 278.7 L300.8 278.7 L299.4 278.6 L299.2 278.6 L297.7 278.6 L297.6 278.6 L296.0 278.6 L295.9 278.6 L294.3 278.6 L294.2 278.6 L292.5 278.7 L292.4 278.7 L290.7 278.7 L290.6 278.7 L288.8 278.8 L288.7 278.8 L286.8 278.9 L286.8 278.9 L285.0 279.0 L284.9 279.0 L283.1 279.2 L283.0 279.2 L281.3 279.3 L281.2 279.3 L279.5 279.5 L279.4 279.5 L277.7 279.6 L277.6 279.6 L275.9 279.8 L275.8 279.8 L274.2 280.0 L274.1 280.0 L272.5 280.2 L272.4 280.2 L270.8 280.4 L270.7 280.4 L269.1 280.6 L269.0 280.6 L267.4 280.8 L267.3 280.9 L265.8 281.1 L265.7 281.1 L264.2 281.3 L264.1 281.4 L262.6 281.6 L262.5 281.6 L261.0 281.9 L260.9 281.9 L259.5 282.2 L258.1 282.4 L256.8 282.7 L255.5 282.9 L254.4 283.1 L253.8 283.2 L253.3 283.3 L252.8 283.3 L252.4 283.2 L251.9 283.1 L251.5 282.9 L251.1 282.6 L250.7 282.3 L250.4 282.0 L250.1 281.6 L249.9 281.1 L249.7 280.7 L249.7 280.2 L249.7 280.2 L249.7 280.1 L249.6 279.5 L249.6 279.4 L249.5 278.8 L249.5 278.7 L249.5 278.0 L249.4 278.0 L249.4 277.3 L249.4 277.3 L249.3 276.6 L249.3 276.5 L249.3 275.8 L249.3 275.8 L249.3 275.0 L249.3 275.0 L249.2 274.2 L249.2 274.2 L249.2 273.4 L249.2 273.4 L249.2 272.6 L249.2 272.6 L249.2 271.8 L249.2 271.7 L249.2 270.9 L249.2 270.9 L249.2 270.1 L249.2 270.0 L249.2 269.2 L249.2 269.2 L249.2 268.1 L249.2 268.1 L249.2 266.8 L249.2 266.8 L249.3 265.3 L249.3 265.3 L249.3 263.6 L249.3 263.6 L249.4 261.8 L249.4 259.8 L249.5 257.5 L249.5 255.1 L249.6 252.5 L249.7 249.8 L249.7 246.8 L249.8 243.7 L249.9 240.4 L250.0 236.9 L250.1 233.2 L250.2 229.3 L250.3 225.4 L250.4 221.5 L250.5 217.5 L250.6 213.5 L250.7 209.5 L250.8 205.4 L250.8 203.3 M252.5 100.0 L252.4 99.0 L252.2 97.9 L251.9 96.8 L251.4 95.8 L250.8 94.9 L250.1 94.1 L249.2 93.3 L248.3 92.7 L247.3 92.2 L246.3 91.8 L245.2 91.6 L244.1 91.5 L243.0 91.6 L241.9 91.8 L240.8 92.1 L239.8 92.6 L238.9 93.2 L238.1 93.9 L237.3 94.8 L236.7 95.7 L236.2 96.7 L235.8 97.7 L235.6 98.8 L235.5 99.9 M656.0 411.6 L656.2 412.0 L656.2 412.5 L656.3 412.9 L656.2 413.4 L656.1 413.9 L655.9 414.3 L655.7 414.7 L655.5 415.1 L655.1 415.4 L654.8 415.7 L654.4 415.9 L654.0 416.1 L650.7 417.3 L641.5 420.6 L631.7 424.2 L621.4 427.9 L610.5 431.8 L599.1 436.0 L587.1 440.3 L575.7 444.4 L564.9 448.3 L554.7 452.0 L545.1 455.5 L536.1 458.7 L527.7 461.7 L519.9 464.5 L519.9 464.5 L512.7 467.1 L512.7 467.1 L506.1 469.4 L506.1 469.4 L500.1 471.5 L500.1 471.5 L494.7 473.4 L494.6 473.4 L489.8 475.1 L489.8 475.1 L485.6 476.5 L485.6 476.5 L482.1 477.7 L482.0 477.7 L479.1 478.7 L479.1 478.7 L476.7 479.5 L476.7 479.5 L474.5 480.2 L474.4 480.2 L472.3 480.8 L472.2 480.9 L470.1 481.4 L470.1 481.5 L468.1 482.0 L468.0 482.0 L466.1 482.5 L466.0 482.5 L464.2 482.9 L464.1 483.0 L462.4 483.3 L462.3 483.4 L460.6 483.7 L460.6 483.7 L459.0 484.0 L458.9 484.0 L457.4 484.2 L457.3 484.2 L455.9 484.4 L455.8 484.4 L454.5 484.6 L454.4 484.6 L453.2 484.7 L453.1 484.7 L451.9 484.7 L451.8 484.7 L450.8 484.8 L450.7 484.8 L449.6 484.7 L449.5 484.7 L448.3 484.7 L448.3 484.7 L447.1 484.6 L447.1 484.6 L445.9 484.6 L445.9 484.6 L444.8 484.5 L444.7 484.5 L443.6 484.4 L443.6 484.4 L442.5 484.2 L442.4 484.2 L441.4 484.1 L441.3 484.1 L440.3 483.9 L440.2 483.9 L439.2 483.8 L439.2 483.8 L438.2 483.6 L438.1 483.6 L437.2 483.4 L437.1 483.4 L436.2 483.2 L436.1 483.2 L435.2 483.0 L435.2 483.0 L434.3 482.7 L434.2 482.7 L433.4 482.5 L433.3 482.5 L432.4 482.2 L432.4 482.2 L431.4 481.9 L431.4 481.9 L430.5 481.6 L430.5 481.6 L429.6 481.3 L429.5 481.3 L428.7 481.0 L428.6 481.0 L427.8 480.7 L427.8 480.7 L427.0 480.4 L426.9 480.4 L426.1 480.1 L426.1 480.1 L425.4 479.8 L425.3 479.8 L424.6 479.5 L424.6 479.5 L423.9 479.2 L423.8 479.2 L423.2 479.0 L423.1 478.9 L422.5 478.7 L422.4 478.6 L421.8 478.4 L421.8 478.4 L421.2 478.1 L421.2 478.1 L420.6 477.8 L420.6 477.8 L420.0 477.5 L420.0 477.5 L419.4 477.2 L419.4 477.2 L418.8 476.9 L418.8 476.9 L418.2 476.6 L418.2 476.5 L417.6 476.2 L417.6 476.2 L417.0 475.9 L417.0 475.9 L416.4 475.5 L416.4 475.5 L415.8 475.2 L415.8 475.1 L415.2 474.8 L415.2 474.8 L414.6 474.4 L414.6 474.4 L414.0 474.0 L414.0 474.0 L413.4 473.6 L413.4 473.6 L412.8 473.2 L412.8 473.2 L412.2 472.8 L412.2 472.8 L411.6 472.3 L411.6 472.3 L411.0 471.9 L410.9 471.9 L410.5 471.5 L410.4 471.5 L410.0 471.2 L409.9 471.1 L409.5 470.7 L409.4 470.6 L408.9 470.2 L408.8 470.1 L408.3 469.6 L408.2 469.5 L407.6 468.9 L407.5 468.9 L406.9 468.2 L406.8 468.2 L406.2 467.5 L406.1 467.4 L405.4 466.6 L405.3 466.6 L404.6 465.7 L404.6 465.7 L403.8 464.8 L403.7 464.7 L402.9 463.7 L402.9 463.7 L402.0 462.7 L402.0 462.6 L401.1 461.5 L401.1 461.5 L400.2 460.3 L400.1 460.3 L399.2 459.0 L399.2 459.0 L398.2 457.7 L398.2 457.7 L397.1 456.3 L397.1 456.3 L396.1 454.9 L396.1 454.9 L395.1 453.5 L395.1 453.5 L394.0 452.1 L394.0 452.1 L393.0 450.7 L393.0 450.7 L391.9 449.3 L391.9 449.3 L390.8 447.9 L390.8 447.9 L389.8 446.4 L389.8 446.4 L388.7 445.0 L388.7 445.0 L387.6 443.5 L387.6 443.5 L386.6 442.1 L386.6 442.1 L385.5 440.6 L385.5 440.6 L384.4 439.1 L384.4 439.1 L383.3 437.6 L383.3 437.6 L382.2 436.1 L382.2 436.1 L381.1 434.6 L381.1 434.6 L380.1 433.1 L380.0 433.1 L379.0 431.6 L379.0 431.6 L377.9 430.1 L377.9 430.1 L376.8 428.5 L376.8 428.5 L375.7 427.0 L375.7 427.0 L374.6 425.4 L374.6 425.4 L373.5 423.9 L373.5 423.9 L372.4 422.3 L372.4 422.3 L371.3 420.7 L371.3 420.7 L370.2 419.1 L370.2 419.1 L369.1 417.5 L369.1 417.5 L368.1 415.9 L368.0 415.9 L367.0 414.3 L367.0 414.3 L365.9 412.7 L365.9 412.7 L364.8 411.1 L364.8 411.0 L363.7 409.4 L362.6 407.8 L361.5 406.2 L360.5 404.7 L359.5 403.2 L358.5 401.7 L357.5 400.3 L356.6 398.9 L355.7 397.6 L354.8 396.3 L354.0 395.1 L353.1 393.9 L352.3 392.8 L351.6 391.6 L350.8 390.6 L350.1 389.5 L349.4 388.6 L349.3 388.5 L348.7 387.5 L348.6 387.5 L347.9 386.5 L347.9 386.5 L347.2 385.6 L347.1 385.5 L346.5 384.6 L346.4 384.5 L345.7 383.7 L345.6 383.6 L345.0 382.7 L344.9 382.6 L344.2 381.8 L344.2 381.7 L343.5 380.9 L343.4 380.8 L342.7 380.0 L342.7 379.9 L342.0 379.2 L341.9 379.1 L341.2 378.3 L341.1 378.2 L340.5 377.5 L340.4 377.4 L339.7 376.7 L339.6 376.6 L338.9 375.9 L338.8 375.8 L338.2 375.1 L338.1 375.0 L337.4 374.3 L337.3 374.2 L336.6 373.5 L336.5 373.4 L335.7 372.7 L335.6 372.6 L334.8 371.9 L334.7 371.8 L333.9 371.1 L333.8 371.0 L332.9 370.2 L332.8 370.1 L331.9 369.3 L331.8 369.3 L330.9 368.5 L330.8 368.4 L329.8 367.5 L329.7 367.5 L328.6 366.6 L328.6 366.6 L327.5 365.7 L327.4 365.6 L326.3 364.7 L326.2 364.7 L325.0 363.7 L325.0 363.7 L323.7 362.7 L323.7 362.7 L322.4 361.7 L322.4 361.7 L321.0 360.7 L321.0 360.6 L319.6 359.6 L318.3 358.6 L316.9 357.5 L315.5 356.5 L314.1 355.4 L312.7 354.4 L311.4 353.4 L310.0 352.3 L308.6 351.3 L307.2 350.3 L305.8 349.2 L304.5 348.2 L303.1 347.2 L301.7 346.1 L300.3 345.1 L298.9 344.1 L297.5 343.0 L296.2 342.0 L294.9 341.0 L293.6 340.1 L292.4 339.2 L291.2 338.3 L290.1 337.5 L289.0 336.6 L287.9 335.9 L286.9 335.1 L285.9 334.4 L284.9 333.7 L284.0 333.0 L283.1 332.4 L282.3 331.8 L281.5 331.2 L280.8 330.7 L280.8 330.7 L280.2 330.2 L280.1 330.2 L279.5 329.7 L279.5 329.7 L278.9 329.2 L278.8 329.2 L278.2 328.7 L278.2 328.7 L277.6 328.2 L277.6 328.2 L277.0 327.7 L277.0 327.6 L276.4 327.1 L276.3 327.1 L275.8 326.6 L275.7 326.6 L275.2 326.0 L275.1 326.0 L274.6 325.5 L274.5 325.4 L274.0 324.9 L273.9 324.9 L273.4 324.3 L273.3 324.3 L272.8 323.7 L272.8 323.7 L272.2 323.1 L272.2 323.1 L271.6 322.5 L271.6 322.5 L271.1 321.9 L271.0 321.9 L270.5 321.3 L270.5 321.3 L269.9 320.7 L269.9 320.6 L269.4 320.0 L269.4 320.0 L268.8 319.4 L268.8 319.4 L268.3 318.7 L268.3 318.7 L267.8 318.1 L267.7 318.0 L267.2 317.4 L267.2 317.3 L266.7 316.7 L266.7 316.7 L266.2 316.0 L266.1 316.0 L265.6 315.3 L265.6 315.2 L265.1 314.6 L265.1 314.5 L264.6 313.8 L264.6 313.8 L264.1 313.1 L264.1 313.1 L263.6 312.3 L263.6 312.3 L263.1 311.6 L263.1 311.6 L262.6 310.8 L262.6 310.8 L262.1 310.0 L262.1 309.9 L261.6 309.1 L261.6 309.1 L261.1 308.4 L261.1 308.4 L260.6 307.6 L260.6 307.6 L260.1 306.8 L260.1 306.8 L259.6 306.1 L259.6 306.1 L259.2 305.3 L259.2 305.3 L258.8 304.6 L258.7 304.6 L258.7 304.5 L258.4 304.1 L258.3 303.6 L258.2 303.2 L258.1 302.7 L258.2 302.3 L258.2 301.9 L258.4 301.4 L258.5 301.0 L258.8 300.6 L259.1 300.3 L259.4 300.0 L259.7 299.7 L260.1 299.5 L260.6 299.3 L261.0 299.2 L261.2 299.2 L262.6 298.9 L264.0 298.6 L264.0 298.6 L265.4 298.4 L265.4 298.4 L266.8 298.1 L266.9 298.1 L268.3 297.9 L268.3 297.9 L269.8 297.7 L269.8 297.7 L271.3 297.5 L271.3 297.5 L272.8 297.3 L272.9 297.3 L274.4 297.1 L274.4 297.1 L276.0 296.9 L276.0 296.9 L277.6 296.7 L277.6 296.7 L279.3 296.6 L279.3 296.6 L280.9 296.4 L280.9 296.4 L282.6 296.3 L282.6 296.3 L284.3 296.1 L284.4 296.1 L286.1 296.0 L286.1 296.0 L287.8 295.9 L287.9 295.9 L289.6 295.8 L289.6 295.8 L291.3 295.7 L291.3 295.7 L292.9 295.6 L293.0 295.6 L294.5 295.6 L294.5 295.6 L296.0 295.6 L296.0 295.6 L297.4 295.6 L297.5 295.6 L298.8 295.6 L298.9 295.6 L300.1 295.7 L300.2 295.7 L301.3 295.7 L301.4 295.7 L302.5 295.8 L302.6 295.8 L303.6 295.9 L303.7 295.9 L304.6 296.0 L304.7 296.0 L305.6 296.2 L305.6 296.2 L306.4 296.3 L306.5 296.3 L307.2 296.5 L307.3 296.5 L307.9 296.6 L308.0 296.6 L308.7 296.8 L308.8 296.8 L309.5 297.1 L309.6 297.1 L310.3 297.3 L310.4 297.3 L311.1 297.5 L311.2 297.5 L311.9 297.8 L311.9 297.8 L312.6 298.0 L312.6 298.0 L313.3 298.2 L313.4 298.3 L314.0 298.5 L314.0 298.5 L314.7 298.7 L314.7 298.8 L315.3 299.0 L315.4 299.0 L315.9 299.3 L316.0 299.3 L316.5 299.5 L316.6 299.5 L317.1 299.8 L317.1 299.8 L317.6 300.0 L317.7 300.1 L318.1 300.3 L318.2 300.3 L318.6 300.6 L318.7 300.6 L319.2 300.9 L319.2 300.9 L319.9 301.3 L320.0 301.3 L320.8 301.8 L321.8 302.3 L322.9 302.9 L324.2 303.6 L325.6 304.4 L327.0 305.2 L328.7 306.1 L330.4 307.1 L332.3 308.1 L334.3 309.3 L336.4 310.5 L338.7 311.7 L341.0 313.0 L343.5 314.4 L346.1 315.9 L346.1 315.9 L348.9 317.4 L348.9 317.4 L351.7 319.1 L351.8 319.1 L354.8 320.9 L354.8 320.9 L358.0 322.8 L358.1 322.8 L361.4 324.9 L361.4 324.9 L365.0 327.0 L365.0 327.1 L368.7 329.3 L368.7 329.3 L372.6 331.7 L372.6 331.7 L376.6 334.3 L376.6 334.3 L380.8 336.9 L380.8 336.9 L385.2 339.7 L385.2 339.7 L389.7 342.6 L389.7 342.6 L394.4 345.6 L394.4 345.6 L399.3 348.7 L399.3 348.7 L404.3 351.9 L404.3 351.9 L409.5 355.3 L414.4 358.5 L419.1 361.6 L423.5 364.4 L427.6 367.1 L431.6 369.6 L435.2 372.0 L438.6 374.2 L441.7 376.2 L444.6 378.0 L447.2 379.7 L449.6 381.2 L449.6 381.2 L451.7 382.5 L451.8 382.5 L453.6 383.6 L453.6 383.7 L455.2 384.6 L455.3 384.7 L456.6 385.5 L456.7 385.5 L457.7 386.1 L457.8 386.2 L458.8 386.8 L458.9 386.8 L460.0 387.4 L460.1 387.5 L461.1 388.0 L461.2 388.1 L462.2 388.6 L462.3 388.7 L463.3 389.2 L463.4 389.3 L464.4 389.8 L464.5 389.8 L465.5 390.3 L465.7 390.3 L466.6 390.8 L466.8 390.9 L467.7 391.3 L467.9 391.4 L468.8 391.8 L468.9 391.8 L469.9 392.2 L470.0 392.3 L471.0 392.7 L471.1 392.7 L472.1 393.1 L472.2 393.1 L473.1 393.5 L473.3 393.5 L474.2 393.9 L474.4 393.9 L475.3 394.2 L475.5 394.3 L476.4 394.6 L476.7 394.7 L477.7 394.9 L477.9 395.0 L478.9 395.2 L479.2 395.3 L480.1 395.5 L480.4 395.5 L481.3 395.7 L481.6 395.7 L482.6 395.9 L482.9 395.9 L483.8 396.0 L484.1 396.0 L485.1 396.1 L485.4 396.2 L486.4 396.2 L486.6 396.2 L487.7 396.3 L487.9 396.3 L488.9 396.3 L489.2 396.3 L490.2 396.3 L490.5 396.3 L491.5 396.2 L491.8 396.2 L492.8 396.1 L493.1 396.1 L494.2 396.0 L494.4 396.0 L495.5 395.9 L495.6 395.9 L496.8 395.7 L496.9 395.7 L498.1 395.6 L498.2 395.5 L499.4 395.4 L499.5 395.3 L500.8 395.1 L500.9 395.1 L502.1 394.9 L502.2 394.9 L503.6 394.6 L503.7 394.6 L505.0 394.4 L505.1 394.3 L506.5 394.1 L506.6 394.1 L508.0 393.8 L508.1 393.7 L509.5 393.4 L509.6 393.4 L511.1 393.1 L511.2 393.1 L512.7 392.7 L512.8 392.7 L514.4 392.3 L514.4 392.3 L516.0 391.9 L516.1 391.9 L517.7 391.5 L517.8 391.4 L519.5 391.0 L521.4 390.5 L523.4 390.0 L525.6 389.4 L528.0 388.7 L530.6 388.0 L533.4 387.3 L536.3 386.5 L539.4 385.7 L542.7 384.8 L546.1 383.8 L549.7 382.8 L553.5 381.8 L557.5 380.7 L561.6 379.5 L565.9 378.3 L570.4 377.1 L570.4 377.1 L574.6 375.9 L574.7 375.9 L578.7 374.8 L578.7 374.8 L582.5 373.8 L582.5 373.8 L586.1 372.9 L586.1 372.9 L589.5 372.1 L589.6 372.1 L592.7 371.3 L592.8 371.3 L595.7 370.7 L595.8 370.7 L598.5 370.1 L598.6 370.1 L601.1 369.6 L601.1 369.6 L603.4 369.2 L603.5 369.2 L605.5 368.8 L605.6 368.8 L607.4 368.6 L607.5 368.6 L609.0 368.4 L609.1 368.4 L610.3 368.3 L610.5 368.3 L611.3 368.2 L611.5 368.2 L612.4 368.3 L612.4 368.3 L613.4 368.3 L613.5 368.3 L614.5 368.4 L614.6 368.4 L615.6 368.5 L615.7 368.5 L616.6 368.6 L616.7 368.6 L617.7 368.7 L617.8 368.7 L618.7 368.9 L618.8 368.9 L619.8 369.1 L619.9 369.1 L620.8 369.3 L620.9 369.3 L621.8 369.5 L621.9 369.5 L622.8 369.8 L622.9 369.8 L623.8 370.1 L623.9 370.1 L624.8 370.4 L624.9 370.4 L625.8 370.7 L625.9 370.7 L626.8 371.0 L626.9 371.1 L627.8 371.4 L627.8 371.4 L628.7 371.8 L628.8 371.8 L629.6 372.2 L629.7 372.2 L630.5 372.6 L630.6 372.6 L631.3 373.0 L631.4 373.1 L632.1 373.5 L632.2 373.5 L632.9 373.9 L633.0 374.0 L633.6 374.4 L633.7 374.5 L634.4 374.9 L634.4 375.0 L635.1 375.4 L635.1 375.5 L635.7 376.0 L635.8 376.0 L636.4 376.5 L636.5 376.6 L637.0 377.1 L637.1 377.2 L637.6 377.7 L637.7 377.8 L638.2 378.3 L638.3 378.4 L638.8 378.9 L638.9 379.0 L639.3 379.6 L639.4 379.7 L639.9 380.4 L640.0 380.4 L640.6 381.2 L640.6 381.2 L641.2 382.0 L641.2 382.1 L641.8 382.9 L641.8 382.9 L642.4 383.7 L642.4 383.8 L643.0 384.6 L643.0 384.6 L643.5 385.5 L643.6 385.5 L644.1 386.4 L644.1 386.4 L644.7 387.3 L644.7 387.3 L645.2 388.2 L645.2 388.3 L645.7 389.2 L645.8 389.2 L646.3 390.1 L646.3 390.2 L646.8 391.1 L646.8 391.1 L647.3 392.1 L647.3 392.1 L647.8 393.1 L647.8 393.1 L648.3 394.1 L648.3 394.1 L648.8 395.2 L648.8 395.2 L649.3 396.3 L649.3 396.3 L649.8 397.3 L649.8 397.3 L650.3 398.3 L650.3 398.3 L650.8 399.3 L650.8 399.3 L651.2 400.3 L651.2 400.3 L651.6 401.2 L651.6 401.3 L652.0 402.2 L652.0 402.2 L652.4 403.0 L652.4 403.0 L652.8 403.9 L652.8 403.9 L653.2 404.7 L653.2 404.7 L653.5 405.5 L653.5 405.5 L653.9 406.3 L653.9 406.3 L654.2 407.0 L654.2 407.0 L654.5 407.7 L654.5 407.7 L654.7 408.4 L654.8 408.4 L655.0 409.0 L655.0 409.1 L655.3 409.7 L655.3 409.7 L655.5 410.3 L655.5 410.3 L655.8 410.9 L655.8 410.9 L656.0 411.5 L656.0 411.5 L656.0 411.6" stroke="#2b82ff" stroke-width="1.05" fill="none" />
<path d="M239.6 100.1 L239.6 100.3 L239.6 100.7 L239.6 101.2 L239.6 101.8 L239.6 102.5 L239.6 103.3 L239.6 104.3 L239.5 105.4 L239.5 106.6 L239.5 107.9 L239.5 109.4 L239.5 111.0 L239.5 112.7 L239.5 114.5 L239.4 116.4 L239.4 118.5 L239.4 120.7 L239.4 123.1 L239.3 125.6 L239.3 128.3 L239.3 131.1 L239.2 134.1 L239.2 137.2 L239.1 140.5 L239.1 143.9 L239.0 147.5 L238.9 151.2 L238.9 155.1 L238.8 159.1 L238.7 163.3 L238.7 167.6 L238.6 171.9 L238.5 176.1 L238.4 180.3 L238.3 184.5 L238.3 188.7 L238.2 192.9 L238.1 197.0 L238.0 201.1 L237.9 205.1 L237.8 209.2 L237.7 213.2 L237.6 217.2 L237.5 221.1 L237.4 225.0 L237.3 228.9 L237.2 232.8 L237.1 236.5 L237.0 240.0 L236.9 243.3 L236.8 246.5 L236.8 249.4 L236.7 252.2 L236.6 254.8 L236.6 257.2 L236.5 259.4 L236.5 261.5 L236.4 263.3 L236.4 265.0 L236.3 266.5 L236.3 267.8 L236.3 269.0 L236.3 269.9 L236.3 270.0 L236.3 270.9 L236.3 270.9 L236.3 271.8 L236.3 271.9 L236.3 272.8 L236.3 272.8 L236.3 273.7 L236.3 273.7 L236.3 274.6 L236.3 274.6 L236.4 275.5 L236.4 275.6 L236.4 276.4 L236.4 276.5 L236.5 277.3 L236.5 277.3 L236.5 278.2 L236.5 278.2 L236.6 279.0 L236.6 279.1 L236.7 279.9 L236.7 279.9 L236.7 280.7 L236.7 280.8 L236.8 281.5 L236.8 281.6 L236.9 282.4 L236.9 282.4 L237.0 283.2 L237.0 283.3 L237.1 284.0 L237.2 284.0 L237.3 284.8 L237.3 284.8 L237.4 285.5 L237.4 285.6 L237.5 286.3 L237.5 286.4 L237.7 287.1 L237.7 287.1 L237.8 287.8 L237.8 287.9 L237.9 288.6 L238.0 288.6 L238.1 289.3 L238.1 289.4 L238.3 290.0 L238.3 290.1 L238.4 290.8 L238.5 290.8 L238.6 291.5 L238.6 291.5 L238.8 292.2 L238.8 292.3 L239.0 292.9 L239.0 293.0 L239.2 293.6 L239.2 293.7 L239.4 294.3 L239.4 294.4 L239.6 295.0 L239.6 295.0 L239.8 295.6 L239.8 295.7 L240.0 296.3 L240.1 296.4 L240.3 297.0 L240.3 297.1 L240.5 297.7 L240.6 297.8 L240.8 298.4 L240.8 298.5 L241.1 299.1 L241.1 299.2 L241.4 299.8 L241.4 299.8 L241.7 300.4 L241.7 300.5 L242.0 301.1 L242.0 301.2 L242.3 301.8 L242.3 301.9 L242.6 302.5 L242.7 302.6 L243.0 303.2 L243.0 303.2 L243.3 303.8 L243.4 303.9 L243.7 304.5 L243.7 304.6 L244.1 305.2 L244.1 305.3 L244.4 305.9 L244.5 305.9 L244.8 306.5 L245.2 307.2 L245.6 307.9 L246.0 308.5 L246.4 309.2 L246.9 309.9 L247.3 310.6 L247.8 311.4 L248.2 312.1 L248.7 312.9 L249.2 313.6 L249.7 314.4 L250.2 315.2 L250.7 316.0 L251.2 316.8 L251.7 317.7 L252.3 318.5 L252.3 318.6 L252.8 319.4 L252.9 319.5 L253.4 320.3 L253.4 320.3 L254.0 321.1 L254.0 321.2 L254.6 322.0 L254.6 322.0 L255.2 322.8 L255.2 322.9 L255.8 323.6 L255.8 323.7 L256.4 324.4 L256.4 324.5 L257.0 325.2 L257.0 325.3 L257.6 326.0 L257.7 326.1 L258.3 326.8 L258.3 326.9 L258.9 327.6 L258.9 327.7 L259.5 328.4 L259.6 328.4 L260.2 329.1 L260.2 329.2 L260.8 329.9 L260.9 329.9 L261.5 330.6 L261.6 330.7 L262.2 331.3 L262.2 331.4 L262.9 332.0 L262.9 332.1 L263.6 332.8 L263.6 332.8 L264.2 333.5 L264.3 333.5 L265.0 334.1 L265.0 334.2 L265.7 334.8 L265.7 334.9 L266.4 335.5 L266.4 335.5 L267.1 336.1 L267.2 336.2 L267.8 336.8 L267.9 336.8 L268.6 337.4 L268.6 337.5 L269.3 338.1 L269.4 338.1 L270.1 338.7 L270.1 338.7 L270.8 339.3 L270.9 339.3 L271.6 339.9 L271.7 339.9 L272.4 340.5 L272.4 340.5 L273.1 341.1 L273.2 341.1 L273.9 341.6 L273.9 341.6 L274.7 342.2 L274.7 342.2 L275.5 342.8 L275.5 342.8 L276.4 343.4 L276.4 343.4 L277.3 344.1 L277.3 344.1 L278.2 344.8 L278.2 344.8 L279.2 345.5 L280.2 346.2 L281.3 347.0 L282.4 347.8 L283.5 348.7 L284.7 349.6 L285.9 350.5 L287.2 351.4 L288.5 352.4 L289.8 353.4 L291.2 354.4 L292.6 355.4 L294.0 356.5 L295.3 357.5 L296.7 358.5 L298.1 359.5 L299.5 360.6 L300.9 361.6 L302.2 362.6 L303.6 363.7 L305.0 364.7 L306.4 365.8 L307.7 366.8 L309.1 367.8 L310.5 368.9 L311.9 369.9 L313.2 370.9 L313.2 370.9 L314.5 371.9 L314.5 371.9 L315.8 372.9 L315.8 372.9 L317.0 373.9 L317.0 373.9 L318.2 374.8 L318.2 374.8 L319.4 375.7 L319.4 375.7 L320.5 376.6 L320.5 376.6 L321.5 377.5 L321.5 377.5 L322.5 378.3 L322.5 378.3 L323.5 379.1 L323.5 379.1 L324.4 379.9 L324.4 379.9 L325.3 380.7 L325.3 380.7 L326.1 381.4 L326.1 381.4 L326.9 382.1 L326.9 382.2 L327.6 382.8 L327.6 382.8 L328.3 383.5 L328.3 383.5 L329.0 384.1 L329.0 384.2 L329.6 384.8 L329.6 384.8 L330.3 385.5 L330.3 385.5 L330.9 386.2 L331.0 386.2 L331.6 386.9 L331.6 386.9 L332.2 387.6 L332.3 387.7 L332.9 388.4 L332.9 388.4 L333.6 389.2 L333.6 389.2 L334.2 390.0 L334.2 390.0 L334.9 390.8 L334.9 390.8 L335.6 391.6 L335.6 391.6 L336.2 392.4 L336.2 392.5 L336.9 393.3 L336.9 393.3 L337.5 394.2 L337.6 394.2 L338.2 395.1 L338.2 395.1 L338.9 396.0 L338.9 396.0 L339.5 397.0 L339.6 397.0 L340.3 398.0 L340.3 398.0 L341.0 399.0 L341.0 399.0 L341.8 400.1 L341.8 400.1 L342.5 401.2 L342.5 401.2 L343.4 402.4 L343.4 402.4 L344.2 403.6 L344.2 403.6 L345.1 404.9 L345.1 404.9 L345.9 406.2 L346.0 406.2 L346.9 407.6 L346.9 407.6 L347.8 409.0 L347.8 409.0 L348.8 410.4 L348.8 410.4 L349.8 411.9 L349.8 411.9 L350.8 413.4 L350.8 413.4 L351.9 415.0 L351.9 415.0 L352.9 416.6 L352.9 416.6 L354.0 418.2 L355.2 419.9 L356.3 421.5 L357.4 423.2 L358.5 424.8 L359.6 426.4 L360.7 428.0 L361.8 429.6 L362.9 431.2 L364.0 432.8 L365.1 434.4 L366.2 436.0 L367.4 437.5 L368.5 439.1 L369.6 440.6 L370.7 442.2 L371.8 443.7 L372.9 445.2 L374.0 446.7 L375.1 448.2 L376.2 449.7 L377.2 451.2 L378.3 452.6 L379.4 454.1 L380.5 455.5 L381.5 457.0 L382.6 458.4 L383.7 459.8 L384.7 461.3 L385.8 462.7 L386.8 464.1 L387.9 465.5 L388.9 466.8 L388.9 466.9 L389.9 468.2 L390.0 468.2 L391.0 469.5 L391.0 469.5 L392.0 470.7 L392.0 470.8 L392.9 471.9 L393.0 472.0 L393.9 473.1 L393.9 473.1 L394.8 474.2 L394.9 474.2 L395.7 475.2 L395.8 475.3 L396.6 476.2 L396.7 476.2 L397.5 477.1 L397.6 477.2 L398.4 478.0 L398.5 478.1 L399.2 478.8 L399.3 478.9 L400.1 479.6 L400.2 479.7 L400.9 480.4 L401.0 480.5 L401.7 481.0 L401.8 481.2 L402.5 481.7 L402.7 481.8 L403.3 482.3 L403.4 482.3 L404.0 482.8 L404.1 482.8 L404.7 483.3 L404.8 483.3 L405.4 483.8 L405.5 483.8 L406.2 484.3 L406.2 484.3 L406.9 484.8 L406.9 484.8 L407.6 485.2 L407.7 485.3 L408.3 485.7 L408.4 485.7 L409.0 486.1 L409.1 486.2 L409.8 486.6 L409.8 486.6 L410.5 487.0 L410.5 487.0 L411.2 487.4 L411.3 487.4 L411.9 487.8 L412.0 487.9 L412.7 488.2 L412.7 488.3 L413.4 488.6 L413.5 488.6 L414.1 489.0 L414.2 489.0 L414.9 489.4 L414.9 489.4 L415.6 489.7 L415.7 489.8 L416.4 490.1 L416.5 490.1 L417.2 490.5 L417.3 490.5 L418.1 490.8 L418.2 490.8 L418.9 491.2 L419.0 491.2 L419.8 491.5 L419.9 491.5 L420.7 491.9 L420.8 491.9 L421.6 492.2 L421.7 492.2 L422.6 492.6 L422.6 492.6 L423.5 492.9 L423.6 492.9 L424.5 493.2 L424.6 493.3 L425.5 493.6 L425.6 493.6 L426.6 493.9 L426.6 493.9 L427.6 494.2 L427.7 494.2 L428.7 494.6 L428.7 494.6 L429.8 494.9 L429.9 494.9 L430.9 495.2 L431.1 495.2 L432.1 495.5 L432.2 495.5 L433.3 495.8 L433.4 495.8 L434.5 496.0 L434.7 496.1 L435.8 496.3 L435.9 496.3 L437.0 496.5 L437.1 496.5 L438.3 496.7 L438.4 496.7 L439.6 496.9 L439.7 496.9 L440.9 497.0 L441.0 497.1 L442.2 497.2 L442.3 497.2 L443.6 497.3 L443.7 497.3 L445.0 497.4 L445.0 497.4 L446.3 497.5 L446.4 497.5 L447.7 497.6 L447.8 497.6 L449.1 497.6 L449.2 497.6 L450.6 497.7 L450.8 497.7 L452.2 497.6 L452.4 497.6 L453.8 497.6 L454.0 497.6 L455.5 497.4 L455.7 497.4 L457.3 497.3 L457.4 497.2 L459.1 497.0 L459.3 497.0 L461.0 496.7 L461.1 496.7 L462.9 496.4 L463.0 496.4 L464.9 496.0 L465.0 496.0 L467.0 495.5 L467.1 495.5 L469.1 495.0 L469.2 495.0 L471.3 494.5 L471.3 494.5 L473.5 493.9 L473.6 493.9 L475.8 493.3 L475.9 493.2 L478.2 492.6 L478.2 492.5 L480.6 491.8 L480.6 491.8 L483.1 491.0 L483.1 491.0 L486.1 490.0 L486.2 490.0 L489.8 488.7 L489.8 488.7 L494.0 487.3 L498.9 485.6 L504.3 483.7 L510.4 481.6 L517.0 479.2 L524.2 476.7 L532.0 473.9 L540.4 470.8 L549.5 467.6 L559.1 464.2 L569.3 460.5 L580.1 456.6 L591.5 452.5 L603.5 448.1 L614.9 444.0 L625.8 440.0 L636.1 436.3 L645.9 432.8 L655.1 429.4 L663.7 426.3 L671.7 423.4 L679.2 420.7 L686.2 418.2 L692.6 415.9 L698.4 413.8 L703.6 411.9 L708.3 410.2 L712.4 408.7 L716.0 407.4 L719.0 406.3 L721.8 405.3 L724.4 404.3 L726.9 403.4 L729.1 402.6 L731.2 401.9 L733.1 401.2 L734.7 400.6 L736.2 400.0 L737.6 399.6 L738.7 399.2 L739.6 398.8 L740.4 398.5 L740.9 398.3 L741.3 398.2 L741.4 398.2 L742.0 397.9 L742.5 397.6 L743.0 397.2 L743.4 396.8 L743.7 396.4 L744.0 395.9 L744.2 395.3 L744.3 394.8 L744.4 394.2 L744.4 393.6 L744.3 393.1 L744.1 392.5 L743.9 392.0 L743.6 391.5 L743.2 391.0 L742.8 390.6 L742.4 390.3 L741.9 390.0 L741.3 389.8 L740.8 389.7 L740.2 389.6 L739.6 389.6 L739.1 389.7 L738.4 389.9 L738.3 389.9 L737.9 390.1 L737.4 390.3 L736.6 390.5 L735.7 390.9 L734.6 391.3 L733.3 391.8 L731.8 392.3 L730.1 392.9 L728.2 393.6 L726.1 394.3 L723.9 395.2 L721.4 396.0 L718.8 397.0 L716.0 398.0 L713.0 399.1 L709.4 400.4 L705.3 401.9 L700.6 403.6 L695.4 405.5 L689.6 407.6 L683.2 409.9 L676.3 412.4 L673.6 413.4 L673.2 413.5 L672.8 413.5 L672.4 413.6 L672.0 413.5 L671.6 413.4 L671.3 413.3 L670.9 413.1 L670.6 412.8 L670.3 412.5 L670.1 412.2 L669.9 411.9 L669.7 411.5 L669.7 411.3 L669.7 411.3 L669.5 410.8 L669.5 410.8 L669.3 410.3 L669.3 410.3 L669.1 409.8 L669.1 409.7 L668.9 409.2 L668.9 409.2 L668.7 408.6 L668.7 408.6 L668.5 408.1 L668.5 408.0 L668.3 407.4 L668.3 407.4 L668.0 406.8 L668.0 406.8 L667.8 406.2 L667.5 405.5 L667.2 404.9 L667.0 404.2 L666.7 403.5 L666.7 403.5 L666.4 402.8 L666.4 402.7 L666.1 402.0 L666.0 402.0 L665.7 401.2 L665.7 401.2 L665.4 400.4 L665.0 399.6 L664.6 398.7 L664.2 397.8 L663.8 396.9 L663.4 395.9 L662.9 395.0 L662.5 394.0 L662.0 392.9 L661.5 391.9 L661.0 390.8 L660.5 389.7 L660.0 388.6 L659.9 388.5 L659.4 387.4 L659.4 387.3 L658.8 386.3 L658.8 386.2 L658.2 385.1 L658.2 385.1 L657.6 384.0 L657.6 383.9 L657.0 382.9 L657.0 382.8 L656.4 381.8 L656.4 381.7 L655.8 380.7 L655.7 380.6 L655.1 379.6 L655.1 379.6 L654.4 378.6 L654.4 378.5 L653.8 377.6 L653.7 377.5 L653.1 376.5 L653.0 376.5 L652.4 375.5 L652.3 375.4 L651.7 374.5 L651.6 374.4 L651.0 373.5 L650.9 373.5 L650.2 372.6 L650.2 372.5 L649.5 371.6 L649.4 371.5 L648.7 370.6 L648.5 370.5 L647.8 369.7 L647.7 369.5 L646.9 368.7 L646.8 368.6 L646.0 367.8 L645.8 367.7 L645.0 366.9 L644.9 366.8 L644.0 366.1 L643.9 366.0 L643.0 365.3 L642.9 365.2 L642.0 364.5 L641.8 364.4 L640.9 363.8 L640.8 363.7 L639.8 363.1 L639.6 363.0 L638.7 362.4 L638.5 362.3 L637.5 361.7 L637.4 361.6 L636.3 361.1 L636.2 361.0 L635.1 360.5 L635.0 360.4 L633.9 360.0 L633.7 359.9 L632.6 359.4 L632.5 359.4 L631.3 359.0 L631.2 358.9 L630.1 358.5 L630.0 358.5 L628.8 358.1 L628.7 358.1 L627.5 357.7 L627.4 357.7 L626.3 357.3 L626.1 357.3 L625.0 357.0 L624.8 357.0 L623.6 356.7 L623.5 356.7 L622.3 356.4 L622.2 356.4 L621.0 356.2 L620.9 356.2 L619.7 356.0 L619.5 356.0 L618.3 355.8 L618.2 355.8 L617.0 355.7 L616.9 355.6 L615.6 355.5 L615.5 355.5 L614.3 355.4 L614.1 355.4 L612.9 355.4 L612.8 355.4 L611.6 355.3 L611.2 355.3 L609.8 355.4 L609.6 355.4 L607.9 355.5 L607.7 355.5 L605.9 355.7 L605.7 355.8 L603.7 356.0 L603.6 356.1 L601.3 356.4 L601.2 356.5 L598.7 356.9 L598.7 356.9 L596.0 357.4 L595.9 357.5 L593.0 358.1 L593.0 358.1 L589.9 358.8 L589.8 358.8 L586.6 359.5 L586.5 359.6 L583.1 360.4 L583.0 360.4 L579.3 361.3 L579.3 361.3 L575.4 362.4 L575.4 362.4 L571.3 363.5 L571.3 363.5 L567.0 364.6 L567.0 364.6 L562.5 365.9 L558.2 367.1 L554.0 368.2 L550.1 369.3 L546.3 370.4 L542.7 371.4 L539.2 372.3 L536.0 373.2 L532.9 374.1 L530.0 374.8 L530.0 374.8 L527.3 375.6 L527.3 375.6 L524.7 376.3 L524.7 376.3 L522.3 376.9 L522.3 376.9 L520.1 377.5 L520.1 377.5 L518.1 378.0 L518.1 378.0 L516.2 378.5 L516.2 378.5 L514.6 379.0 L514.6 379.0 L512.9 379.4 L512.9 379.4 L511.4 379.8 L511.3 379.8 L509.8 380.1 L509.8 380.1 L508.3 380.5 L508.3 380.5 L506.8 380.8 L506.8 380.8 L505.4 381.1 L505.3 381.1 L504.0 381.4 L503.9 381.4 L502.6 381.7 L502.6 381.7 L501.3 381.9 L501.2 382.0 L500.0 382.2 L499.9 382.2 L498.7 382.4 L498.7 382.4 L497.5 382.6 L497.5 382.6 L496.3 382.8 L496.3 382.8 L495.2 382.9 L495.1 382.9 L494.1 383.1 L494.0 383.1 L493.0 383.2 L493.0 383.2 L492.0 383.3 L492.0 383.3 L491.0 383.3 L491.0 383.3 L490.1 383.4 L490.0 383.4 L489.1 383.4 L489.0 383.4 L488.1 383.4 L488.1 383.4 L487.2 383.3 L487.1 383.3 L486.3 383.3 L486.2 383.3 L485.4 383.2 L485.3 383.2 L484.5 383.1 L484.4 383.1 L483.6 383.0 L483.5 383.0 L482.7 382.8 L482.6 382.8 L481.8 382.6 L481.8 382.6 L481.0 382.4 L480.9 382.4 L480.2 382.2 L480.1 382.2 L479.3 382.0 L479.3 381.9 L478.5 381.7 L478.4 381.7 L477.6 381.4 L477.6 381.4 L476.7 381.1 L476.7 381.0 L475.8 380.7 L475.8 380.7 L474.9 380.3 L474.9 380.3 L474.0 380.0 L473.9 379.9 L473.0 379.5 L473.0 379.5 L472.1 379.1 L472.1 379.1 L471.2 378.7 L471.1 378.7 L470.2 378.2 L470.2 378.2 L469.2 377.7 L469.2 377.7 L468.3 377.2 L468.2 377.2 L467.3 376.7 L467.2 376.7 L466.3 376.2 L466.2 376.1 L465.3 375.6 L465.2 375.6 L464.3 375.0 L464.2 375.0 L463.2 374.4 L463.2 374.4 L461.9 373.6 L461.9 373.6 L460.4 372.7 L460.4 372.7 L458.6 371.6 L458.6 371.5 L456.5 370.2 L456.5 370.2 L454.1 368.8 L454.1 368.8 L451.5 367.1 L451.5 367.1 L448.7 365.3 L448.7 365.3 L445.6 363.3 L445.6 363.3 L442.2 361.1 L442.2 361.1 L438.5 358.8 L438.5 358.8 L434.7 356.3 L430.5 353.6 L426.1 350.7 L421.4 347.7 L416.5 344.5 L411.3 341.1 L406.3 337.9 L401.4 334.7 L396.7 331.7 L392.1 328.8 L387.7 326.0 L383.5 323.3 L379.4 320.8 L375.5 318.4 L371.7 316.1 L371.7 316.0 L368.1 313.9 L368.1 313.8 L364.7 311.8 L364.7 311.8 L361.4 309.8 L361.4 309.8 L358.3 308.0 L358.2 308.0 L355.3 306.3 L355.3 306.2 L352.5 304.7 L352.5 304.6 L349.8 303.2 L347.3 301.8 L345.0 300.4 L342.7 299.2 L340.6 298.0 L338.6 296.9 L336.7 295.8 L335.0 294.9 L333.3 294.0 L331.8 293.1 L330.5 292.4 L329.2 291.7 L328.1 291.0 L327.1 290.5 L326.2 290.0 L325.4 289.6 L324.8 289.2 L324.7 289.2 L324.1 288.8 L324.0 288.8 L323.4 288.5 L323.3 288.4 L322.6 288.1 L322.5 288.1 L321.8 287.8 L321.7 287.7 L321.0 287.4 L320.9 287.4 L320.2 287.1 L320.1 287.0 L319.4 286.8 L319.3 286.7 L318.6 286.4 L318.5 286.4 L317.7 286.1 L317.6 286.1 L316.8 285.8 L316.7 285.8 L315.9 285.5 L315.8 285.5 L315.0 285.2 L314.9 285.2 L314.1 284.9 L314.0 284.9 L313.1 284.7 L313.1 284.6 L312.2 284.4 L312.1 284.4 L311.2 284.1 L311.0 284.1 L310.0 283.9 L309.9 283.8 L308.9 283.6 L308.7 283.6 L307.6 283.4 L307.5 283.4 L306.3 283.2 L306.2 283.2 L305.0 283.1 L304.9 283.1 L303.6 283.0 L303.5 283.0 L302.2 282.9 L302.1 282.9 L300.7 282.8 L300.6 282.8 L299.2 282.7 L299.1 282.7 L297.6 282.7 L297.5 282.7 L296.0 282.7 L295.9 282.7 L294.3 282.7 L294.2 282.7 L292.6 282.8 L292.5 282.8 L290.8 282.8 L290.7 282.8 L289.0 282.9 L288.9 282.9 L287.1 283.0 L287.0 283.0 L285.2 283.1 L285.2 283.1 L283.4 283.3 L283.4 283.3 L281.6 283.4 L281.6 283.4 L279.8 283.5 L279.8 283.6 L278.1 283.7 L278.0 283.7 L276.3 283.9 L276.3 283.9 L274.6 284.1 L274.6 284.1 L272.9 284.3 L272.9 284.3 L271.3 284.5 L271.2 284.5 L269.6 284.7 L269.6 284.7 L268.0 284.9 L267.9 284.9 L266.4 285.1 L266.3 285.2 L264.8 285.4 L264.8 285.4 L263.3 285.7 L263.2 285.7 L261.7 285.9 L261.7 285.9 L260.2 286.2 L258.8 286.5 L257.5 286.7 L256.3 286.9 L255.1 287.2 L254.0 287.4 L253.0 287.5 L252.1 287.7 L252.1 287.7 L251.2 287.9 L251.2 287.9 L250.4 288.0 L250.4 288.0 L249.8 288.1 L249.4 288.2 L249.1 288.2 L248.7 288.1 L248.3 288.0 L247.9 287.8 L247.6 287.6 L247.3 287.4 L247.0 287.1 L246.8 286.8 L246.6 286.5 L246.5 286.1 L246.4 285.7 L246.3 285.5 L246.3 285.5 L246.2 284.8 L246.2 284.8 L246.1 284.1 L246.1 284.1 L246.0 283.5 L246.0 283.4 L245.9 282.8 L245.9 282.7 L245.8 282.1 L245.8 282.0 L245.7 281.3 L245.7 281.3 L245.6 280.6 L245.6 280.6 L245.5 279.9 L245.5 279.8 L245.4 279.1 L245.4 279.1 L245.4 278.4 L245.4 278.3 L245.3 277.6 L245.3 277.6 L245.3 276.8 L245.3 276.8 L245.2 276.0 L245.2 276.0 L245.2 275.2 L245.2 275.2 L245.1 274.4 L245.1 274.3 L245.1 273.5 L245.1 273.5 L245.1 272.7 L245.1 272.6 L245.1 271.8 L245.1 271.8 L245.1 270.9 L245.1 270.9 L245.1 270.0 L245.1 270.0 L245.1 269.1 L245.1 269.1 L245.1 268.0 L245.1 268.0 L245.1 266.7 L245.1 266.7 L245.2 265.2 L245.2 265.2 L245.2 263.5 L245.2 263.5 L245.3 261.7 L245.3 259.7 L245.4 257.4 L245.4 255.0 L245.5 252.4 L245.6 249.7 L245.6 246.7 L245.7 243.6 L245.8 240.3 L245.9 236.7 L246.0 233.1 L246.1 229.2 L246.2 225.3 L246.3 221.3 L246.4 217.4 L246.5 213.4 L246.6 209.4 L246.7 205.3 L246.8 201.3 L246.9 197.2 L247.0 193.1 L247.1 188.9 L247.1 184.7 L247.2 180.5 L247.3 176.3 L247.4 172.0 L247.5 167.7 L247.5 163.4 L247.6 159.3 L247.7 155.2 L247.7 151.4 L247.8 147.7 L247.9 144.1 L247.9 140.7 L248.0 137.4 L248.0 134.3 L248.1 131.3 L248.1 128.4 L248.1 125.8 L248.2 123.2 L248.2 120.8 L248.2 118.6 L248.2 116.5 L248.3 114.6 L248.3 112.8 L248.3 111.1 L248.3 109.5 L248.3 108.0 L248.3 106.7 L248.3 105.5 L248.4 104.4 L248.4 103.4 L248.4 102.6 L248.4 101.9 L248.4 101.3 L248.4 100.8 L248.4 100.4 L248.4 100.2 L248.4 100.1 L248.4 99.5 L248.3 98.9 L248.1 98.4 L247.8 97.8 L247.5 97.4 L247.1 96.9 L246.7 96.5 L246.2 96.2 L245.7 96.0 L245.2 95.8 L244.6 95.6 L244.0 95.6 L243.5 95.6 L242.9 95.7 L242.4 95.9 L241.8 96.2 L241.4 96.5 L240.9 96.9 L240.5 97.3 L240.2 97.8 L240.0 98.3 L239.8 98.8 L239.6 99.4 L239.6 100.1 L239.6 100.1 M661.5 414.7 L661.6 415.0 L661.7 415.4 L661.7 415.8 L661.6 416.2 L661.5 416.6 L661.4 416.9 L661.2 417.2 L660.9 417.6 L660.7 417.8 L660.4 418.1 L660.0 418.3 L659.7 418.4 L652.1 421.2 L642.9 424.5 L633.1 428.0 L622.8 431.8 L611.9 435.7 L600.5 439.8 L588.5 444.2 L577.1 448.3 L566.3 452.2 L556.1 455.9 L546.5 459.3 L537.5 462.6 L529.1 465.6 L521.3 468.4 L521.3 468.4 L514.0 470.9 L514.0 470.9 L507.4 473.3 L507.4 473.3 L501.4 475.4 L501.4 475.4 L496.0 477.3 L496.0 477.3 L491.2 478.9 L491.2 479.0 L487.0 480.4 L487.0 480.4 L483.4 481.6 L483.3 481.6 L480.4 482.6 L480.3 482.6 L478.0 483.4 L477.9 483.4 L475.6 484.1 L475.6 484.1 L473.4 484.8 L473.4 484.8 L471.2 485.4 L471.2 485.4 L469.1 486.0 L469.1 486.0 L467.1 486.5 L467.0 486.5 L465.1 486.9 L465.1 487.0 L463.2 487.4 L463.2 487.4 L461.4 487.7 L461.3 487.7 L459.6 488.0 L459.6 488.0 L458.0 488.3 L457.9 488.3 L456.4 488.5 L456.3 488.5 L454.9 488.7 L454.8 488.7 L453.4 488.8 L453.3 488.8 L452.0 488.8 L451.9 488.8 L450.8 488.9 L450.7 488.9 L449.5 488.8 L449.4 488.8 L448.2 488.8 L448.1 488.8 L446.9 488.7 L446.8 488.7 L445.6 488.6 L445.6 488.6 L444.4 488.6 L444.4 488.5 L443.2 488.4 L443.1 488.4 L442.0 488.3 L442.0 488.3 L440.8 488.2 L440.8 488.2 L439.7 488.0 L439.6 488.0 L438.6 487.8 L438.5 487.8 L437.5 487.6 L437.4 487.6 L436.4 487.4 L436.3 487.4 L435.3 487.2 L435.3 487.2 L434.3 487.0 L434.2 486.9 L433.3 486.7 L433.2 486.7 L432.3 486.4 L432.2 486.4 L431.2 486.1 L431.2 486.1 L430.2 485.8 L430.2 485.8 L429.3 485.5 L429.2 485.5 L428.3 485.2 L428.3 485.2 L427.4 484.9 L427.3 484.9 L426.5 484.6 L426.4 484.6 L425.6 484.3 L425.6 484.3 L424.7 484.0 L424.7 484.0 L423.9 483.7 L423.9 483.7 L423.1 483.4 L423.1 483.3 L422.3 483.0 L422.3 483.0 L421.6 482.7 L421.5 482.7 L420.8 482.4 L420.8 482.4 L420.1 482.1 L420.1 482.1 L419.5 481.8 L419.4 481.8 L418.8 481.5 L418.8 481.5 L418.2 481.2 L418.1 481.1 L417.5 480.8 L417.5 480.8 L416.9 480.5 L416.9 480.5 L416.2 480.1 L416.2 480.1 L415.6 479.8 L415.6 479.8 L415.0 479.4 L414.9 479.4 L414.3 479.0 L414.3 479.0 L413.7 478.7 L413.6 478.6 L413.0 478.3 L413.0 478.2 L412.4 477.9 L412.4 477.8 L411.8 477.4 L411.7 477.4 L411.1 477.0 L411.1 477.0 L410.5 476.6 L410.4 476.6 L409.8 476.1 L409.8 476.1 L409.2 475.7 L409.2 475.7 L408.6 475.2 L408.5 475.2 L408.0 474.8 L407.9 474.7 L407.4 474.3 L407.3 474.3 L406.8 473.8 L406.7 473.7 L406.1 473.2 L406.0 473.2 L405.4 472.6 L405.4 472.5 L404.7 471.8 L404.6 471.8 L403.9 471.1 L403.9 471.0 L403.1 470.2 L403.1 470.2 L402.3 469.4 L402.3 469.3 L401.5 468.4 L401.5 468.4 L400.6 467.4 L400.6 467.4 L399.7 466.3 L399.7 466.3 L398.8 465.2 L398.8 465.2 L397.9 464.1 L397.9 464.0 L396.9 462.8 L396.9 462.8 L395.9 461.5 L395.9 461.5 L394.9 460.2 L394.9 460.2 L393.9 458.8 L393.9 458.8 L392.8 457.4 L392.8 457.4 L391.8 456.0 L391.8 456.0 L390.7 454.6 L390.7 454.6 L389.7 453.2 L389.7 453.2 L388.6 451.8 L388.6 451.8 L387.5 450.3 L387.5 450.3 L386.5 448.9 L386.5 448.9 L385.4 447.4 L385.4 447.4 L384.3 446.0 L384.3 446.0 L383.3 444.5 L383.3 444.5 L382.2 443.0 L382.2 443.0 L381.1 441.5 L381.1 441.5 L380.0 440.0 L380.0 440.0 L378.9 438.5 L378.9 438.5 L377.8 437.0 L377.8 437.0 L376.7 435.5 L376.7 435.5 L375.6 434.0 L375.6 434.0 L374.5 432.4 L374.5 432.4 L373.4 430.9 L373.4 430.9 L372.3 429.3 L372.3 429.3 L371.2 427.8 L371.2 427.8 L370.2 426.2 L370.1 426.2 L369.1 424.6 L369.1 424.6 L368.0 423.0 L368.0 423.0 L366.9 421.4 L366.9 421.4 L365.8 419.8 L365.8 419.8 L364.7 418.2 L364.7 418.2 L363.6 416.6 L363.6 416.6 L362.5 415.0 L362.5 415.0 L361.4 413.3 L361.4 413.3 L360.3 411.7 L359.2 410.1 L358.1 408.5 L357.1 407.0 L356.1 405.5 L355.1 404.0 L354.2 402.6 L353.2 401.3 L352.3 399.9 L351.4 398.7 L350.6 397.4 L349.8 396.2 L349.0 395.1 L348.2 394.0 L347.5 392.9 L346.7 391.9 L346.0 390.9 L346.0 390.9 L345.3 389.9 L345.3 389.9 L344.6 389.0 L344.6 388.9 L343.9 388.0 L343.9 388.0 L343.2 387.1 L343.2 387.0 L342.5 386.2 L342.4 386.1 L341.8 385.3 L341.7 385.2 L341.0 384.4 L341.0 384.4 L340.3 383.5 L340.3 383.5 L339.6 382.7 L339.6 382.6 L338.9 381.9 L338.8 381.8 L338.2 381.0 L338.1 381.0 L337.4 380.3 L337.4 380.2 L336.7 379.5 L336.7 379.4 L336.0 378.7 L335.9 378.7 L335.2 378.0 L335.2 377.9 L334.5 377.2 L334.4 377.2 L333.7 376.5 L333.7 376.4 L332.9 375.7 L332.9 375.7 L332.0 374.9 L332.0 374.9 L331.1 374.1 L331.1 374.1 L330.2 373.3 L330.2 373.3 L329.2 372.4 L329.2 372.4 L328.2 371.6 L328.2 371.5 L327.1 370.7 L327.1 370.7 L326.0 369.8 L326.0 369.8 L324.9 368.9 L324.9 368.8 L323.7 367.9 L323.7 367.9 L322.5 366.9 L322.5 366.9 L321.2 366.0 L321.2 365.9 L319.9 365.0 L319.9 364.9 L318.6 363.9 L318.5 363.9 L317.2 362.9 L315.8 361.8 L314.4 360.8 L313.0 359.8 L311.7 358.7 L310.3 357.7 L308.9 356.6 L307.5 355.6 L306.1 354.6 L304.8 353.5 L303.4 352.5 L302.0 351.5 L300.6 350.4 L299.2 349.4 L297.9 348.4 L296.5 347.3 L295.1 346.3 L293.7 345.3 L292.4 344.3 L291.2 343.4 L290.0 342.5 L288.8 341.6 L287.6 340.8 L286.5 339.9 L285.5 339.2 L284.4 338.4 L283.4 337.7 L282.5 337.0 L281.6 336.3 L280.7 335.7 L279.9 335.1 L279.1 334.5 L278.4 334.0 L278.4 334.0 L277.7 333.5 L277.7 333.5 L277.0 333.0 L277.0 332.9 L276.3 332.4 L276.3 332.4 L275.7 331.9 L275.6 331.9 L275.0 331.3 L275.0 331.3 L274.3 330.8 L274.3 330.8 L273.7 330.2 L273.6 330.2 L273.0 329.6 L273.0 329.6 L272.4 329.0 L272.3 329.0 L271.7 328.5 L271.7 328.4 L271.1 327.8 L271.1 327.8 L270.5 327.2 L270.5 327.2 L269.9 326.6 L269.8 326.6 L269.2 326.0 L269.2 326.0 L268.6 325.3 L268.6 325.3 L268.0 324.7 L268.0 324.7 L267.4 324.0 L267.4 324.0 L266.9 323.4 L266.8 323.3 L266.3 322.7 L266.2 322.7 L265.7 322.0 L265.7 322.0 L265.1 321.3 L265.1 321.3 L264.5 320.6 L264.5 320.6 L264.0 319.9 L264.0 319.9 L263.4 319.2 L263.4 319.1 L262.9 318.4 L262.9 318.4 L262.3 317.7 L262.3 317.7 L261.8 316.9 L261.8 316.9 L261.2 316.2 L261.2 316.1 L260.7 315.4 L260.7 315.4 L260.2 314.6 L260.2 314.6 L259.7 313.8 L259.7 313.8 L259.1 313.0 L259.1 313.0 L258.6 312.1 L258.6 312.1 L258.1 311.3 L258.1 311.3 L257.6 310.5 L257.6 310.5 L257.1 309.8 L257.1 309.8 L256.6 309.0 L256.6 309.0 L256.2 308.2 L256.2 308.2 L255.7 307.5 L255.7 307.5 L255.3 306.8 L255.3 306.8 L254.8 306.1 L254.8 306.0 L254.4 305.4 L254.4 305.3 L254.0 304.7 L254.0 304.7 L253.6 304.0 L253.6 304.0 L253.2 303.3 L253.2 303.3 L252.8 302.7 L252.8 302.7 L252.4 302.1 L252.4 302.1 L252.1 301.5 L252.1 301.5 L251.7 300.9 L251.7 300.9 L251.7 300.8 L251.5 300.4 L251.4 300.0 L251.3 299.6 L251.3 299.2 L251.3 298.8 L251.4 298.4 L251.6 298.0 L251.8 297.7 L252.0 297.3 L252.3 297.1 L252.6 296.8 L253.0 296.6 L253.4 296.5 L253.7 296.4 L254.6 296.2 L255.6 296.0 L256.7 295.8 L257.9 295.6 L259.1 295.4 L260.4 295.1 L261.8 294.9 L263.3 294.6 L263.3 294.6 L264.7 294.3 L264.7 294.3 L266.2 294.1 L266.2 294.1 L267.7 293.9 L267.7 293.8 L269.2 293.6 L269.2 293.6 L270.8 293.4 L270.8 293.4 L272.3 293.2 L272.4 293.2 L273.9 293.0 L274.0 293.0 L275.6 292.8 L275.6 292.8 L277.2 292.6 L277.2 292.6 L278.9 292.5 L278.9 292.5 L280.6 292.3 L280.6 292.3 L282.3 292.2 L282.3 292.2 L284.0 292.0 L284.0 292.0 L285.8 291.9 L285.8 291.9 L287.6 291.8 L287.6 291.8 L289.4 291.7 L289.4 291.7 L291.1 291.6 L291.2 291.6 L292.8 291.5 L292.8 291.5 L294.4 291.5 L294.5 291.5 L296.0 291.5 L296.0 291.5 L297.5 291.5 L297.5 291.5 L298.9 291.5 L299.0 291.5 L300.3 291.6 L300.3 291.6 L301.6 291.6 L301.6 291.6 L302.8 291.7 L302.9 291.7 L304.0 291.8 L304.1 291.8 L305.1 292.0 L305.2 292.0 L306.2 292.1 L306.3 292.1 L307.2 292.3 L307.2 292.3 L308.1 292.4 L308.2 292.5 L308.9 292.6 L309.0 292.7 L309.8 292.9 L309.8 292.9 L310.7 293.1 L310.7 293.1 L311.5 293.4 L311.5 293.4 L312.3 293.6 L312.4 293.6 L313.1 293.9 L313.2 293.9 L313.9 294.1 L314.0 294.1 L314.7 294.4 L314.7 294.4 L315.4 294.7 L315.5 294.7 L316.2 294.9 L316.2 294.9 L316.8 295.2 L316.9 295.2 L317.5 295.5 L317.6 295.5 L318.2 295.8 L318.2 295.8 L318.8 296.1 L318.9 296.1 L319.4 296.3 L319.5 296.4 L320.0 296.6 L320.1 296.7 L320.6 296.9 L320.6 297.0 L321.2 297.3 L321.2 297.3 L321.9 297.7 L321.9 297.7 L322.8 298.2 L323.8 298.7 L324.9 299.3 L326.2 300.0 L327.5 300.8 L329.0 301.6 L330.7 302.5 L332.4 303.5 L334.3 304.6 L336.3 305.7 L338.4 306.9 L340.7 308.1 L343.0 309.5 L345.5 310.9 L348.1 312.3 L348.2 312.3 L350.9 313.9 L350.9 313.9 L353.8 315.6 L353.8 315.6 L356.9 317.4 L356.9 317.4 L360.1 319.3 L360.2 319.3 L363.6 321.4 L363.6 321.4 L367.1 323.5 L367.1 323.6 L370.9 325.8 L370.9 325.8 L374.7 328.3 L374.8 328.3 L378.8 330.8 L378.8 330.8 L383.0 333.4 L383.0 333.4 L387.4 336.2 L387.4 336.2 L391.9 339.1 L391.9 339.1 L396.6 342.1 L396.6 342.1 L401.5 345.3 L401.5 345.3 L406.5 348.5 L406.5 348.5 L411.7 351.9 L416.6 355.1 L421.3 358.1 L425.7 361.0 L429.9 363.7 L433.8 366.2 L437.4 368.5 L440.8 370.7 L443.9 372.7 L446.8 374.5 L449.4 376.2 L451.8 377.7 L453.9 379.0 L455.7 380.2 L455.8 380.2 L457.3 381.1 L457.4 381.2 L458.7 382.0 L458.7 382.0 L459.8 382.6 L459.8 382.6 L460.9 383.2 L460.9 383.3 L462.0 383.8 L462.0 383.9 L463.1 384.4 L463.1 384.5 L464.1 385.0 L464.2 385.0 L465.2 385.6 L465.3 385.6 L466.3 386.1 L466.3 386.1 L467.3 386.6 L467.4 386.6 L468.4 387.1 L468.4 387.1 L469.4 387.6 L469.5 387.6 L470.5 388.0 L470.5 388.0 L471.5 388.5 L471.6 388.5 L472.5 388.9 L472.6 388.9 L473.5 389.3 L473.6 389.3 L474.6 389.6 L474.6 389.7 L475.6 390.0 L475.7 390.0 L476.6 390.3 L476.7 390.4 L477.6 390.6 L477.8 390.7 L478.7 390.9 L478.9 391.0 L479.8 391.2 L480.0 391.2 L480.9 391.4 L481.1 391.5 L482.0 391.6 L482.2 391.7 L483.2 391.8 L483.3 391.8 L484.3 391.9 L484.5 392.0 L485.5 392.1 L485.6 392.1 L486.6 392.1 L486.8 392.1 L487.8 392.2 L488.0 392.2 L489.0 392.2 L489.1 392.2 L490.2 392.2 L490.3 392.2 L491.4 392.1 L491.5 392.1 L492.6 392.1 L492.7 392.0 L493.8 391.9 L493.9 391.9 L495.0 391.8 L495.1 391.8 L496.3 391.7 L496.3 391.7 L497.5 391.5 L497.6 391.5 L498.8 391.3 L498.9 391.3 L500.1 391.1 L500.2 391.1 L501.4 390.9 L501.5 390.8 L502.8 390.6 L502.9 390.6 L504.2 390.3 L504.3 390.3 L505.7 390.1 L505.7 390.0 L507.2 389.7 L507.2 389.7 L508.7 389.4 L508.7 389.4 L510.2 389.1 L510.3 389.1 L511.8 388.7 L511.8 388.7 L513.4 388.3 L513.4 388.3 L515.1 387.9 L515.1 387.9 L516.7 387.5 L516.8 387.5 L518.4 387.0 L520.3 386.5 L522.4 386.0 L524.6 385.4 L527.0 384.8 L529.6 384.1 L532.3 383.3 L535.2 382.5 L538.3 381.7 L541.6 380.8 L545.0 379.9 L548.6 378.9 L552.4 377.8 L556.4 376.7 L560.5 375.6 L564.8 374.4 L569.3 373.1 L569.3 373.1 L573.6 372.0 L573.6 372.0 L577.6 370.9 L577.6 370.9 L581.5 369.9 L581.5 369.9 L585.1 368.9 L585.2 368.9 L588.6 368.1 L588.6 368.1 L591.8 367.3 L591.9 367.3 L594.9 366.7 L594.9 366.7 L597.7 366.1 L597.7 366.1 L600.3 365.6 L600.4 365.5 L602.7 365.1 L602.8 365.1 L604.9 364.8 L605.0 364.8 L606.9 364.5 L606.9 364.5 L608.6 364.3 L608.7 364.3 L610.1 364.2 L610.2 364.2 L611.3 364.1 L611.5 364.1 L612.5 364.2 L612.6 364.2 L613.7 364.2 L613.7 364.2 L614.8 364.3 L614.9 364.3 L616.0 364.4 L616.1 364.4 L617.2 364.5 L617.2 364.5 L618.3 364.7 L618.4 364.7 L619.4 364.9 L619.5 364.9 L620.6 365.1 L620.6 365.1 L621.7 365.3 L621.7 365.3 L622.8 365.5 L622.9 365.6 L623.9 365.8 L624.0 365.8 L625.0 366.1 L625.0 366.1 L626.1 366.5 L626.1 366.5 L627.1 366.8 L627.2 366.8 L628.2 367.2 L628.3 367.2 L629.3 367.6 L629.3 367.6 L630.3 368.0 L630.4 368.1 L631.3 368.5 L631.4 368.5 L632.3 368.9 L632.4 369.0 L633.2 369.4 L633.3 369.5 L634.2 369.9 L634.2 370.0 L635.0 370.5 L635.1 370.5 L635.9 371.0 L636.0 371.1 L636.7 371.6 L636.8 371.6 L637.6 372.2 L637.6 372.2 L638.3 372.8 L638.4 372.9 L639.1 373.4 L639.2 373.5 L639.8 374.1 L639.9 374.2 L640.5 374.8 L640.6 374.9 L641.2 375.5 L641.3 375.6 L641.9 376.3 L642.0 376.3 L642.5 377.0 L642.6 377.1 L643.2 377.9 L643.2 377.9 L643.9 378.7 L643.9 378.8 L644.5 379.6 L644.5 379.6 L645.1 380.5 L645.2 380.5 L645.8 381.4 L645.8 381.5 L646.4 382.3 L646.4 382.4 L647.0 383.3 L647.0 383.3 L647.6 384.2 L647.6 384.3 L648.2 385.2 L648.2 385.2 L648.8 386.2 L648.8 386.2 L649.3 387.2 L649.3 387.2 L649.9 388.2 L649.9 388.2 L650.4 389.2 L650.4 389.2 L651.0 390.2 L651.0 390.3 L651.5 391.3 L651.5 391.3 L652.0 392.3 L652.0 392.4 L652.5 393.4 L652.5 393.4 L653.0 394.5 L653.0 394.5 L653.5 395.6 L653.5 395.6 L654.0 396.6 L654.0 396.6 L654.5 397.6 L654.5 397.6 L654.9 398.6 L654.9 398.6 L655.4 399.6 L655.4 399.6 L655.8 400.5 L655.8 400.5 L656.2 401.4 L656.2 401.4 L656.6 402.2 L656.6 402.2 L656.9 403.1 L656.9 403.1 L657.3 403.9 L657.3 403.9 L657.6 404.7 L657.6 404.7 L657.9 405.4 L658.0 405.4 L658.3 406.1 L658.3 406.1 L658.5 406.8 L658.5 406.8 L658.8 407.5 L658.8 407.5 L659.1 408.2 L659.1 408.2 L659.3 408.8 L659.3 408.8 L659.6 409.4 L659.6 409.4 L659.8 410.0 L659.8 410.0 L660.0 410.6 L660.0 410.6 L660.3 411.2 L660.3 411.2 L660.5 411.7 L660.5 411.7 L660.7 412.2 L660.7 412.2 L660.8 412.7 L660.8 412.7 L661.0 413.2 L661.0 413.2 L661.2 413.7 L661.2 413.7 L661.3 414.1 L661.3 414.2 L661.5 414.6 L661.5 414.6 L661.5 414.7" stroke="#ff0000" stroke-width="2.0" fill="none" />
<path d="M244.0 100.0 L244.0 100.1 L244.0 100.4 L244.0 100.7 L244.0 101.2 L244.0 101.8 L244.0 102.5 L244.0 103.4 L244.0 104.4 L243.9 105.4 L243.9 106.7 L243.9 108.0 L243.9 109.4 L243.9 111.0 L243.9 112.7 L243.9 114.5 L243.8 116.5 L243.8 118.6 L243.8 120.8 L243.8 123.2 L243.7 125.7 L243.7 128.4 L243.7 131.2 L243.6 134.2 L243.6 137.3 L243.5 140.6 L243.5 144.0 L243.4 147.6 L243.3 151.3 L243.3 155.2 L243.2 159.2 L243.1 163.3 L243.1 167.7 L243.0 171.9 L242.9 176.2 L242.8 180.4 L242.7 184.6 L242.7 188.8 L242.6 193.0 L242.5 197.1 L242.4 201.2 L242.3 205.2 L242.2 209.3 L242.1 213.3 L242.0 217.3 L241.9 221.2 L241.8 225.2 L241.7 229.1 L241.6 232.9 L241.5 236.6 L241.4 240.1 L241.3 243.5 L241.2 246.6 L241.2 249.6 L241.1 252.3 L241.0 254.9 L241.0 257.3 L240.9 259.6 L240.9 261.6 L240.8 263.4 L240.8 265.1 L240.7 266.6 L240.7 267.9 L240.7 269.0 L240.7 270.0 L240.7 270.9 L240.7 271.8 L240.7 272.7 L240.7 273.6 L240.7 274.5 L240.8 275.3 L240.8 276.2 L240.9 277.0 L240.9 277.9 L241.0 278.7 L241.0 279.5 L241.1 280.3 L241.2 281.1 L241.3 281.9 L241.4 282.6 L241.5 283.4 L241.6 284.1 L241.7 284.9 L241.9 285.6 L242.0 286.3 L242.1 287.0 L242.3 287.7 L242.4 288.4 L242.6 289.1 L242.7 289.8 L242.9 290.4 L243.1 291.1 L243.2 291.8 L243.4 292.4 L243.6 293.1 L243.8 293.7 L244.0 294.3 L244.2 294.9 L244.4 295.6 L244.7 296.2 L244.9 296.8 L245.2 297.4 L245.4 298.1 L245.7 298.7 L246.0 299.3 L246.3 299.9 L246.6 300.6 L246.9 301.2 L247.2 301.8 L247.6 302.4 L247.9 303.1 L248.3 303.7 L248.6 304.3 L249.0 305.0 L249.4 305.6 L249.8 306.3 L250.2 306.9 L250.6 307.6 L251.1 308.3 L251.5 309.1 L252.0 309.8 L252.4 310.6 L252.9 311.3 L253.4 312.1 L253.9 312.9 L254.4 313.7 L254.9 314.5 L255.4 315.3 L256.0 316.2 L256.5 317.0 L257.1 317.8 L257.6 318.6 L258.2 319.4 L258.8 320.2 L259.3 321.0 L259.9 321.8 L260.5 322.6 L261.1 323.3 L261.7 324.1 L262.3 324.8 L262.9 325.5 L263.5 326.3 L264.2 327.0 L264.8 327.7 L265.4 328.3 L266.1 329.0 L266.7 329.7 L267.4 330.4 L268.0 331.0 L268.7 331.6 L269.4 332.3 L270.1 332.9 L270.8 333.5 L271.5 334.1 L272.2 334.7 L272.9 335.3 L273.6 335.9 L274.3 336.4 L275.0 337.0 L275.8 337.5 L276.5 338.1 L277.3 338.6 L278.1 339.2 L279.0 339.9 L279.9 340.5 L280.8 341.2 L281.8 341.9 L282.8 342.7 L283.9 343.5 L285.0 344.3 L286.2 345.1 L287.3 346.0 L288.6 346.9 L289.8 347.9 L291.1 348.8 L292.5 349.8 L293.8 350.9 L295.2 351.9 L296.6 352.9 L298.0 354.0 L299.4 355.0 L300.7 356.0 L302.1 357.1 L303.5 358.1 L304.9 359.1 L306.3 360.2 L307.6 361.2 L309.0 362.2 L310.4 363.3 L311.8 364.3 L313.1 365.3 L314.5 366.4 L315.9 367.4 L317.2 368.4 L318.5 369.4 L319.8 370.4 L321.0 371.3 L322.1 372.3 L323.2 373.2 L324.3 374.1 L325.4 374.9 L326.3 375.8 L327.3 376.6 L328.2 377.4 L329.1 378.2 L329.9 378.9 L330.7 379.6 L331.4 380.4 L332.1 381.0 L332.8 381.7 L333.5 382.5 L334.2 383.2 L334.9 384.0 L335.6 384.7 L336.3 385.5 L336.9 386.3 L337.6 387.2 L338.3 388.0 L339.0 388.9 L339.7 389.8 L340.4 390.7 L341.1 391.6 L341.8 392.5 L342.5 393.5 L343.1 394.4 L343.9 395.4 L344.6 396.5 L345.4 397.6 L346.2 398.7 L347.0 399.9 L347.8 401.1 L348.7 402.4 L349.6 403.7 L350.5 405.1 L351.5 406.5 L352.4 407.9 L353.4 409.4 L354.5 410.9 L355.5 412.5 L356.6 414.1 L357.7 415.8 L358.8 417.4 L359.9 419.1 L361.0 420.7 L362.1 422.3 L363.2 423.9 L364.3 425.5 L365.4 427.1 L366.5 428.7 L367.6 430.3 L368.7 431.9 L369.8 433.4 L370.9 435.0 L372.0 436.5 L373.1 438.1 L374.2 439.6 L375.3 441.1 L376.4 442.6 L377.5 444.1 L378.6 445.6 L379.7 447.1 L380.8 448.6 L381.9 450.0 L382.9 451.5 L384.0 452.9 L385.1 454.4 L386.1 455.8 L387.2 457.2 L388.2 458.6 L389.3 460.0 L390.3 461.4 L391.4 462.8 L392.4 464.2 L393.4 465.5 L394.4 466.8 L395.4 468.0 L396.3 469.1 L397.3 470.2 L398.2 471.3 L399.0 472.3 L399.9 473.2 L400.7 474.1 L401.5 474.9 L402.3 475.7 L403.1 476.4 L403.8 477.1 L404.6 477.7 L405.3 478.2 L405.9 478.8 L406.6 479.2 L407.3 479.7 L408.0 480.2 L408.6 480.7 L409.3 481.1 L410.0 481.5 L410.7 482.0 L411.4 482.4 L412.0 482.8 L412.7 483.2 L413.4 483.6 L414.1 484.0 L414.8 484.4 L415.5 484.7 L416.2 485.1 L416.8 485.4 L417.6 485.8 L418.3 486.1 L419.0 486.4 L419.8 486.8 L420.6 487.1 L421.5 487.4 L422.3 487.8 L423.2 488.1 L424.1 488.4 L425.0 488.8 L426.0 489.1 L426.9 489.4 L427.9 489.7 L428.9 490.0 L430.0 490.3 L431.0 490.7 L432.1 491.0 L433.2 491.2 L434.3 491.5 L435.5 491.7 L436.6 492.0 L437.8 492.2 L439.0 492.4 L440.2 492.5 L441.5 492.7 L442.7 492.8 L444.0 492.9 L445.3 493.0 L446.6 493.1 L448.0 493.2 L449.3 493.2 L450.7 493.3 L452.1 493.2 L453.6 493.2 L455.2 493.1 L456.9 492.9 L458.6 492.7 L460.3 492.4 L462.2 492.1 L464.1 491.7 L466.1 491.2 L468.1 490.8 L470.2 490.2 L472.4 489.6 L474.6 489.0 L476.9 488.3 L479.3 487.6 L481.7 486.8 L484.8 485.8 L488.4 484.6 L492.6 483.1 L497.4 481.4 L502.9 479.5 L508.9 477.4 L515.5 475.1 L522.7 472.5 L530.6 469.7 L539.0 466.7 L548.0 463.5 L557.6 460.0 L567.8 456.3 L578.6 452.4 L590.0 448.3 L602.0 444.0 L613.4 439.8 L624.3 435.9 L634.6 432.2 L644.4 428.6 L653.6 425.3 L662.2 422.2 L670.2 419.3 L677.8 416.6 L684.7 414.0 L691.1 411.7 L696.9 409.6 L702.1 407.7 L706.8 406.0 L710.9 404.5 L714.5 403.2 L717.5 402.2 L720.3 401.1 L722.9 400.2 L725.4 399.3 L727.6 398.5 L729.7 397.7 L731.6 397.1 L733.2 396.4 L734.8 395.9 L736.1 395.4 L737.2 395.0 L738.1 394.7 L738.9 394.4 L739.4 394.2 L739.8 394.1 L740.0 394.0" stroke="#00a300" stroke-width="1.05" fill="none" />
<path d="M246.0 293.2 L246.0 293.2 L246.0 293.2 L246.1 293.2 L246.2 293.2 L246.2 293.2 L246.3 293.2 L246.4 293.1 L246.6 293.1 L246.7 293.1 L246.9 293.1 L247.0 293.0 L247.2 293.0 L247.4 293.0 L247.6 293.0 L247.9 292.9 L248.1 292.9 L248.5 292.8 L248.9 292.8 L249.3 292.7 L249.9 292.6 L250.5 292.5 L251.2 292.3 L252.0 292.2 L252.9 292.0 L253.8 291.9 L254.8 291.7 L255.9 291.5 L257.1 291.3 L258.3 291.0 L259.6 290.8 L261.0 290.5 L262.5 290.3 L264.0 290.0 L265.5 289.7 L267.0 289.5 L268.6 289.3 L270.2 289.0 L271.8 288.8 L273.4 288.6 L275.1 288.4 L276.8 288.3 L278.5 288.1 L280.2 287.9 L281.9 287.8 L283.7 287.6 L285.5 287.5 L287.3 287.4 L289.2 287.3 L291.0 287.2 L292.7 287.2 L294.4 287.1 L296.0 287.1 L297.5 287.1 L299.0 287.1 L300.5 287.2 L301.9 287.2 L303.2 287.3 L304.5 287.5 L305.7 287.6 L306.9 287.8 L308.0 287.9 L309.0 288.1 L310.0 288.4 L311.0 288.6 L311.9 288.9 L312.8 289.1 L313.7 289.4 L314.5 289.7 L315.4 290.0 L316.2 290.2 L317.0 290.5 L317.8 290.8 L318.5 291.1 L319.3 291.4 L320.0 291.8 L320.7 292.1 L321.4 292.4 L322.0 292.7 L322.7 293.1 L323.3 293.4 L324.1 293.8 L324.9 294.3 L325.9 294.9 L327.1 295.5 L328.3 296.2 L329.7 297.0 L331.2 297.8 L332.8 298.7 L334.6 299.7 L336.4 300.7 L338.4 301.8 L340.6 303.0 L342.8 304.3 L345.2 305.6 L347.7 307.0 L350.3 308.5 L353.1 310.1 L356.0 311.8 L359.1 313.6 L362.4 315.6 L365.8 317.6 L369.4 319.8 L373.2 322.1 L377.1 324.5 L381.1 327.1 L385.4 329.7 L389.8 332.5 L394.3 335.4 L399.0 338.4 L403.9 341.6 L408.9 344.8 L414.1 348.2 L419.0 351.4 L423.7 354.4 L428.1 357.3 L432.3 360.0 L436.2 362.5 L439.8 364.8 L443.2 367.0 L446.3 369.0 L449.2 370.8 L451.8 372.5 L454.1 374.0 L456.2 375.3 L458.1 376.4 L459.6 377.4 L461.0 378.2 L462.0 378.8 L463.1 379.4 L464.1 380.0 L465.2 380.6 L466.2 381.1 L467.2 381.6 L468.2 382.2 L469.2 382.6 L470.2 383.1 L471.2 383.6 L472.2 384.0 L473.2 384.4 L474.2 384.8 L475.1 385.2 L476.1 385.5 L477.0 385.8 L478.0 386.2 L478.9 386.4 L479.9 386.7 L480.9 386.9 L481.8 387.1 L482.8 387.3 L483.8 387.5 L484.9 387.6 L485.9 387.7 L486.9 387.7 L488.0 387.8 L489.1 387.8 L490.1 387.8 L491.2 387.7 L492.3 387.7 L493.4 387.6 L494.6 387.4 L495.7 387.3 L496.9 387.1 L498.1 386.9 L499.4 386.7 L500.7 386.5 L502.1 386.3 L503.4 386.0 L504.8 385.7 L506.3 385.4 L507.7 385.1 L509.3 384.8 L510.8 384.4 L512.4 384.0 L514.0 383.6 L515.7 383.2 L517.3 382.8 L519.2 382.3 L521.2 381.8 L523.5 381.2 L525.8 380.5 L528.4 379.8 L531.1 379.1 L534.1 378.3 L537.1 377.5 L540.4 376.6 L543.8 375.6 L547.5 374.6 L551.2 373.6 L555.2 372.5 L559.3 371.3 L563.7 370.1 L568.1 368.9 L572.4 367.7 L576.5 366.6 L580.4 365.6 L584.1 364.7 L587.6 363.8 L590.9 363.1 L593.9 362.4 L596.8 361.8 L599.5 361.2 L602.0 360.8 L604.3 360.4 L606.4 360.1 L608.2 359.9 L609.9 359.8 L611.4 359.7 L612.7 359.8 L614.0 359.8 L615.2 359.9 L616.5 360.0 L617.7 360.2 L619.0 360.3 L620.2 360.5 L621.4 360.8 L622.6 361.0 L623.9 361.3 L625.1 361.6 L626.2 361.9 L627.4 362.3 L628.6 362.7 L629.8 363.1 L630.9 363.5 L632.1 364.0 L633.2 364.5 L634.3 365.0 L635.4 365.6 L636.4 366.1 L637.4 366.7 L638.4 367.4 L639.3 368.0 L640.3 368.7 L641.2 369.4 L642.0 370.2 L642.9 370.9 L643.7 371.7 L644.5 372.6 L645.3 373.4 L646.0 374.3 L646.7 375.2 L647.4 376.1 L648.1 377.1 L648.8 378.0 L649.4 379.0 L650.1 379.9 L650.7 380.9 L651.3 381.9 L652.0 382.9 L652.6 384.0 L653.2 385.0 L653.8 386.1 L654.3 387.1 L654.9 388.2 L655.4 389.3 L656.0 390.4 L656.5 391.6 L657.0 392.7 L657.5 393.7 L658.0 394.8 L658.5 395.8 L658.9 396.8 L659.4 397.7 L659.8 398.7 L660.2 399.6 L660.6 400.5 L661.0 401.3 L661.3 402.1 L661.7 402.9 L662.0 403.7 L662.3 404.4 L662.6 405.2 L662.9 405.8 L663.2 406.5 L663.4 407.2 L663.7 407.8 L663.9 408.4 L664.2 409.0 L664.4 409.6 L664.6 410.2 L664.8 410.7 L665.0 411.2 L665.2 411.8 L665.3 412.2 L665.5 412.7 L665.7 413.2 L665.8 413.6 L665.9 414.0 L666.1 414.5 L666.2 414.8 L666.3 415.2 L666.4 415.5 L666.5 415.8 L666.6 416.1 L666.6 416.4 L666.7 416.6 L666.8 416.8 L666.8 417.0 L666.9 417.1 L666.9 417.2 L667.0 417.3 L667.0 417.4 L667.0 417.5 L667.0 417.5" stroke="#00a300" stroke-width="1.05" fill="none" />
<path d="M272.0 288.8 L273.4 288.6 L275.1 288.4 L276.8 288.3 L278.5 288.1 L280.2 287.9 L281.9 287.8 L283.7 287.6 L285.5 287.5 L287.3 287.4 L289.2 287.3 L291.0 287.2 L292.7 287.2 L294.4 287.1 L296.0 287.1 L297.5 287.1 L299.0 287.1 L300.5 287.2 L301.9 287.2 L303.2 287.3 L304.5 287.5 L305.7 287.6 L306.9 287.8 L308.0 287.9 L309.0 288.1 L310.0 288.4 L311.0 288.6 L311.9 288.9 L312.8 289.1 L313.7 289.4 L314.5 289.7 L315.4 290.0 L316.2 290.2 L317.0 290.5 L317.8 290.8 L318.5 291.1 L319.3 291.4 L320.0 291.8 L320.7 292.1 L321.4 292.4 L322.0 292.7 L322.7 293.1 L323.3 293.4 L324.1 293.8 L324.9 294.3 L325.9 294.9 L327.1 295.5 L328.3 296.2 L329.7 297.0 L331.2 297.8 L332.8 298.7 L334.6 299.7 L336.4 300.7 L338.4 301.8 L340.6 303.0 L342.8 304.3 L345.2 305.6 L347.7 307.0 L350.3 308.5 L353.1 310.1 L356.0 311.8 L359.1 313.6 L362.4 315.6 L365.8 317.6 L369.4 319.8 L373.2 322.1 L377.1 324.5 L381.1 327.1 L385.4 329.7 L389.8 332.5 L394.3 335.4 L399.0 338.4 L403.9 341.6 L408.9 344.8 L414.1 348.2 L419.0 351.4 L423.7 354.4 L428.1 357.3 L432.3 360.0 L433.0 360.4" stroke="#1414ee" stroke-width="1.8" fill="none" />
<circle cx="273.5" cy="288.6" r="1.7" fill="#1a1ae6"/>
<circle cx="308.2" cy="288.0" r="1.7" fill="#1a1ae6"/>
<circle cx="345.5" cy="305.8" r="1.7" fill="#1a1ae6"/>
<circle cx="376.3" cy="324.0" r="1.7" fill="#1a1ae6"/>
<circle cx="400.3" cy="339.3" r="1.7" fill="#1a1ae6"/>
<circle cx="431.8" cy="359.7" r="1.7" fill="#1a1ae6"/>
<polyline points="254.0,242.0 271.0,340.0" fill="none" stroke="#00e5ff" stroke-width="1.1" />
<rect x="243.6" y="109.9" width="5.5" height="4.2" fill="#ff9292" transform="rotate(91 246.4 112.0)"/>
<rect x="243.2" y="142.9" width="5.5" height="4.2" fill="#ff9292" transform="rotate(91 245.9 145.0)"/>
<rect x="242.6" y="175.9" width="5.5" height="4.2" fill="#ff9292" transform="rotate(91 245.4 178.0)"/>
<rect x="241.9" y="208.9" width="5.5" height="4.2" fill="#ff9292" transform="rotate(91 244.7 211.0)"/>
<rect x="241.0" y="241.9" width="5.5" height="4.2" fill="#ff9292" transform="rotate(92 243.8 244.0)"/>
<rect x="240.6" y="274.7" width="5.5" height="4.2" fill="#ff9292" transform="rotate(86 243.4 276.8)"/>
<rect x="250.2" y="304.6" width="5.5" height="4.2" fill="#ff9292" transform="rotate(59 253.0 306.7)"/>
<rect x="270.0" y="329.8" width="5.5" height="4.2" fill="#ff9292" transform="rotate(40 272.7 331.9)"/>
<rect x="296.3" y="349.5" width="5.5" height="4.2" fill="#ff9292" transform="rotate(37 299.0 351.6)"/>
<rect x="322.6" y="369.6" width="5.5" height="4.2" fill="#ff9292" transform="rotate(40 325.3 371.7)"/>
<rect x="345.0" y="394.5" width="5.5" height="4.2" fill="#ff9292" transform="rotate(55 347.7 396.6)"/>
<rect x="363.5" y="421.9" width="5.5" height="4.2" fill="#ff9292" transform="rotate(55 366.3 424.0)"/>
<rect x="382.7" y="448.6" width="5.5" height="4.2" fill="#ff9292" transform="rotate(54 385.5 450.7)"/>
<rect x="403.2" y="473.5" width="5.5" height="4.2" fill="#ff9292" transform="rotate(39 406.0 475.6)"/>
<rect x="431.9" y="486.9" width="5.5" height="4.2" fill="#ff9292" transform="rotate(12 434.6 489.0)"/>
<rect x="463.4" y="486.5" width="5.5" height="4.2" fill="#ff9292" transform="rotate(-13 466.2 488.6)"/>
<rect x="494.7" y="476.7" width="5.5" height="4.2" fill="#ff9292" transform="rotate(-19 497.4 478.8)"/>
<rect x="525.7" y="465.7" width="5.5" height="4.2" fill="#ff9292" transform="rotate(-20 528.5 467.8)"/>
<rect x="556.8" y="454.6" width="5.5" height="4.2" fill="#ff9292" transform="rotate(-20 559.6 456.7)"/>
<rect x="587.8" y="443.3" width="5.5" height="4.2" fill="#ff9292" transform="rotate(-20 590.6 445.4)"/>
<rect x="618.9" y="432.1" width="5.5" height="4.2" fill="#ff9292" transform="rotate(-20 621.6 434.2)"/>
<rect x="649.9" y="420.9" width="5.5" height="4.2" fill="#ff9292" transform="rotate(-20 652.6 423.0)"/>
<rect x="680.9" y="409.6" width="5.5" height="4.2" fill="#ff9292" transform="rotate(-20 683.7 411.7)"/>
<rect x="712.0" y="398.4" width="5.5" height="4.2" fill="#ff9292" transform="rotate(-20 714.7 400.5)"/>
<rect x="287.7" y="282.6" width="5.5" height="4.2" fill="#ff9292" transform="rotate(-2 290.5 284.7)"/>
<rect x="321.0" y="288.7" width="5.5" height="4.2" fill="#ff9292" transform="rotate(29 323.8 290.8)"/>
<rect x="349.9" y="304.8" width="5.5" height="4.2" fill="#ff9292" transform="rotate(30 352.7 306.9)"/>
<rect x="378.3" y="321.9" width="5.5" height="4.2" fill="#ff9292" transform="rotate(32 381.0 324.0)"/>
<rect x="406.1" y="339.7" width="5.5" height="4.2" fill="#ff9292" transform="rotate(33 408.9 341.8)"/>
<rect x="433.8" y="357.7" width="5.5" height="4.2" fill="#ff9292" transform="rotate(33 436.5 359.8)"/>
<rect x="461.6" y="375.1" width="5.5" height="4.2" fill="#ff9292" transform="rotate(29 464.3 377.2)"/>
<rect x="491.4" y="382.9" width="5.5" height="4.2" fill="#ff9292" transform="rotate(-7 494.1 385.0)"/>
<rect x="523.2" y="375.8" width="5.5" height="4.2" fill="#ff9292" transform="rotate(-15 526.0 377.9)"/>
<rect x="555.0" y="367.1" width="5.5" height="4.2" fill="#ff9292" transform="rotate(-16 557.8 369.2)"/>
<rect x="587.1" y="358.6" width="5.5" height="4.2" fill="#ff9292" transform="rotate(-13 589.8 360.7)"/>
<rect x="620.8" y="356.5" width="5.5" height="4.2" fill="#ff9292" transform="rotate(13 623.5 358.6)"/>
<rect x="648.8" y="375.6" width="5.5" height="4.2" fill="#ff9292" transform="rotate(56 651.6 377.7)"/>
<rect x="663.6" y="405.6" width="5.5" height="4.2" fill="#ff9292" transform="rotate(69 666.3 407.7)"/>
<polyline points="279.8,271.7 280.2,286.8" fill="none" stroke="#ff9292" stroke-width="2.2" />
<polyline points="336.0,283.0 328.5,295.6" fill="none" stroke="#ff9292" stroke-width="2.2" />
<polyline points="466.7,365.2 459.6,377.9" fill="none" stroke="#ff9292" stroke-width="2.2" />
<polyline points="508.4,370.3 513.5,386.4" fill="none" stroke="#ff9292" stroke-width="2.2" />
<polyline points="593.0,346.7 597.3,362.3" fill="none" stroke="#ff9292" stroke-width="2.2" />
<polyline points="671.0,380.8 656.9,387.9" fill="none" stroke="#ff9292" stroke-width="2.2" />
<rect x="278.5" y="235" width="4" height="2.6" fill="#00a300" />
<rect x="283.3" y="235" width="5" height="2.6" fill="#00a300" />
<rect x="288.3" y="235" width="2" height="2.6" fill="#00a300" />
<rect x="290.3" y="235" width="4" height="2.6" fill="#00a300" />
<rect x="294.3" y="235" width="6" height="2.6" fill="#00a300" />
<rect x="301.1" y="235" width="2" height="2.6" fill="#00a300" />
<rect x="303.1" y="235" width="5" height="2.6" fill="#00a300" />
<rect x="280.5" y="239.0" width="2" height="2.6" fill="#00a300" />
<rect x="283.3" y="239.0" width="2" height="2.6" fill="#00a300" />
<rect x="286.5" y="239.0" width="2" height="2.6" fill="#00a300" />
<rect x="288.5" y="239.0" width="3" height="2.6" fill="#00a300" />
<rect x="291.5" y="239.0" width="6" height="2.6" fill="#00a300" />
<rect x="298.7" y="239.0" width="2" height="2.6" fill="#00a300" />
<rect x="301.5" y="239.0" width="2" height="2.6" fill="#00a300" />
<rect x="304.3" y="239.0" width="2.1999999999999886" height="2.6" fill="#00a300" />
<rect x="284.5" y="242.0" width="3" height="2.5" fill="#00a300" />
<rect x="287.5" y="242.0" width="6" height="2.5" fill="#00a300" />
<rect x="294.5" y="242.0" width="6" height="2.5" fill="#00a300" />
<rect x="301.3" y="242.0" width="1.1999999999999886" height="2.5" fill="#00a300" />
<rect x="346" y="283.5" width="4" height="2.6" fill="#00a300" />
<rect x="350" y="283.5" width="6" height="2.6" fill="#00a300" />
<rect x="356" y="283.5" width="6" height="2.6" fill="#00a300" />
<rect x="362" y="283.5" width="6" height="2.6" fill="#00a300" />
<rect x="368.8" y="283.5" width="5" height="2.6" fill="#00a300" />
<rect x="375.0" y="283.5" width="1.0" height="2.6" fill="#00a300" />
<rect x="348" y="287.5" width="6" height="2.6" fill="#00a300" />
<rect x="355.2" y="287.5" width="4" height="2.6" fill="#00a300" />
<rect x="360.2" y="287.5" width="3" height="2.6" fill="#00a300" />
<rect x="364.0" y="287.5" width="3" height="2.6" fill="#00a300" />
<rect x="367.0" y="287.5" width="6" height="2.6" fill="#00a300" />
<rect x="352" y="290.5" width="6" height="2.5" fill="#00a300" />
<rect x="359.2" y="290.5" width="4" height="2.5" fill="#00a300" />
<rect x="364.4" y="290.5" width="4" height="2.5" fill="#00a300" />
<rect x="368.4" y="290.5" width="1.6000000000000227" height="2.5" fill="#00a300" />
<rect x="298" y="319.5" width="3" height="2.6" fill="#00a300" />
<rect x="302.0" y="319.5" width="3" height="2.6" fill="#00a300" />
<rect x="306.2" y="319.5" width="5" height="2.6" fill="#00a300" />
<rect x="311.2" y="319.5" width="2" height="2.6" fill="#00a300" />
<rect x="314.2" y="319.5" width="4" height="2.6" fill="#00a300" />
<rect x="319.2" y="319.5" width="6" height="2.6" fill="#00a300" />
<rect x="326.4" y="319.5" width="1.6000000000000227" height="2.6" fill="#00a300" />
<rect x="300" y="323.5" width="2" height="2.6" fill="#00a300" />
<rect x="302" y="323.5" width="4" height="2.6" fill="#00a300" />
<rect x="307.2" y="323.5" width="2" height="2.6" fill="#00a300" />
<rect x="309.2" y="323.5" width="4" height="2.6" fill="#00a300" />
<rect x="314.4" y="323.5" width="4" height="2.6" fill="#00a300" />
<rect x="319.6" y="323.5" width="4" height="2.6" fill="#00a300" />
<rect x="323.6" y="323.5" width="2.400000000000034" height="2.6" fill="#00a300" />
<rect x="304" y="326.5" width="3" height="2.5" fill="#00a300" />
<rect x="307" y="326.5" width="5" height="2.5" fill="#00a300" />
<rect x="312" y="326.5" width="3" height="2.5" fill="#00a300" />
<rect x="316.0" y="326.5" width="3" height="2.5" fill="#00a300" />
<rect x="319.8" y="326.5" width="2.1999999999999886" height="2.5" fill="#00a300" />
<rect x="353" y="361" width="5" height="2.6" fill="#00a300" />
<rect x="358" y="361" width="3" height="2.6" fill="#00a300" />
<rect x="362.2" y="361" width="5" height="2.6" fill="#00a300" />
<rect x="368.2" y="361" width="3" height="2.6" fill="#00a300" />
<rect x="372.4" y="361" width="6" height="2.6" fill="#00a300" />
<rect x="379.4" y="361" width="3.6000000000000227" height="2.6" fill="#00a300" />
<rect x="355" y="365.0" width="5" height="2.6" fill="#00a300" />
<rect x="360.8" y="365.0" width="3" height="2.6" fill="#00a300" />
<rect x="363.8" y="365.0" width="3" height="2.6" fill="#00a300" />
<rect x="367.6" y="365.0" width="3" height="2.6" fill="#00a300" />
<rect x="371.4" y="365.0" width="2" height="2.6" fill="#00a300" />
<rect x="374.6" y="365.0" width="6" height="2.6" fill="#00a300" />
<rect x="359" y="368.0" width="4" height="2.5" fill="#00a300" />
<rect x="364.0" y="368.0" width="2" height="2.5" fill="#00a300" />
<rect x="366.8" y="368.0" width="5" height="2.5" fill="#00a300" />
<rect x="372.8" y="368.0" width="4.199999999999989" height="2.5" fill="#00a300" />
<rect x="437" y="326.3" width="3" height="2.6" fill="#00a300" />
<rect x="440" y="326.3" width="5" height="2.6" fill="#00a300" />
<rect x="446.2" y="326.3" width="5" height="2.6" fill="#00a300" />
<rect x="452.4" y="326.3" width="5" height="2.6" fill="#00a300" />
<rect x="457.4" y="326.3" width="5" height="2.6" fill="#00a300" />
<rect x="463.6" y="326.3" width="2" height="2.6" fill="#00a300" />
<rect x="466.4" y="326.3" width="0.6000000000000227" height="2.6" fill="#00a300" />
<rect x="439" y="330.3" width="5" height="2.6" fill="#00a300" />
<rect x="444.8" y="330.3" width="2" height="2.6" fill="#00a300" />
<rect x="447.8" y="330.3" width="6" height="2.6" fill="#00a300" />
<rect x="453.8" y="330.3" width="2" height="2.6" fill="#00a300" />
<rect x="455.8" y="330.3" width="6" height="2.6" fill="#00a300" />
<rect x="462.6" y="330.3" width="2.3999999999999773" height="2.6" fill="#00a300" />
<rect x="443" y="333.3" width="4" height="2.5" fill="#00a300" />
<rect x="447" y="333.3" width="2" height="2.5" fill="#00a300" />
<rect x="449.8" y="333.3" width="6" height="2.5" fill="#00a300" />
<rect x="457.0" y="333.3" width="3" height="2.5" fill="#00a300" />
<rect x="522" y="322" width="4" height="2.6" fill="#00a300" />
<rect x="527.0" y="322" width="5" height="2.6" fill="#00a300" />
<rect x="532.0" y="322" width="2" height="2.6" fill="#00a300" />
<rect x="535.2" y="322" width="5" height="2.6" fill="#00a300" />
<rect x="541.4" y="322" width="5" height="2.6" fill="#00a300" />
<rect x="547.4" y="322" width="2" height="2.6" fill="#00a300" />
<rect x="550.2" y="322" width="1.7999999999999545" height="2.6" fill="#00a300" />
<rect x="524" y="326.0" width="4" height="2.6" fill="#00a300" />
<rect x="529.2" y="326.0" width="3" height="2.6" fill="#00a300" />
<rect x="532.2" y="326.0" width="3" height="2.6" fill="#00a300" />
<rect x="536.2" y="326.0" width="3" height="2.6" fill="#00a300" />
<rect x="539.2" y="326.0" width="6" height="2.6" fill="#00a300" />
<rect x="546.2" y="326.0" width="2" height="2.6" fill="#00a300" />
<rect x="549.2" y="326.0" width="0.7999999999999545" height="2.6" fill="#00a300" />
<rect x="528" y="329.0" width="3" height="2.5" fill="#00a300" />
<rect x="532.0" y="329.0" width="3" height="2.5" fill="#00a300" />
<rect x="536.0" y="329.0" width="3" height="2.5" fill="#00a300" />
<rect x="539.8" y="329.0" width="3" height="2.5" fill="#00a300" />
<rect x="544.0" y="329.0" width="2.0" height="2.5" fill="#00a300" />
<rect x="611.4" y="293.6" width="6" height="2.6" fill="#00a300" />
<rect x="618.6" y="293.6" width="4" height="2.6" fill="#00a300" />
<rect x="622.6" y="293.6" width="2" height="2.6" fill="#00a300" />
<rect x="625.6" y="293.6" width="5" height="2.6" fill="#00a300" />
<rect x="631.6" y="293.6" width="3" height="2.6" fill="#00a300" />
<rect x="635.6" y="293.6" width="5" height="2.6" fill="#00a300" />
<rect x="613.4" y="297.6" width="4" height="2.6" fill="#00a300" />
<rect x="617.4" y="297.6" width="3" height="2.6" fill="#00a300" />
<rect x="620.4" y="297.6" width="3" height="2.6" fill="#00a300" />
<rect x="624.6" y="297.6" width="3" height="2.6" fill="#00a300" />
<rect x="628.6" y="297.6" width="3" height="2.6" fill="#00a300" />
<rect x="632.8" y="297.6" width="6" height="2.6" fill="#00a300" />
<rect x="638.8" y="297.6" width="0.599999999999909" height="2.6" fill="#00a300" />
<rect x="617.4" y="300.6" width="2" height="2.5" fill="#00a300" />
<rect x="619.4" y="300.6" width="5" height="2.5" fill="#00a300" />
<rect x="625.2" y="300.6" width="5" height="2.5" fill="#00a300" />
<rect x="631.0" y="300.6" width="4.400000000000091" height="2.5" fill="#00a300" />
<rect x="675" y="348.6" width="2" height="2.6" fill="#00a300" />
<rect x="678.2" y="348.6" width="5" height="2.6" fill="#00a300" />
<rect x="684.4" y="348.6" width="2" height="2.6" fill="#00a300" />
<rect x="687.2" y="348.6" width="3" height="2.6" fill="#00a300" />
<rect x="691.0" y="348.6" width="2" height="2.6" fill="#00a300" />
<rect x="693.8" y="348.6" width="6" height="2.6" fill="#00a300" />
<rect x="701.0" y="348.6" width="3" height="2.6" fill="#00a300" />
<rect x="677" y="352.6" width="4" height="2.6" fill="#00a300" />
<rect x="681.8" y="352.6" width="6" height="2.6" fill="#00a300" />
<rect x="688.6" y="352.6" width="2" height="2.6" fill="#00a300" />
<rect x="690.6" y="352.6" width="2" height="2.6" fill="#00a300" />
<rect x="693.4" y="352.6" width="5" height="2.6" fill="#00a300" />
<rect x="699.2" y="352.6" width="3" height="2.6" fill="#00a300" />
<rect x="702.2" y="352.6" width="0.8000000000001819" height="2.6" fill="#00a300" />
<rect x="681" y="355.6" width="4" height="2.5" fill="#00a300" />
<rect x="685.8" y="355.6" width="6" height="2.5" fill="#00a300" />
<rect x="692.8" y="355.6" width="4" height="2.5" fill="#00a300" />
<rect x="698.0" y="355.6" width="1.0" height="2.5" fill="#00a300" />
<rect x="592" y="395.3" width="4" height="2.6" fill="#00a300" />
<rect x="597.2" y="395.3" width="6" height="2.6" fill="#00a300" />
<rect x="604.4" y="395.3" width="6" height="2.6" fill="#00a300" />
<rect x="611.2" y="395.3" width="6" height="2.6" fill="#00a300" />
<rect x="618.0" y="395.3" width="4.0" height="2.6" fill="#00a300" />
<rect x="594" y="399.3" width="5" height="2.6" fill="#00a300" />
<rect x="599.8" y="399.3" width="6" height="2.6" fill="#00a300" />
<rect x="605.8" y="399.3" width="3" height="2.6" fill="#00a300" />
<rect x="609.6" y="399.3" width="3" height="2.6" fill="#00a300" />
<rect x="613.8" y="399.3" width="6" height="2.6" fill="#00a300" />
<rect x="619.8" y="399.3" width="0.20000000000004547" height="2.6" fill="#00a300" />
<rect x="598" y="402.3" width="4" height="2.5" fill="#00a300" />
<rect x="603.2" y="402.3" width="2" height="2.5" fill="#00a300" />
<rect x="605.2" y="402.3" width="3" height="2.5" fill="#00a300" />
<rect x="609.0" y="402.3" width="4" height="2.5" fill="#00a300" />
<rect x="613.0" y="402.3" width="2" height="2.5" fill="#00a300" />
<rect x="419.5" y="423.8" width="6" height="2.6" fill="#00a300" />
<rect x="425.5" y="423.8" width="2" height="2.6" fill="#00a300" />
<rect x="428.7" y="423.8" width="4" height="2.6" fill="#00a300" />
<rect x="433.5" y="423.8" width="4" height="2.6" fill="#00a300" />
<rect x="438.7" y="423.8" width="6" height="2.6" fill="#00a300" />
<rect x="445.9" y="423.8" width="3.6000000000000227" height="2.6" fill="#00a300" />
<rect x="421.5" y="427.8" width="6" height="2.6" fill="#00a300" />
<rect x="428.5" y="427.8" width="6" height="2.6" fill="#00a300" />
<rect x="435.3" y="427.8" width="5" height="2.6" fill="#00a300" />
<rect x="441.1" y="427.8" width="5" height="2.6" fill="#00a300" />
<rect x="446.1" y="427.8" width="1.3999999999999773" height="2.6" fill="#00a300" />
<rect x="425.5" y="430.8" width="4" height="2.5" fill="#00a300" />
<rect x="429.5" y="430.8" width="3" height="2.5" fill="#00a300" />
<rect x="433.7" y="430.8" width="2" height="2.5" fill="#00a300" />
<rect x="436.5" y="430.8" width="4" height="2.5" fill="#00a300" />
<rect x="440.5" y="430.8" width="3" height="2.5" fill="#00a300" />
<rect x="506" y="423.6" width="3" height="2.6" fill="#00a300" />
<rect x="510.0" y="423.6" width="3" height="2.6" fill="#00a300" />
<rect x="514.2" y="423.6" width="3" height="2.6" fill="#00a300" />
<rect x="517.2" y="423.6" width="5" height="2.6" fill="#00a300" />
<rect x="523.4" y="423.6" width="3" height="2.6" fill="#00a300" />
<rect x="527.2" y="423.6" width="3" height="2.6" fill="#00a300" />
<rect x="531.4" y="423.6" width="4.599999999999909" height="2.6" fill="#00a300" />
<rect x="508" y="427.6" width="4" height="2.6" fill="#00a300" />
<rect x="513.2" y="427.6" width="3" height="2.6" fill="#00a300" />
<rect x="517.2" y="427.6" width="4" height="2.6" fill="#00a300" />
<rect x="521.2" y="427.6" width="4" height="2.6" fill="#00a300" />
<rect x="525.2" y="427.6" width="4" height="2.6" fill="#00a300" />
<rect x="530.4" y="427.6" width="3.599999999999909" height="2.6" fill="#00a300" />
<rect x="512" y="430.6" width="5" height="2.5" fill="#00a300" />
<rect x="518.0" y="430.6" width="6" height="2.5" fill="#00a300" />
<rect x="525.0" y="430.6" width="5.0" height="2.5" fill="#00a300" />
<path d="M238.4 507.20000000000005 L238.4 557.2 L288.9 557.2" stroke="#000" stroke-width="1.1" fill="none" />
<rect x="234.20000000000002" y="552.4000000000001" width="9.5" height="9.3" fill="none" stroke="#000" stroke-width="1.1" />
<path d="M240.0 490.20000000000005 L246.20000000000002 495.70000000000005 L252.4 490.20000000000005 M246.20000000000002 495.70000000000005 L246.20000000000002 502.50000000000006" stroke="#000" stroke-width="1.1" fill="none" />
<path d="M293.0 543.2 L306.0 556.2 M306.0 543.2 L293.0 556.2" stroke="#000" stroke-width="1.1" fill="none" />
</g>
<polyline points="1005.0,156.0 1083.0,131.0" fill="none" stroke="#00a300" stroke-width="1" />
<defs><clipPath id="clipR"><rect x="700" y="135" width="457" height="431"/></clipPath></defs>
<g clip-path="url(#clipR)">
<path d="M760.02 251.7 L760.02 441.7 M783.75 251.7 L783.75 441.7 M807.47 251.7 L807.47 441.7 M831.19 251.7 L831.19 441.7 M854.92 251.7 L854.92 441.7 M878.64 251.7 L878.64 441.7 M902.36 251.7 L902.36 441.7 M926.09 251.7 L926.09 441.7 M949.81 251.7 L949.81 441.7 M973.54 251.7 L973.54 441.7 M997.26 251.7 L997.26 441.7 M1020.98 251.7 L1020.98 441.7 M1044.71 251.7 L1044.71 441.7 M1068.43 251.7 L1068.43 441.7 M1092.15 251.7 L1092.15 441.7 M1115.88 251.7 L1115.88 441.7 M736.3 275.45 L1139.6 275.45 M736.3 299.20 L1139.6 299.20 M736.3 322.95 L1139.6 322.95 M736.3 346.70 L1139.6 346.70 M736.3 370.45 L1139.6 370.45 M736.3 394.20 L1139.6 394.20 M736.3 417.95 L1139.6 417.95" stroke="#808080" stroke-width="1.35" fill="none" />
<path d="M783.75 441.7 L783.75 451.2 M807.47 441.7 L807.47 451.2 M831.19 441.7 L831.19 451.2 M854.92 441.7 L854.92 451.2 M878.64 441.7 L878.64 451.2 M902.36 441.7 L902.36 451.2 M926.09 441.7 L926.09 451.2 M949.81 441.7 L949.81 451.2 M973.54 441.7 L973.54 451.2 M997.26 441.7 L997.26 451.2 M1020.98 441.7 L1020.98 451.2 M1044.71 441.7 L1044.71 451.2 M1068.43 441.7 L1068.43 451.2 M1092.15 441.7 L1092.15 451.2" stroke="#000000" stroke-width="1.3" fill="none" />
<rect x="733.3" y="248.8" width="6" height="2.4" fill="#ff7a7a" />
<rect x="757.0235294117647" y="248.8" width="6" height="2.4" fill="#ff7a7a" />
<rect x="780.7470588235294" y="248.8" width="6" height="2.4" fill="#ff7a7a" />
<rect x="804.470588235294" y="248.8" width="6" height="2.4" fill="#ff7a7a" />
<rect x="828.1941176470588" y="248.8" width="6" height="2.4" fill="#ff7a7a" />
<rect x="851.9176470588235" y="248.8" width="6" height="2.4" fill="#ff7a7a" />
<rect x="875.6411764705881" y="248.8" width="6" height="2.4" fill="#ff7a7a" />
<rect x="899.3647058823528" y="248.8" width="6" height="2.4" fill="#ff7a7a" />
<rect x="923.0882352941176" y="248.8" width="6" height="2.4" fill="#ff7a7a" />
<rect x="946.8117647058823" y="248.8" width="6" height="2.4" fill="#ff7a7a" />
<rect x="970.535294117647" y="248.8" width="6" height="2.4" fill="#ff7a7a" />
<rect x="994.2588235294116" y="248.8" width="6" height="2.4" fill="#ff7a7a" />
<rect x="1017.9823529411764" y="248.8" width="6" height="2.4" fill="#ff7a7a" />
<rect x="1041.705882352941" y="248.8" width="6" height="2.4" fill="#ff7a7a" />
<rect x="1065.4294117647057" y="248.8" width="6" height="2.4" fill="#ff7a7a" />
<rect x="1089.1529411764704" y="248.8" width="6" height="2.4" fill="#ff7a7a" />
<rect x="1112.8764705882352" y="248.8" width="6" height="2.4" fill="#ff7a7a" />
<rect x="1136.6" y="248.8" width="6" height="2.4" fill="#ff7a7a" />
<rect x="730.8" y="250.5" width="5.5" height="2.6" fill="#ff7a7a" />
<rect x="1139.8" y="250.5" width="5.5" height="2.6" fill="#ff7a7a" />
<rect x="730.8" y="274.25" width="5.5" height="2.6" fill="#ff7a7a" />
<rect x="1139.8" y="274.25" width="5.5" height="2.6" fill="#ff7a7a" />
<rect x="730.8" y="298.0" width="5.5" height="2.6" fill="#ff7a7a" />
<rect x="1139.8" y="298.0" width="5.5" height="2.6" fill="#ff7a7a" />
<rect x="730.8" y="321.75" width="5.5" height="2.6" fill="#ff7a7a" />
<rect x="1139.8" y="321.75" width="5.5" height="2.6" fill="#ff7a7a" />
<rect x="730.8" y="345.5" width="5.5" height="2.6" fill="#ff7a7a" />
<rect x="1139.8" y="345.5" width="5.5" height="2.6" fill="#ff7a7a" />
<rect x="730.8" y="369.25" width="5.5" height="2.6" fill="#ff7a7a" />
<rect x="1139.8" y="369.25" width="5.5" height="2.6" fill="#ff7a7a" />
<rect x="730.8" y="393.0" width="5.5" height="2.6" fill="#ff7a7a" />
<rect x="1139.8" y="393.0" width="5.5" height="2.6" fill="#ff7a7a" />
<rect x="730.8" y="416.75" width="5.5" height="2.6" fill="#ff7a7a" />
<rect x="1139.8" y="416.75" width="5.5" height="2.6" fill="#ff7a7a" />
<rect x="730.8" y="440.5" width="5.5" height="2.6" fill="#ff7a7a" />
<rect x="1139.8" y="440.5" width="5.5" height="2.6" fill="#ff7a7a" />
<rect x="735.8" y="252.4" width="1.1" height="1.3" fill="#ff7a7a" />
<rect x="735.8" y="442.4" width="1.1" height="1.2" fill="#ff7a7a" />
<rect x="741.7299999999999" y="252.4" width="1.1" height="1.3" fill="#ff7a7a" />
<rect x="741.7299999999999" y="442.4" width="1.1" height="1.2" fill="#ff7a7a" />
<rect x="747.66" y="252.4" width="1.1" height="1.3" fill="#ff7a7a" />
<rect x="747.66" y="442.4" width="1.1" height="1.2" fill="#ff7a7a" />
<rect x="753.5899999999999" y="252.4" width="1.1" height="1.3" fill="#ff7a7a" />
<rect x="753.5899999999999" y="442.4" width="1.1" height="1.2" fill="#ff7a7a" />
<rect x="759.52" y="252.4" width="1.1" height="1.3" fill="#ff7a7a" />
<rect x="759.52" y="442.4" width="1.1" height="1.2" fill="#ff7a7a" />
<rect x="765.4499999999999" y="252.4" width="1.1" height="1.3" fill="#ff7a7a" />
<rect x="765.4499999999999" y="442.4" width="1.1" height="1.2" fill="#ff7a7a" />
<rect x="771.38" y="252.4" width="1.1" height="1.3" fill="#ff7a7a" />
<rect x="771.38" y="442.4" width="1.1" height="1.2" fill="#ff7a7a" />
<rect x="777.31" y="252.4" width="1.1" height="1.3" fill="#ff7a7a" />
<rect x="777.31" y="442.4" width="1.1" height="1.2" fill="#ff7a7a" />
<rect x="783.24" y="252.4" width="1.1" height="1.3" fill="#ff7a7a" />
<rect x="783.24" y="442.4" width="1.1" height="1.2" fill="#ff7a7a" />
<rect x="789.17" y="252.4" width="1.1" height="1.3" fill="#ff7a7a" />
<rect x="789.17" y="442.4" width="1.1" height="1.2" fill="#ff7a7a" />
<rect x="795.0999999999999" y="252.4" width="1.1" height="1.3" fill="#ff7a7a" />
<rect x="795.0999999999999" y="442.4" width="1.1" height="1.2" fill="#ff7a7a" />
<rect x="801.03" y="252.4" width="1.1" height="1.3" fill="#ff7a7a" />
<rect x="801.03" y="442.4" width="1.1" height="1.2" fill="#ff7a7a" />
<rect x="806.9599999999999" y="252.4" width="1.1" height="1.3" fill="#ff7a7a" />
<rect x="806.9599999999999" y="442.4" width="1.1" height="1.2" fill="#ff7a7a" />
<rect x="812.89" y="252.4" width="1.1" height="1.3" fill="#ff7a7a" />
<rect x="812.89" y="442.4" width="1.1" height="1.2" fill="#ff7a7a" />
<rect x="818.8199999999999" y="252.4" width="1.1" height="1.3" fill="#ff7a7a" />
<rect x="818.8199999999999" y="442.4" width="1.1" height="1.2" fill="#ff7a7a" />
<rect x="824.75" y="252.4" width="1.1" height="1.3" fill="#ff7a7a" />
<rect x="824.75" y="442.4" width="1.1" height="1.2" fill="#ff7a7a" />
<rect x="830.68" y="252.4" width="1.1" height="1.3" fill="#ff7a7a" />
<rect x="830.68" y="442.4" width="1.1" height="1.2" fill="#ff7a7a" />
<rect x="836.6099999999999" y="252.4" width="1.1" height="1.3" fill="#ff7a7a" />
<rect x="836.6099999999999" y="442.4" width="1.1" height="1.2" fill="#ff7a7a" />
<rect x="842.54" y="252.4" width="1.1" height="1.3" fill="#ff7a7a" />
<rect x="842.54" y="442.4" width="1.1" height="1.2" fill="#ff7a7a" />
<rect x="848.4699999999999" y="252.4" width="1.1" height="1.3" fill="#ff7a7a" />
<rect x="848.4699999999999" y="442.4" width="1.1" height="1.2" fill="#ff7a7a" />
<rect x="854.4" y="252.4" width="1.1" height="1.3" fill="#ff7a7a" />
<rect x="854.4" y="442.4" width="1.1" height="1.2" fill="#ff7a7a" />
<rect x="860.3299999999999" y="252.4" width="1.1" height="1.3" fill="#ff7a7a" />
<rect x="860.3299999999999" y="442.4" width="1.1" height="1.2" fill="#ff7a7a" />
<rect x="866.26" y="252.4" width="1.1" height="1.3" fill="#ff7a7a" />
<rect x="866.26" y="442.4" width="1.1" height="1.2" fill="#ff7a7a" />
<rect x="872.1899999999999" y="252.4" width="1.1" height="1.3" fill="#ff7a7a" />
<rect x="872.1899999999999" y="442.4" width="1.1" height="1.2" fill="#ff7a7a" />
<rect x="878.1199999999999" y="252.4" width="1.1" height="1.3" fill="#ff7a7a" />
<rect x="878.1199999999999" y="442.4" width="1.1" height="1.2" fill="#ff7a7a" />
<rect x="884.05" y="252.4" width="1.1" height="1.3" fill="#ff7a7a" />
<rect x="884.05" y="442.4" width="1.1" height="1.2" fill="#ff7a7a" />
<rect x="889.98" y="252.4" width="1.1" height="1.3" fill="#ff7a7a" />
<rect x="889.98" y="442.4" width="1.1" height="1.2" fill="#ff7a7a" />
<rect x="895.91" y="252.4" width="1.1" height="1.3" fill="#ff7a7a" />
<rect x="895.91" y="442.4" width="1.1" height="1.2" fill="#ff7a7a" />
<rect x="901.8399999999999" y="252.4" width="1.1" height="1.3" fill="#ff7a7a" />
<rect x="901.8399999999999" y="442.4" width="1.1" height="1.2" fill="#ff7a7a" />
<rect x="907.77" y="252.4" width="1.1" height="1.3" fill="#ff7a7a" />
<rect x="907.77" y="442.4" width="1.1" height="1.2" fill="#ff7a7a" />
<rect x="913.6999999999999" y="252.4" width="1.1" height="1.3" fill="#ff7a7a" />
<rect x="913.6999999999999" y="442.4" width="1.1" height="1.2" fill="#ff7a7a" />
<rect x="919.6299999999999" y="252.4" width="1.1" height="1.3" fill="#ff7a7a" />
<rect x="919.6299999999999" y="442.4" width="1.1" height="1.2" fill="#ff7a7a" />
<rect x="925.56" y="252.4" width="1.1" height="1.3" fill="#ff7a7a" />
<rect x="925.56" y="442.4" width="1.1" height="1.2" fill="#ff7a7a" />
<rect x="931.49" y="252.4" width="1.1" height="1.3" fill="#ff7a7a" />
<rect x="931.49" y="442.4" width="1.1" height="1.2" fill="#ff7a7a" />
<rect x="937.42" y="252.4" width="1.1" height="1.3" fill="#ff7a7a" />
<rect x="937.42" y="442.4" width="1.1" height="1.2" fill="#ff7a7a" />
<rect x="943.3499999999999" y="252.4" width="1.1" height="1.3" fill="#ff7a7a" />
<rect x="943.3499999999999" y="442.4" width="1.1" height="1.2" fill="#ff7a7a" />
<rect x="949.28" y="252.4" width="1.1" height="1.3" fill="#ff7a7a" />
<rect x="949.28" y="442.4" width="1.1" height="1.2" fill="#ff7a7a" />
<rect x="955.2099999999999" y="252.4" width="1.1" height="1.3" fill="#ff7a7a" />
<rect x="955.2099999999999" y="442.4" width="1.1" height="1.2" fill="#ff7a7a" />
<rect x="961.1399999999999" y="252.4" width="1.1" height="1.3" fill="#ff7a7a" />
<rect x="961.1399999999999" y="442.4" width="1.1" height="1.2" fill="#ff7a7a" />
<rect x="967.0699999999999" y="252.4" width="1.1" height="1.3" fill="#ff7a7a" />
<rect x="967.0699999999999" y="442.4" width="1.1" height="1.2" fill="#ff7a7a" />
<rect x="973.0" y="252.4" width="1.1" height="1.3" fill="#ff7a7a" />
<rect x="973.0" y="442.4" width="1.1" height="1.2" fill="#ff7a7a" />
<rect x="978.93" y="252.4" width="1.1" height="1.3" fill="#ff7a7a" />
<rect x="978.93" y="442.4" width="1.1" height="1.2" fill="#ff7a7a" />
<rect x="984.8599999999999" y="252.4" width="1.1" height="1.3" fill="#ff7a7a" />
<rect x="984.8599999999999" y="442.4" width="1.1" height="1.2" fill="#ff7a7a" />
<rect x="990.79" y="252.4" width="1.1" height="1.3" fill="#ff7a7a" />
<rect x="990.79" y="442.4" width="1.1" height="1.2" fill="#ff7a7a" />
<rect x="996.7199999999999" y="252.4" width="1.1" height="1.3" fill="#ff7a7a" />
<rect x="996.7199999999999" y="442.4" width="1.1" height="1.2" fill="#ff7a7a" />
<rect x="1002.6499999999999" y="252.4" width="1.1" height="1.3" fill="#ff7a7a" />
<rect x="1002.6499999999999" y="442.4" width="1.1" height="1.2" fill="#ff7a7a" />
<rect x="1008.5799999999999" y="252.4" width="1.1" height="1.3" fill="#ff7a7a" />
<rect x="1008.5799999999999" y="442.4" width="1.1" height="1.2" fill="#ff7a7a" />
<rect x="1014.51" y="252.4" width="1.1" height="1.3" fill="#ff7a7a" />
<rect x="1014.51" y="442.4" width="1.1" height="1.2" fill="#ff7a7a" />
<rect x="1020.4399999999999" y="252.4" width="1.1" height="1.3" fill="#ff7a7a" />
<rect x="1020.4399999999999" y="442.4" width="1.1" height="1.2" fill="#ff7a7a" />
<rect x="1026.37" y="252.4" width="1.1" height="1.3" fill="#ff7a7a" />
<rect x="1026.37" y="442.4" width="1.1" height="1.2" fill="#ff7a7a" />
<rect x="1032.3" y="252.4" width="1.1" height="1.3" fill="#ff7a7a" />
<rect x="1032.3" y="442.4" width="1.1" height="1.2" fill="#ff7a7a" />
<rect x="1038.23" y="252.4" width="1.1" height="1.3" fill="#ff7a7a" />
<rect x="1038.23" y="442.4" width="1.1" height="1.2" fill="#ff7a7a" />
<rect x="1044.1599999999999" y="252.4" width="1.1" height="1.3" fill="#ff7a7a" />
<rect x="1044.1599999999999" y="442.4" width="1.1" height="1.2" fill="#ff7a7a" />
<rect x="1050.09" y="252.4" width="1.1" height="1.3" fill="#ff7a7a" />
<rect x="1050.09" y="442.4" width="1.1" height="1.2" fill="#ff7a7a" />
<rect x="1056.02" y="252.4" width="1.1" height="1.3" fill="#ff7a7a" />
<rect x="1056.02" y="442.4" width="1.1" height="1.2" fill="#ff7a7a" />
<rect x="1061.9499999999998" y="252.4" width="1.1" height="1.3" fill="#ff7a7a" />
<rect x="1061.9499999999998" y="442.4" width="1.1" height="1.2" fill="#ff7a7a" />
<rect x="1067.8799999999999" y="252.4" width="1.1" height="1.3" fill="#ff7a7a" />
<rect x="1067.8799999999999" y="442.4" width="1.1" height="1.2" fill="#ff7a7a" />
<rect x="1073.81" y="252.4" width="1.1" height="1.3" fill="#ff7a7a" />
<rect x="1073.81" y="442.4" width="1.1" height="1.2" fill="#ff7a7a" />
<rect x="1079.74" y="252.4" width="1.1" height="1.3" fill="#ff7a7a" />
<rect x="1079.74" y="442.4" width="1.1" height="1.2" fill="#ff7a7a" />
<rect x="1085.67" y="252.4" width="1.1" height="1.3" fill="#ff7a7a" />
<rect x="1085.67" y="442.4" width="1.1" height="1.2" fill="#ff7a7a" />
<rect x="1091.6" y="252.4" width="1.1" height="1.3" fill="#ff7a7a" />
<rect x="1091.6" y="442.4" width="1.1" height="1.2" fill="#ff7a7a" />
<rect x="1097.53" y="252.4" width="1.1" height="1.3" fill="#ff7a7a" />
<rect x="1097.53" y="442.4" width="1.1" height="1.2" fill="#ff7a7a" />
<rect x="1103.46" y="252.4" width="1.1" height="1.3" fill="#ff7a7a" />
<rect x="1103.46" y="442.4" width="1.1" height="1.2" fill="#ff7a7a" />
<rect x="1109.3899999999999" y="252.4" width="1.1" height="1.3" fill="#ff7a7a" />
<rect x="1109.3899999999999" y="442.4" width="1.1" height="1.2" fill="#ff7a7a" />
<rect x="1115.32" y="252.4" width="1.1" height="1.3" fill="#ff7a7a" />
<rect x="1115.32" y="442.4" width="1.1" height="1.2" fill="#ff7a7a" />
<rect x="1121.25" y="252.4" width="1.1" height="1.3" fill="#ff7a7a" />
<rect x="1121.25" y="442.4" width="1.1" height="1.2" fill="#ff7a7a" />
<rect x="1127.1799999999998" y="252.4" width="1.1" height="1.3" fill="#ff7a7a" />
<rect x="1127.1799999999998" y="442.4" width="1.1" height="1.2" fill="#ff7a7a" />
<rect x="1133.11" y="252.4" width="1.1" height="1.3" fill="#ff7a7a" />
<rect x="1133.11" y="442.4" width="1.1" height="1.2" fill="#ff7a7a" />
<rect x="1139.04" y="252.4" width="1.1" height="1.3" fill="#ff7a7a" />
<rect x="1139.04" y="442.4" width="1.1" height="1.2" fill="#ff7a7a" />
<rect x="737" y="251.2" width="1.2" height="1.1" fill="#ff7a7a" />
<rect x="1138" y="251.2" width="1.2" height="1.1" fill="#ff7a7a" />
<rect x="737" y="257.14" width="1.2" height="1.1" fill="#ff7a7a" />
<rect x="1138" y="257.14" width="1.2" height="1.1" fill="#ff7a7a" />
<rect x="737" y="263.08" width="1.2" height="1.1" fill="#ff7a7a" />
<rect x="1138" y="263.08" width="1.2" height="1.1" fill="#ff7a7a" />
<rect x="737" y="269.02" width="1.2" height="1.1" fill="#ff7a7a" />
<rect x="1138" y="269.02" width="1.2" height="1.1" fill="#ff7a7a" />
<rect x="737" y="274.96" width="1.2" height="1.1" fill="#ff7a7a" />
<rect x="1138" y="274.96" width="1.2" height="1.1" fill="#ff7a7a" />
<rect x="737" y="280.9" width="1.2" height="1.1" fill="#ff7a7a" />
<rect x="1138" y="280.9" width="1.2" height="1.1" fill="#ff7a7a" />
<rect x="737" y="286.84" width="1.2" height="1.1" fill="#ff7a7a" />
<rect x="1138" y="286.84" width="1.2" height="1.1" fill="#ff7a7a" />
<rect x="737" y="292.78" width="1.2" height="1.1" fill="#ff7a7a" />
<rect x="1138" y="292.78" width="1.2" height="1.1" fill="#ff7a7a" />
<rect x="737" y="298.71999999999997" width="1.2" height="1.1" fill="#ff7a7a" />
<rect x="1138" y="298.71999999999997" width="1.2" height="1.1" fill="#ff7a7a" />
<rect x="737" y="304.65999999999997" width="1.2" height="1.1" fill="#ff7a7a" />
<rect x="1138" y="304.65999999999997" width="1.2" height="1.1" fill="#ff7a7a" />
<rect x="737" y="310.6" width="1.2" height="1.1" fill="#ff7a7a" />
<rect x="1138" y="310.6" width="1.2" height="1.1" fill="#ff7a7a" />
<rect x="737" y="316.53999999999996" width="1.2" height="1.1" fill="#ff7a7a" />
<rect x="1138" y="316.53999999999996" width="1.2" height="1.1" fill="#ff7a7a" />
<rect x="737" y="322.48" width="1.2" height="1.1" fill="#ff7a7a" />
<rect x="1138" y="322.48" width="1.2" height="1.1" fill="#ff7a7a" />
<rect x="737" y="328.41999999999996" width="1.2" height="1.1" fill="#ff7a7a" />
<rect x="1138" y="328.41999999999996" width="1.2" height="1.1" fill="#ff7a7a" />
<rect x="737" y="334.36" width="1.2" height="1.1" fill="#ff7a7a" />
<rect x="1138" y="334.36" width="1.2" height="1.1" fill="#ff7a7a" />
<rect x="737" y="340.3" width="1.2" height="1.1" fill="#ff7a7a" />
<rect x="1138" y="340.3" width="1.2" height="1.1" fill="#ff7a7a" />
<rect x="737" y="346.24" width="1.2" height="1.1" fill="#ff7a7a" />
<rect x="1138" y="346.24" width="1.2" height="1.1" fill="#ff7a7a" />
<rect x="737" y="352.18" width="1.2" height="1.1" fill="#ff7a7a" />
<rect x="1138" y="352.18" width="1.2" height="1.1" fill="#ff7a7a" />
<rect x="737" y="358.12" width="1.2" height="1.1" fill="#ff7a7a" />
<rect x="1138" y="358.12" width="1.2" height="1.1" fill="#ff7a7a" />
<rect x="737" y="364.06" width="1.2" height="1.1" fill="#ff7a7a" />
<rect x="1138" y="364.06" width="1.2" height="1.1" fill="#ff7a7a" />
<rect x="737" y="370.0" width="1.2" height="1.1" fill="#ff7a7a" />
<rect x="1138" y="370.0" width="1.2" height="1.1" fill="#ff7a7a" />
<rect x="737" y="375.94" width="1.2" height="1.1" fill="#ff7a7a" />
<rect x="1138" y="375.94" width="1.2" height="1.1" fill="#ff7a7a" />
<rect x="737" y="381.88" width="1.2" height="1.1" fill="#ff7a7a" />
<rect x="1138" y="381.88" width="1.2" height="1.1" fill="#ff7a7a" />
<rect x="737" y="387.82" width="1.2" height="1.1" fill="#ff7a7a" />
<rect x="1138" y="387.82" width="1.2" height="1.1" fill="#ff7a7a" />
<rect x="737" y="393.76" width="1.2" height="1.1" fill="#ff7a7a" />
<rect x="1138" y="393.76" width="1.2" height="1.1" fill="#ff7a7a" />
<rect x="737" y="399.7" width="1.2" height="1.1" fill="#ff7a7a" />
<rect x="1138" y="399.7" width="1.2" height="1.1" fill="#ff7a7a" />
<rect x="737" y="405.64" width="1.2" height="1.1" fill="#ff7a7a" />
<rect x="1138" y="405.64" width="1.2" height="1.1" fill="#ff7a7a" />
<rect x="737" y="411.58000000000004" width="1.2" height="1.1" fill="#ff7a7a" />
<rect x="1138" y="411.58000000000004" width="1.2" height="1.1" fill="#ff7a7a" />
<rect x="737" y="417.52" width="1.2" height="1.1" fill="#ff7a7a" />
<rect x="1138" y="417.52" width="1.2" height="1.1" fill="#ff7a7a" />
<rect x="737" y="423.46000000000004" width="1.2" height="1.1" fill="#ff7a7a" />
<rect x="1138" y="423.46000000000004" width="1.2" height="1.1" fill="#ff7a7a" />
<rect x="737" y="429.4" width="1.2" height="1.1" fill="#ff7a7a" />
<rect x="1138" y="429.4" width="1.2" height="1.1" fill="#ff7a7a" />
<rect x="737" y="435.34000000000003" width="1.2" height="1.1" fill="#ff7a7a" />
<rect x="1138" y="435.34000000000003" width="1.2" height="1.1" fill="#ff7a7a" />
<path d="M760.6 251.7 L760.6 441.7 M785.4 251.7 L785.4 441.7 M819.6 251.7 L819.6 441.7 M931.6 251.7 L931.6 441.7 M970.4 251.7 L970.4 441.7 M1034.2 251.7 L1034.2 441.7 M1084.6 251.7 L1084.6 441.7 M1106.6 251.7 L1106.6 441.7" stroke="#0000ff" stroke-width="1.3" fill="none" />
<rect x="736.3" y="251.7" width="403.29999999999995" height="199.5" fill="none" stroke="#0000ff" stroke-width="1.3" />
<line x1="736.3" y1="441.7" x2="1139.6" y2="441.7" stroke="#0000ff" stroke-width="1.3" />
<rect x="919.1" y="238.1" width="37" height="5.8" fill="#ff7a7a" />
<rect x="921.5" y="239.6" width="1.5" height="2.8" fill="#ffffff" />
<rect x="926" y="239.6" width="1.5" height="2.8" fill="#ffffff" />
<rect x="930" y="239.6" width="1.5" height="2.8" fill="#ffffff" />
<rect x="935" y="239.6" width="1.5" height="2.8" fill="#ffffff" />
<rect x="941" y="239.6" width="1.5" height="2.8" fill="#ffffff" />
<rect x="946" y="239.6" width="1.5" height="2.8" fill="#ffffff" />
<rect x="951" y="239.6" width="1.5" height="2.8" fill="#ffffff" />
<rect x="934.1" y="245.1" width="7.8" height="2.7" fill="#ff7a7a" />
<rect x="727.5" y="342" width="1.4" height="9" fill="#ff7a7a" />
<polyline points="760.6,373.7 783.6,366.9 802.0,358.7 817.3,351.4 826.6,351.0 838.2,354.3 848.6,354.3 860.1,357.7 877.5,361.0 890.2,360.3 909.8,359.5 921.4,369.3 931.8,376.8 938.7,379.5 944.5,379.5 951.4,376.2 960.0,374.3 967.1,373.2 977.8,370.5 992.5,359.2 1001.9,346.3 1012.7,336.9 1026.1,330.2 1039.5,322.7 1048.9,316.8 1055.6,314.1 1062.3,316.0 1071.7,324.9 1083.7,338.3 1093.1,349.0 1101.2,358.4 1106.5,369.9" fill="none" stroke="#ff0000" stroke-width="1.3" />
<line x1="771.5" y1="339.8" x2="771.5" y2="390.5" stroke="#000000" stroke-width="1.2" />
<line x1="771.5" y1="390.5" x2="771.5" y2="436.6" stroke="#ff0000" stroke-width="1.2" />
<circle cx="771.5" cy="441.7" r="5.1" fill="none" stroke="#ff0000" stroke-width="1.2"/>
<line x1="746" y1="365.3" x2="796.9" y2="365.3" stroke="#000000" stroke-width="1.2" />
<rect x="776.3" y="369.9" width="90" height="17.5" fill="#ffffe1" stroke="#646464" stroke-width="1" />
<text x="780.5" y="383" font-family="Liberation Sans" font-size="12.5" fill="#000000" font-weight="normal" text-anchor="start" textLength="81" lengthAdjust="spacingAndGlyphs" >Pikieta:0+57.33'</text>
<path d="M708.6 507.7 L708.6 557 L758.7 557" stroke="#000" stroke-width="1.1" fill="none" />
<rect x="704.2" y="552.3" width="9.5" height="9.3" fill="none" stroke="#000" stroke-width="1.1" />
<path d="M710.2 490.2 L716.4 495.7 L722.6 490.2 M716.4 495.7 L716.4 502.5" stroke="#000" stroke-width="1.1" fill="none" />
<path d="M763 543 L776 556 M776 543 L763 556" stroke="#000" stroke-width="1.1" fill="none" />
<circle cx="1109" cy="206" r="37" fill="none" stroke="#f6f6f6" stroke-width="6"/>
<rect x="1093.5" y="190.5" width="31" height="31" fill="#f0f0f0" stroke="#b8b8b8" stroke-width="1" />
<rect x="1097" y="194" width="24" height="24" fill="#e6e6e6" />
<text x="1109" y="209.5" font-family="Liberation Sans" font-size="8.5" fill="#9a9a9a" font-weight="normal" text-anchor="middle" textLength="15" lengthAdjust="spacingAndGlyphs" >TOP</text>
<text x="1109" y="177" font-family="Liberation Sans" font-size="11" fill="#c4c4c4" font-weight="bold" text-anchor="middle" >N</text>
<text x="1109" y="245" font-family="Liberation Sans" font-size="11" fill="#c4c4c4" font-weight="bold" text-anchor="middle" >S</text>
<text x="1075" y="211" font-family="Liberation Sans" font-size="12" fill="#c8c8c8" font-weight="bold" text-anchor="middle" >W</text>
<text x="1143.5" y="211" font-family="Liberation Sans" font-size="11" fill="#d0d0d0" font-weight="bold" text-anchor="middle" >E</text>
<rect x="1085.5" y="261.5" width="47" height="13.5" fill="#ececf4" rx="3" opacity="0.9"/>
<text x="1088.5" y="272.5" font-family="Liberation Sans" font-size="11" fill="#a6a6b0" font-weight="normal" text-anchor="start" textLength="25" lengthAdjust="spacingAndGlyphs" >WCS</text>
<path d="M1119.5 266 L1128 266 L1123.75 271 Z" stroke="#b0b0b8" stroke-width="1" fill="none" />
<rect x="1099" y="146.5" width="11.5" height="3.5" fill="#e8e8e8" stroke="#5a5a5a" stroke-width="1.1" rx="0.8" />
<rect x="1121.5" y="141.5" width="8.5" height="8.5" fill="#f0f0f0" stroke="#5a5a5a" stroke-width="1.2" rx="1" />
<rect x="1119.5" y="143.5" width="8.5" height="8.5" fill="#f0f0f0" stroke="#5a5a5a" stroke-width="1.2" rx="1" />
<rect x="1122" y="146" width="3.5" height="3.5" fill="none" stroke="#5a5a5a" stroke-width="1" />
<path d="M1140.5 141.5 L1149 150 M1149 141.5 L1140.5 150" stroke="#5a5a5a" stroke-width="3" fill="none" />
<path d="M1140.5 141.5 L1149 150 M1149 141.5 L1140.5 150" stroke="#f4f4f4" stroke-width="1.3" fill="none" />
</g>
<rect x="223" y="570" width="941" height="63" fill="#3b4250" />
<rect x="240.5" y="573" width="919.5" height="37" fill="#c8c8c8" />
<rect x="226" y="578" width="23" height="52" fill="#3b4250" />
<rect x="226" y="573" width="14.5" height="5" fill="#3b4250" />
<rect x="231.0" y="577" width="1.5" height="1.5" fill="#ffffff" />
<rect x="231.0" y="579.6" width="1.5" height="1.5" fill="#ffffff" />
<rect x="233.3" y="577" width="1.5" height="1.5" fill="#ffffff" />
<rect x="233.3" y="579.6" width="1.5" height="1.5" fill="#ffffff" />
<rect x="235.6" y="577" width="1.5" height="1.5" fill="#ffffff" />
<rect x="235.6" y="579.6" width="1.5" height="1.5" fill="#ffffff" />
<rect x="237.9" y="577" width="1.5" height="1.5" fill="#ffffff" />
<rect x="237.9" y="579.6" width="1.5" height="1.5" fill="#ffffff" />
<rect x="240.2" y="577" width="1.5" height="1.5" fill="#ffffff" />
<rect x="240.2" y="579.6" width="1.5" height="1.5" fill="#ffffff" />
<rect x="242.5" y="577" width="1.5" height="1.5" fill="#ffffff" />
<rect x="242.5" y="579.6" width="1.5" height="1.5" fill="#ffffff" />
<rect x="244.8" y="577" width="1.5" height="1.5" fill="#ffffff" />
<rect x="244.8" y="579.6" width="1.5" height="1.5" fill="#ffffff" />
<path d="M233 589 L242 597 M242 589 L233 597" stroke="#e6e6e6" stroke-width="1.8" fill="none" />
<path d="M231.5 621.5 L239.5 613" stroke="#e6e6e6" stroke-width="2.2" fill="none" />
<path d="M237.5 614.5 C235.5 610 237.5 605 242.5 604.2 L240.2 607.6 L241.8 609.6 L245.4 607 C246.2 611.5 242.5 615 238 613.8 Z" stroke="none" stroke-width="1" fill="#e6e6e6" />
<rect x="248.5" y="611" width="911.5" height="20" fill="#ffffff" />
<rect x="248.5" y="609.8" width="911.5" height="1.2" fill="#3b4250" />
<text x="250.4" y="589.5" font-family="Liberation Mono" font-size="11.62" fill="#000000" font-weight="normal" text-anchor="start" stroke="#000" stroke-width="0.25">Określ następny punkt lub [Cofaj]:</text>
<text x="250.4" y="604.3" font-family="Liberation Mono" font-size="11.62" fill="#000000" font-weight="normal" text-anchor="start" stroke="#000" stroke-width="0.25">Określ następny punkt lub [Cofaj]: '_AeccProfileToolset Ponowne generowanie modelu.</text>
<rect x="252.5" y="615.5" width="15" height="11.5" fill="#f2f2f2" stroke="#555" stroke-width="1" />
<rect x="252.5" y="615.5" width="15" height="2" fill="#888" />
<path d="M255 620 L257.5 621.8 L255 623.6 M258.5 624 L261.5 624" stroke="#444" stroke-width="0.8" fill="none" />
<path d="M270.5 618.5 L277.5 618.5 L274 622.5 Z" stroke="none" stroke-width="1" fill="#555" />
<text x="284.2" y="625.6" font-family="Liberation Mono" font-size="11.62" fill="#000000" font-weight="bold" text-anchor="start" textLength="124.6" lengthAdjust="spacingAndGlyphs" >AECCPROFILETOOLSET</text>
<text x="415.7" y="625.6" font-family="Liberation Mono" font-size="11.62" fill="#000000" font-weight="normal" text-anchor="start" >&gt;&gt;Określ pikietę wzdłuż linii bazowej:</text>
<defs><filter id="blur" x="-20%" y="-50%" width="140%" height="200%"><feGaussianBlur stdDeviation="2.2"/></filter></defs>
<text x="18.3" y="53.2" font-family="Liberation Sans" font-size="16" fill="#111111" font-weight="normal" text-anchor="start" textLength="127" lengthAdjust="spacingAndGlyphs" >Kontekstowa karta</text>
<text x="3.3" y="71.5" font-family="Liberation Sans" font-size="16" fill="#111111" font-weight="normal" text-anchor="start" textLength="156" lengthAdjust="spacingAndGlyphs" >Zestaw narzędzi profilu</text>
<g opacity="0.55" filter="url(#blur)"><path d="M154.3 56.5 L199.6 56.5 L199.6 49.1 L214.2 56.5 L199.6 63.9 L199.6 56.5" stroke="#202020" stroke-width="3.5" fill="#202020"/></g>
<path d="M151.3 52.5 L196.6 52.5" stroke="#ff0000" stroke-width="3.2" fill="none" />
<path d="M196.6 45.1 L211.2 52.5 L196.6 59.9 Z" stroke="none" stroke-width="1" fill="#ff0000" />
<text x="34.7" y="297.7" font-family="Liberation Sans" font-size="16" fill="#111111" font-weight="normal" text-anchor="start" textLength="116" lengthAdjust="spacingAndGlyphs" >Śledzenie pikiety</text>
<g opacity="0.55" filter="url(#blur)"><path d="M159 298.2 L222 298.2 L222 290.95 L236.5 298.2 L222 305.45 L222 298.2" stroke="#202020" stroke-width="3.5" fill="#202020"/></g>
<path d="M156 294.2 L219 294.2" stroke="#ff0000" stroke-width="3.2" fill="none" />
<path d="M219 286.95 L233.5 294.2 L219 301.45 Z" stroke="none" stroke-width="1" fill="#ff0000" />
<text x="1249.7" y="365.5" font-family="Liberation Sans" font-size="15" fill="#111111" font-weight="normal" text-anchor="start" textLength="107.5" lengthAdjust="spacingAndGlyphs" >Wybór pikiety w</text>
<text x="1255.7" y="384.1" font-family="Liberation Sans" font-size="15" fill="#111111" font-weight="normal" text-anchor="start" textLength="94" lengthAdjust="spacingAndGlyphs" >widoku profilu</text>
<g opacity="0.55" filter="url(#blur)"><path d="M1243.5 372.5 L1190.5 372.5 L1190.5 365.25 L1175.8 372.5 L1190.5 379.75 L1190.5 372.5" stroke="#202020" stroke-width="3.5" fill="#202020"/></g>
<path d="M1240.5 368.5 L1187.5 368.5" stroke="#ff0000" stroke-width="3.2" fill="none" />
<path d="M1187.5 361.25 L1172.8 368.5 L1187.5 375.75 Z" stroke="none" stroke-width="1" fill="#ff0000" />
<defs><linearGradient id="dlg" x1="0" y1="0" x2="0" y2="1"><stop offset="0" stop-color="#b9c8da"/><stop offset="0.45" stop-color="#cddbeb"/><stop offset="1" stop-color="#dae5f2"/></linearGradient><linearGradient id="btnb" x1="0" y1="0" x2="0" y2="1"><stop offset="0" stop-color="#d3e0ef"/><stop offset="0.45" stop-color="#bdd0e6"/><stop offset="0.46" stop-color="#9db6d3"/><stop offset="1" stop-color="#b8cde5"/></linearGradient><linearGradient id="btnr" x1="0" y1="0" x2="0" y2="1"><stop offset="0" stop-color="#eab2a5"/><stop offset="0.45" stop-color="#dc8c78"/><stop offset="0.46" stop-color="#c4472a"/><stop offset="1" stop-color="#d8745c"/></linearGradient></defs>
<rect x="374" y="130" width="634" height="87" fill="#ffffff" />
<rect x="375.5" y="131.5" width="630" height="84" fill="url(#dlg)" stroke="#1a1a1a" stroke-width="1" />
<rect x="376.5" y="132.5" width="628" height="82" fill="none" stroke="#eef3f9" stroke-width="1" opacity="0.6"/>
<text x="383.3" y="154.2" font-family="Liberation Sans" font-size="13" fill="#9c9c9c" font-weight="normal" text-anchor="start" textLength="185" lengthAdjust="spacingAndGlyphs" >Narzędzia układu profilu - Układ (2)</text>
<rect x="918.5" y="133" width="24.7" height="16.5" fill="url(#btnb)" stroke="#6d829c" stroke-width="0.9" rx="1.5" />
<rect x="943.2" y="133" width="25" height="16.5" fill="url(#btnb)" stroke="#6d829c" stroke-width="0.9" rx="1.5" />
<rect x="968.2" y="133" width="37.3" height="16.5" fill="url(#btnr)" stroke="#5a1a18" stroke-width="0.9" rx="1.5" />
<ellipse cx="935.5" cy="137.5" rx="3.6" ry="3.3" fill="#e6e6e6" stroke="#6a6a6a" stroke-width="0.7"/>
<ellipse cx="930.5" cy="142" rx="5" ry="4.6" fill="#dcdcdc" stroke="#6a6a6a" stroke-width="0.7"/>
<path d="M926.5 145 L924.5 147.5" stroke="#8a8a8a" stroke-width="1.2" fill="none" />
<path d="M951.6 138.6 C951.6 134.6 959.6 134.2 959.6 138.4 C959.6 141.2 955.8 141.4 955.8 144.2" stroke="#3e4e62" stroke-width="3.4" fill="none" />
<path d="M951.6 138.6 C951.6 134.6 959.6 134.2 959.6 138.4 C959.6 141.2 955.8 141.4 955.8 144.2" stroke="#f6f6f6" stroke-width="1.9" fill="none" />
<rect x="954" y="145.6" width="3.6" height="3" fill="#3e4e62" />
<rect x="954.8" y="146.2" width="2" height="1.8" fill="#f6f6f6" />
<path d="M981.5 136.2 L991.5 146.2 M991.5 136.2 L981.5 146.2" stroke="#4a2a2a" stroke-width="4.6" fill="none" />
<path d="M981.5 136.2 L991.5 146.2 M991.5 136.2 L981.5 146.2" stroke="#f6f6f6" stroke-width="3" fill="none" />
<rect x="383" y="162.2" width="615" height="26" fill="#f0f0f0" />
<rect x="383" y="188" width="615" height="1.2" fill="#d6d6d6" />
<rect x="383" y="189.2" width="614" height="18.3" fill="#f0f0f0" />
<rect x="798" y="190" width="1" height="17" fill="#dadada" />
<rect x="626.0" y="162.5" width="1.2" height="25" fill="#a5a5a5" />
<rect x="627.2" y="162.5" width="0.8" height="25" fill="#ffffff" />
<rect x="711.8" y="162.5" width="1.2" height="25" fill="#a5a5a5" />
<rect x="713.0" y="162.5" width="0.8" height="25" fill="#ffffff" />
<rect x="943.0" y="162.5" width="1.2" height="25" fill="#a5a5a5" />
<rect x="944.2" y="162.5" width="0.8" height="25" fill="#ffffff" />
<text x="385.2" y="203" font-family="Liberation Sans" font-size="13" fill="#000000" font-weight="normal" text-anchor="start" textLength="188.5" lengthAdjust="spacingAndGlyphs" >Wybierz polecenie z narzędzi układu</text>
<text x="803" y="202.3" font-family="Liberation Sans" font-size="13" fill="#000000" font-weight="normal" text-anchor="start" textLength="64.5" lengthAdjust="spacingAndGlyphs" >Na bazie PVI</text>
<path d="M390 170 L397 175.8 M405 170 L398.5 175.8" stroke="#3a3a3a" stroke-width="1.1" fill="none" />
<path d="M397.5 172.5 L394.6 177.8 L400.6 177.8 Z" stroke="#3a3a3a" stroke-width="1.5" fill="none" />
<path d="M410.8 173.9 L420.3 173.9 L415.55 178.6 Z" stroke="none" stroke-width="1" fill="#a4a4a4" />
<path d="M435 174.5 L441.5 180 M449 174.5 L443 180" stroke="#ababab" stroke-width="1" fill="none" />
<path d="M442.2 177 L439.6 182.2 L445.2 182.2 Z" stroke="#ababab" stroke-width="1.4" fill="none" />
<path d="M446.3 168 L446.3 174.5 M443 171.3 L449.6 171.3 M444 169 L448.6 173.6 M448.6 169 L444 173.6" stroke="#c6c6c6" stroke-width="1.3" fill="none" />
<path d="M459 167 L465.5 172.5 M474 167 L467.5 172.5" stroke="#ababab" stroke-width="1" fill="none" />
<path d="M466.5 170 L463.8 175.3 L469.3 175.3 Z" stroke="#ababab" stroke-width="1.4" fill="none" />
<path d="M468.8 176.8 L474.3 182.3 M474.3 176.8 L468.8 182.3" stroke="#9a9a9a" stroke-width="2" fill="none" />
<path d="M483 167 L489.5 172.5 M498 167 L491.5 172.5" stroke="#ababab" stroke-width="1" fill="none" />
<path d="M490.5 170 L487.8 175.3 L493.3 175.3 Z" stroke="#ababab" stroke-width="1.4" fill="none" />
<path d="M494.4 174 L494.4 183 M490 178.6 L498.8 178.6" stroke="#9a9a9a" stroke-width="1.3" fill="none" />
<path d="M492.6 175.6 L494.4 173.6 L496.2 175.6 M492.6 181.6 L494.4 183.6 L496.2 181.6 M491.6 176.8 L489.6 178.6 L491.6 180.4 M497.2 176.8 L499.2 178.6 L497.2 180.4" stroke="#9a9a9a" stroke-width="1" fill="none" />
<path d="M514 181.8 L528 168" stroke="#3a3a3a" stroke-width="1" fill="none" />
<rect x="512.6" y="180.6" width="2.6" height="2.6" fill="#3a3a3a" />
<rect x="526.9" y="166.8" width="2.6" height="2.6" fill="#3a3a3a" />
<path d="M533.8 174.3 L543.3 174.3 L538.55 179.0 Z" stroke="none" stroke-width="1" fill="#a4a4a4" />
<path d="M555.3 177.5 Q556.5 171.2 562 170.8 Q567.5 171.2 568.7 177.5" stroke="#2b95e9" stroke-width="1.4" fill="none" />
<rect x="553.7" y="177.6" width="2.6" height="2.6" fill="#3a3a3a" />
<rect x="560.8" y="169.6" width="2.6" height="2.6" fill="#3a3a3a" />
<rect x="567.9" y="177.6" width="2.6" height="2.6" fill="#3a3a3a" />
<path d="M575 174.3 L584.5 174.3 L579.75 179.0 Z" stroke="none" stroke-width="1" fill="#a4a4a4" />
<path d="M600.5 181.5 L614 168.5" stroke="#c6c6c6" stroke-width="1" fill="none" />
<rect x="599.2" y="180.5" width="2" height="2" fill="#c6c6c6" />
<rect x="613" y="167.2" width="2" height="2" fill="#c6c6c6" />
<circle cx="611.4" cy="178.6" r="3.2" fill="none" stroke="#c4c4c4" stroke-width="1.1"/>
<path d="M636 167 L642.5 172.5 M651 167 L644.5 172.5" stroke="#ababab" stroke-width="1" fill="none" />
<path d="M643.5 170 L640.8 175.3 L646.3 175.3 Z" stroke="#ababab" stroke-width="1.4" fill="none" />
<path d="M643.8 182 L651 175" stroke="#b4b4b4" stroke-width="3.2" fill="none" />
<path d="M660 169.5 L667 175 M675 169.5 L668 175" stroke="#ababab" stroke-width="1" fill="none" />
<path d="M667.5 172.5 L664.8 177.8 L670.3 177.8 Z" stroke="#ababab" stroke-width="1.4" fill="none" />
<path d="M667.5 167 L667.5 171 M667.5 179.5 L667.5 183 M665.8 168.8 L667.5 167 L669.2 168.8 M665.8 181.2 L667.5 183 L669.2 181.2" stroke="#9a9a9a" stroke-width="1.1" fill="none" />
<path d="M684 168.5 L688 172 L691 169 L694 172 L698 167.5" stroke="#cfcfcf" stroke-width="1" fill="none" />
<path d="M684 178.5 L690 178.5" stroke="#c0c0c0" stroke-width="1.2" fill="none" />
<rect x="692" y="175.5" width="2.5" height="7" fill="#cdcdcd" />
<rect x="695" y="178.5" width="5" height="4.5" fill="#d4d4d4" />
<path d="M726.5 167.8 L724 172 L729 172 Z" stroke="#3a3a3a" stroke-width="1.2" fill="none" />
<path d="M726 174 L733 180.5 M741 174 L734.5 180.5" stroke="#3a3a3a" stroke-width="1.1" fill="none" />
<path d="M733.8 177.5 L730.8 182.6 L736.8 182.6 Z" stroke="#3a3a3a" stroke-width="1.5" fill="none" />
<path d="M746 174.3 L755.5 174.3 L750.75 179.0 Z" stroke="none" stroke-width="1" fill="#a4a4a4" />
<path d="M773 167 L779.5 172.5 M788 167 L781.5 172.5" stroke="#ababab" stroke-width="1" fill="none" />
<path d="M778 170 L778 176 M775 176 L781 176" stroke="#c6c6c6" stroke-width="1" fill="none" />
<path d="M782 172.5 L782 182 L784.2 180 L786 183.5 L787.6 182.8 L785.8 179.3 L788.6 179 Z" stroke="#9a9a9a" stroke-width="1" fill="#f4f4f4" />
<path d="M801 180.5 L805 176.5 M809 172.5 L814.5 167" stroke="#9e9e9e" stroke-width="1" fill="none" />
<path d="M803 171 L807 167 M804.5 167 L807 167 L807 169.5" stroke="#8a8a8a" stroke-width="1.2" fill="none" />
<rect x="804.5" y="175.5" width="1.5" height="1.5" fill="#9a9a9a" />
<rect x="808" y="175.5" width="1.5" height="1.5" fill="#bbb" />
<rect x="812" y="175.5" width="1.5" height="1.5" fill="#9a9a9a" />
<path d="M809 177 L813 181 M810.5 181 L813 181 L813 178.5" stroke="#8a8a8a" stroke-width="1.2" fill="none" />
<path d="M830 178.5 L833 178.5 M834 177 L837 174.5 M838.5 170.5 L841 168 L845 168" stroke="#b0b0b0" stroke-width="1" fill="none" />
<path d="M839.2 175.3 L845.8 181.9 M845.8 175.3 L839.2 181.9" stroke="#9a9a9a" stroke-width="2.2" fill="none" />
<circle cx="864.8" cy="174.1" r="7.3" fill="#cdcdcd"/>
<path d="M865.3 183 L873.8 174.6" stroke="#f0f0f0" stroke-width="4.2" fill="none" />
<path d="M866.0 182 L873.0 175.2" stroke="#b2b2b2" stroke-width="2.6" fill="none" />
<circle cx="922.2" cy="174.1" r="7.3" fill="#cdcdcd"/>
<path d="M922.7 183 L931.2 174.6" stroke="#f0f0f0" stroke-width="4.2" fill="none" />
<path d="M923.4000000000001 182 L930.4000000000001 175.2" stroke="#b2b2b2" stroke-width="2.6" fill="none" />
<rect x="888" y="167" width="10.9" height="15.8" fill="#f4f4f4" stroke="#b0b0b0" stroke-width="1" />
<rect x="888" y="167" width="10.9" height="2.4" fill="#aaaaaa" />
<path d="M888 172.5 L898.9 172.5 M888 176.5 L898.9 176.5 M893.5 169 L893.5 183" stroke="#b8b8b8" stroke-width="0.9" fill="none" />
<path d="M893.5 183 L901.5 175" stroke="#f0f0f0" stroke-width="4.2" fill="none" />
<path d="M894.2 182 L901 175.4" stroke="#b2b2b2" stroke-width="2.6" fill="none" />
<path d="M951.8 174.8 L957 170.5 L957 173 L962 173 Q966.5 173.5 966.5 178.5 Q964 176.5 961 176.5 L957 176.5 L957 179.2 Z" stroke="#b4b4b4" stroke-width="1" fill="#f6f6f6" />
<path d="M992.4 174.8 L987.2 170.5 L987.2 173 L982.2 173 Q977.5 173.5 977.5 178.5 Q980 176.5 983 176.5 L987.2 176.5 L987.2 179.2 Z" stroke="#b4b4b4" stroke-width="1" fill="#f6f6f6" />
</svg></body></html>
